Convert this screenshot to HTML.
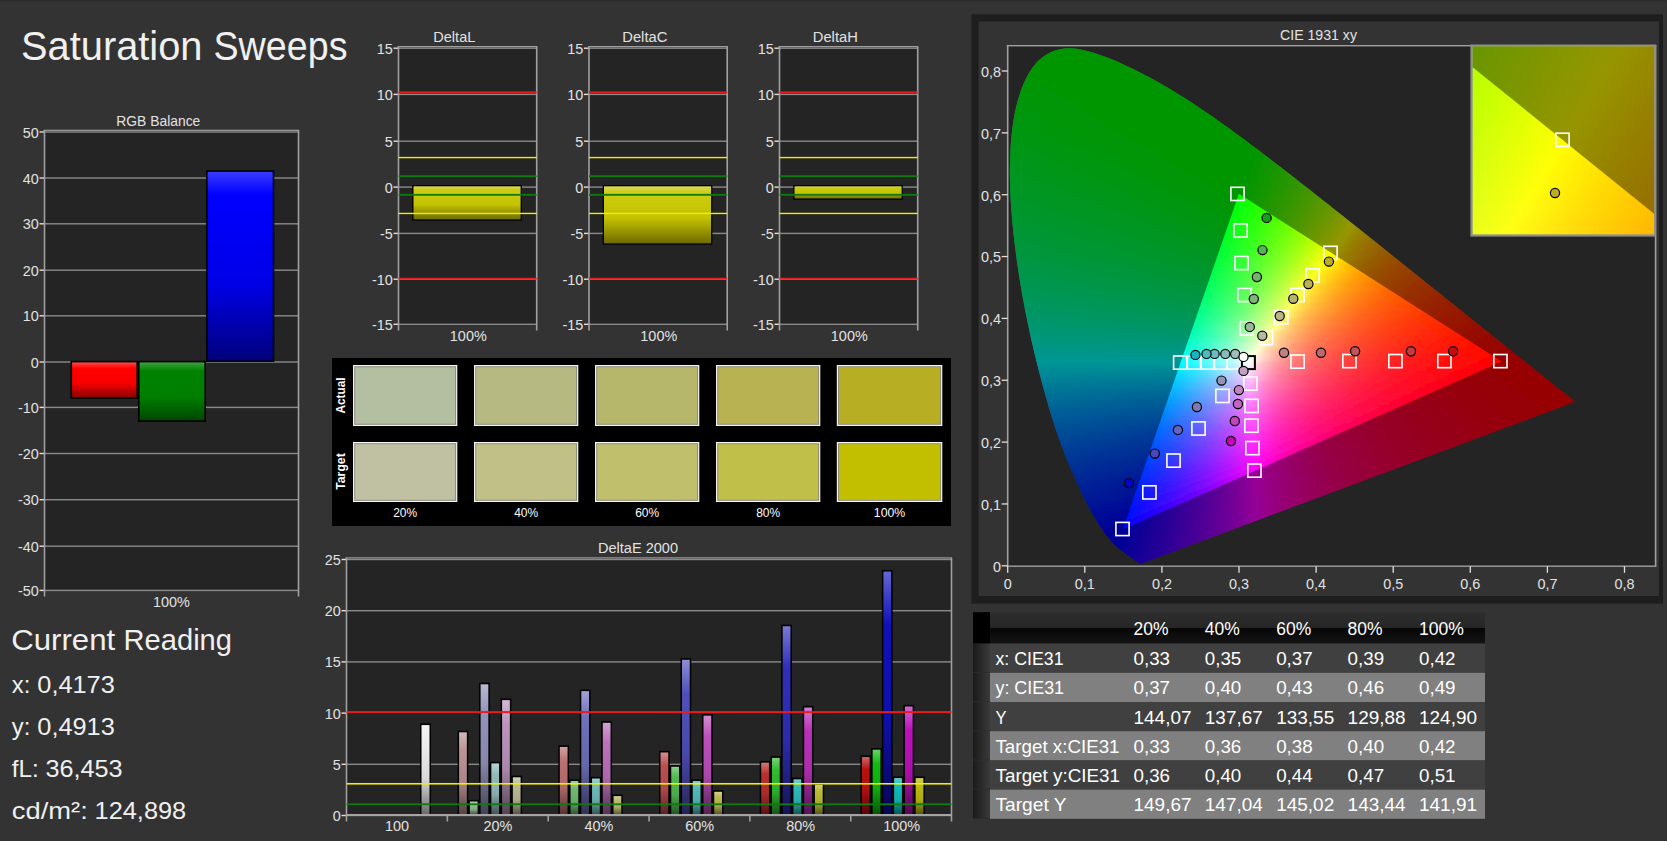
<!DOCTYPE html>
<html><head><meta charset="utf-8"><title>Saturation Sweeps</title>
<style>
html,body{margin:0;padding:0;background:#333333;overflow:hidden}
svg{display:block;font-family:'Liberation Sans', sans-serif;}
</style></head><body>
<svg width="1667" height="841" viewBox="0 0 1667 841">
<defs>
<linearGradient id="l1" x1="0" y1="0" x2="0" y2="1"><stop offset="0" stop-color="#ff4848"/><stop offset="0.18" stop-color="#ff0000"/><stop offset="0.6" stop-color="#f80000"/><stop offset="1" stop-color="#8c0000"/></linearGradient>
<linearGradient id="l2" x1="0" y1="0" x2="0" y2="1"><stop offset="0" stop-color="#3ca03c"/><stop offset="0.15" stop-color="#008200"/><stop offset="0.6" stop-color="#007e00"/><stop offset="1" stop-color="#004800"/></linearGradient>
<linearGradient id="l3" x1="0" y1="0" x2="0" y2="1"><stop offset="0" stop-color="#3a3aff"/><stop offset="0.12" stop-color="#0000ff"/><stop offset="0.6" stop-color="#0000e6"/><stop offset="1" stop-color="#00007c"/></linearGradient>
<linearGradient id="l4" x1="0" y1="0" x2="0" y2="1"><stop offset="0" stop-color="#dada55"/><stop offset="0.12" stop-color="#cccb10"/><stop offset="0.55" stop-color="#c4c300"/><stop offset="1" stop-color="#6e6c00"/></linearGradient>
<linearGradient id="l5" x1="0" y1="0" x2="0" y2="1"><stop offset="0" stop-color="#dada55"/><stop offset="0.12" stop-color="#cccb10"/><stop offset="0.55" stop-color="#c4c300"/><stop offset="1" stop-color="#6e6c00"/></linearGradient>
<linearGradient id="l6" x1="0" y1="0" x2="0" y2="1"><stop offset="0" stop-color="#dada55"/><stop offset="0.12" stop-color="#cccb10"/><stop offset="0.55" stop-color="#c4c300"/><stop offset="1" stop-color="#6e6c00"/></linearGradient>
<linearGradient id="l7" x1="0" y1="724.77" x2="0" y2="814.5" gradientUnits="userSpaceOnUse"><stop offset="0" stop-color="#f3f3f3"/><stop offset="0.22" stop-color="#ececec"/><stop offset="0.6" stop-color="#d9d9d9"/><stop offset="1" stop-color="#6a6a6a"/></linearGradient>
<linearGradient id="l8" x1="0" y1="732.02" x2="0" y2="814.5" gradientUnits="userSpaceOnUse"><stop offset="0" stop-color="#d3baba"/><stop offset="0.22" stop-color="#bb9393"/><stop offset="0.6" stop-color="#ac8787"/><stop offset="1" stop-color="#544242"/></linearGradient>
<linearGradient id="l9" x1="0" y1="801.21" x2="0" y2="814.5" gradientUnits="userSpaceOnUse"><stop offset="0" stop-color="#bad3ba"/><stop offset="0.22" stop-color="#93bb93"/><stop offset="0.6" stop-color="#87ac87"/><stop offset="1" stop-color="#425442"/></linearGradient>
<linearGradient id="l10" x1="0" y1="683.99" x2="0" y2="814.5" gradientUnits="userSpaceOnUse"><stop offset="0" stop-color="#babad3"/><stop offset="0.22" stop-color="#9393bb"/><stop offset="0.6" stop-color="#8787ac"/><stop offset="1" stop-color="#424254"/></linearGradient>
<linearGradient id="l11" x1="0" y1="763.09" x2="0" y2="814.5" gradientUnits="userSpaceOnUse"><stop offset="0" stop-color="#bad3d3"/><stop offset="0.22" stop-color="#93bbbb"/><stop offset="0.6" stop-color="#87acac"/><stop offset="1" stop-color="#425454"/></linearGradient>
<linearGradient id="l12" x1="0" y1="699.83" x2="0" y2="814.5" gradientUnits="userSpaceOnUse"><stop offset="0" stop-color="#d3bad3"/><stop offset="0.22" stop-color="#bb93bb"/><stop offset="0.6" stop-color="#ac87ac"/><stop offset="1" stop-color="#544254"/></linearGradient>
<linearGradient id="l13" x1="0" y1="776.99" x2="0" y2="814.5" gradientUnits="userSpaceOnUse"><stop offset="0" stop-color="#d3d3ba"/><stop offset="0.22" stop-color="#bbbb93"/><stop offset="0.6" stop-color="#acac87"/><stop offset="1" stop-color="#545442"/></linearGradient>
<linearGradient id="l14" x1="0" y1="746.64" x2="0" y2="814.5" gradientUnits="userSpaceOnUse"><stop offset="0" stop-color="#d3a3a3"/><stop offset="0.22" stop-color="#bb7070"/><stop offset="0.6" stop-color="#ac6767"/><stop offset="1" stop-color="#543232"/></linearGradient>
<linearGradient id="l15" x1="0" y1="780.77" x2="0" y2="814.5" gradientUnits="userSpaceOnUse"><stop offset="0" stop-color="#a3d3a3"/><stop offset="0.22" stop-color="#70bb70"/><stop offset="0.6" stop-color="#67ac67"/><stop offset="1" stop-color="#325432"/></linearGradient>
<linearGradient id="l16" x1="0" y1="690.84" x2="0" y2="814.5" gradientUnits="userSpaceOnUse"><stop offset="0" stop-color="#a3a3d3"/><stop offset="0.22" stop-color="#7070bb"/><stop offset="0.6" stop-color="#6767ac"/><stop offset="1" stop-color="#323254"/></linearGradient>
<linearGradient id="l17" x1="0" y1="778.22" x2="0" y2="814.5" gradientUnits="userSpaceOnUse"><stop offset="0" stop-color="#a3d3d3"/><stop offset="0.22" stop-color="#70bbbb"/><stop offset="0.6" stop-color="#67acac"/><stop offset="1" stop-color="#325454"/></linearGradient>
<linearGradient id="l18" x1="0" y1="722.52" x2="0" y2="814.5" gradientUnits="userSpaceOnUse"><stop offset="0" stop-color="#d3a3d3"/><stop offset="0.22" stop-color="#bb70bb"/><stop offset="0.6" stop-color="#ac67ac"/><stop offset="1" stop-color="#543254"/></linearGradient>
<linearGradient id="l19" x1="0" y1="795.8" x2="0" y2="814.5" gradientUnits="userSpaceOnUse"><stop offset="0" stop-color="#d3d3a3"/><stop offset="0.22" stop-color="#bbbb70"/><stop offset="0.6" stop-color="#acac67"/><stop offset="1" stop-color="#545432"/></linearGradient>
<linearGradient id="l20" x1="0" y1="752.16" x2="0" y2="814.5" gradientUnits="userSpaceOnUse"><stop offset="0" stop-color="#d38e8e"/><stop offset="0.22" stop-color="#bb4f4f"/><stop offset="0.6" stop-color="#ac4949"/><stop offset="1" stop-color="#542424"/></linearGradient>
<linearGradient id="l21" x1="0" y1="766.47" x2="0" y2="814.5" gradientUnits="userSpaceOnUse"><stop offset="0" stop-color="#8ed38e"/><stop offset="0.22" stop-color="#4fbb4f"/><stop offset="0.6" stop-color="#49ac49"/><stop offset="1" stop-color="#245424"/></linearGradient>
<linearGradient id="l22" x1="0" y1="659.46" x2="0" y2="814.5" gradientUnits="userSpaceOnUse"><stop offset="0" stop-color="#8e8ed3"/><stop offset="0.22" stop-color="#4f4fbb"/><stop offset="0.6" stop-color="#4949ac"/><stop offset="1" stop-color="#242454"/></linearGradient>
<linearGradient id="l23" x1="0" y1="780.77" x2="0" y2="814.5" gradientUnits="userSpaceOnUse"><stop offset="0" stop-color="#8ed3d3"/><stop offset="0.22" stop-color="#4fbbbb"/><stop offset="0.6" stop-color="#49acac"/><stop offset="1" stop-color="#245454"/></linearGradient>
<linearGradient id="l24" x1="0" y1="715.37" x2="0" y2="814.5" gradientUnits="userSpaceOnUse"><stop offset="0" stop-color="#d38ed3"/><stop offset="0.22" stop-color="#bb4fbb"/><stop offset="0.6" stop-color="#ac49ac"/><stop offset="1" stop-color="#542454"/></linearGradient>
<linearGradient id="l25" x1="0" y1="791.5" x2="0" y2="814.5" gradientUnits="userSpaceOnUse"><stop offset="0" stop-color="#d3d38e"/><stop offset="0.22" stop-color="#bbbb4f"/><stop offset="0.6" stop-color="#acac49"/><stop offset="1" stop-color="#545424"/></linearGradient>
<linearGradient id="l26" x1="0" y1="762.38" x2="0" y2="814.5" gradientUnits="userSpaceOnUse"><stop offset="0" stop-color="#d37a7a"/><stop offset="0.22" stop-color="#bb2f2f"/><stop offset="0.6" stop-color="#ac2b2b"/><stop offset="1" stop-color="#541515"/></linearGradient>
<linearGradient id="l27" x1="0" y1="757.57" x2="0" y2="814.5" gradientUnits="userSpaceOnUse"><stop offset="0" stop-color="#7ad37a"/><stop offset="0.22" stop-color="#2fbb2f"/><stop offset="0.6" stop-color="#2bac2b"/><stop offset="1" stop-color="#155415"/></linearGradient>
<linearGradient id="l28" x1="0" y1="625.94" x2="0" y2="814.5" gradientUnits="userSpaceOnUse"><stop offset="0" stop-color="#7a7ad3"/><stop offset="0.22" stop-color="#2f2fbb"/><stop offset="0.6" stop-color="#2b2bac"/><stop offset="1" stop-color="#151554"/></linearGradient>
<linearGradient id="l29" x1="0" y1="779.04" x2="0" y2="814.5" gradientUnits="userSpaceOnUse"><stop offset="0" stop-color="#7ad3d3"/><stop offset="0.22" stop-color="#2fbbbb"/><stop offset="0.6" stop-color="#2bacac"/><stop offset="1" stop-color="#155454"/></linearGradient>
<linearGradient id="l30" x1="0" y1="707.19" x2="0" y2="814.5" gradientUnits="userSpaceOnUse"><stop offset="0" stop-color="#d37ad3"/><stop offset="0.22" stop-color="#bb2fbb"/><stop offset="0.6" stop-color="#ac2bac"/><stop offset="1" stop-color="#541554"/></linearGradient>
<linearGradient id="l31" x1="0" y1="784.45" x2="0" y2="814.5" gradientUnits="userSpaceOnUse"><stop offset="0" stop-color="#d3d37a"/><stop offset="0.22" stop-color="#bbbb2f"/><stop offset="0.6" stop-color="#acac2b"/><stop offset="1" stop-color="#545415"/></linearGradient>
<linearGradient id="l32" x1="0" y1="756.76" x2="0" y2="814.5" gradientUnits="userSpaceOnUse"><stop offset="0" stop-color="#d36666"/><stop offset="0.22" stop-color="#bb1010"/><stop offset="0.6" stop-color="#ac0f0f"/><stop offset="1" stop-color="#540707"/></linearGradient>
<linearGradient id="l33" x1="0" y1="749.4" x2="0" y2="814.5" gradientUnits="userSpaceOnUse"><stop offset="0" stop-color="#66d366"/><stop offset="0.22" stop-color="#10bb10"/><stop offset="0.6" stop-color="#0fac0f"/><stop offset="1" stop-color="#075407"/></linearGradient>
<linearGradient id="l34" x1="0" y1="571.26" x2="0" y2="814.5" gradientUnits="userSpaceOnUse"><stop offset="0" stop-color="#6666d3"/><stop offset="0.22" stop-color="#1010bb"/><stop offset="0.6" stop-color="#0f0fac"/><stop offset="1" stop-color="#070754"/></linearGradient>
<linearGradient id="l35" x1="0" y1="777.81" x2="0" y2="814.5" gradientUnits="userSpaceOnUse"><stop offset="0" stop-color="#66d3d3"/><stop offset="0.22" stop-color="#10bbbb"/><stop offset="0.6" stop-color="#0facac"/><stop offset="1" stop-color="#075454"/></linearGradient>
<linearGradient id="l36" x1="0" y1="706.17" x2="0" y2="814.5" gradientUnits="userSpaceOnUse"><stop offset="0" stop-color="#d366d3"/><stop offset="0.22" stop-color="#bb10bb"/><stop offset="0.6" stop-color="#ac0fac"/><stop offset="1" stop-color="#540754"/></linearGradient>
<linearGradient id="l37" x1="0" y1="777.81" x2="0" y2="814.5" gradientUnits="userSpaceOnUse"><stop offset="0" stop-color="#d3d366"/><stop offset="0.22" stop-color="#bbbb10"/><stop offset="0.6" stop-color="#acac0f"/><stop offset="1" stop-color="#545407"/></linearGradient>
<linearGradient id="l38" x1="0" y1="0" x2="0" y2="1"><stop offset="0" stop-color="#2e2e2e"/><stop offset="0.5" stop-color="#262626"/><stop offset="0.5" stop-color="#060606"/><stop offset="1" stop-color="#141414"/></linearGradient>
<linearGradient id="l39" x1="0" y1="0" x2="1" y2="0"><stop offset="0" stop-color="#1a1a1a"/><stop offset="1" stop-color="#3a3a3a"/></linearGradient>
<clipPath id="locus"><path d="M1141.59,563.42 L1141.57,563.42 L1141.56,563.41 L1141.55,563.41 L1141.53,563.4 L1141.51,563.41 L1141.48,563.42 L1141.45,563.43 L1141.42,563.44 L1141.38,563.45 L1141.35,563.45 L1141.31,563.44 L1141.27,563.43 L1141.24,563.43 L1141.2,563.43 L1141.16,563.44 L1141.13,563.46 L1141.09,563.48 L1141.06,563.5 L1141.02,563.51 L1140.99,563.52 L1140.95,563.53 L1140.91,563.53 L1140.86,563.53 L1140.81,563.53 L1140.75,563.53 L1140.68,563.53 L1140.61,563.52 L1140.54,563.52 L1140.47,563.52 L1140.4,563.52 L1140.33,563.52 L1140.26,563.52 L1140.18,563.52 L1140.1,563.51 L1140.02,563.5 L1139.94,563.48 L1139.86,563.46 L1139.76,563.43 L1139.64,563.39 L1139.5,563.33 L1139.34,563.26 L1139.18,563.19 L1139.01,563.1 L1138.83,563.01 L1138.64,562.9 L1138.45,562.79 L1138.24,562.66 L1138.03,562.53 L1137.79,562.38 L1137.54,562.21 L1137.27,562.04 L1136.98,561.85 L1136.67,561.64 L1136.34,561.42 L1136.01,561.19 L1135.66,560.93 L1135.3,560.66 L1134.92,560.37 L1134.52,560.07 L1134.09,559.76 L1133.64,559.43 L1133.16,559.08 L1132.65,558.72 L1132.11,558.34 L1131.53,557.93 L1130.92,557.5 L1130.27,557.04 L1129.58,556.55 L1128.85,556.04 L1128.08,555.5 L1127.28,554.94 L1126.45,554.35 L1125.58,553.73 L1124.67,553.07 L1123.71,552.37 L1122.71,551.62 L1121.66,550.82 L1120.58,549.95 L1119.45,549.03 L1118.28,548.05 L1117.08,547 L1115.84,545.87 L1114.54,544.63 L1113.18,543.27 L1111.74,541.73 L1110.2,539.98 L1108.55,538 L1106.78,535.78 L1104.91,533.31 L1102.94,530.59 L1100.9,527.62 L1098.76,524.36 L1096.52,520.79 L1094.18,516.87 L1091.72,512.55 L1089.14,507.81 L1086.45,502.6 L1083.63,496.92 L1080.67,490.75 L1077.57,484.07 L1074.31,476.85 L1070.91,469.05 L1067.38,460.63 L1063.77,451.56 L1060.11,441.81 L1056.47,431.41 L1052.85,420.36 L1049.26,408.66 L1045.67,396.29 L1042.09,383.26 L1038.51,369.59 L1034.98,355.35 L1031.55,340.63 L1028.25,325.52 L1025.13,310.13 L1022.23,294.57 L1019.58,278.91 L1017.19,263.23 L1015.1,247.57 L1013.31,232.03 L1011.86,216.72 L1010.77,201.78 L1010.08,187.29 L1009.81,173.27 L1009.98,159.72 L1010.59,146.63 L1011.65,134.07 L1013.18,122.13 L1015.2,110.9 L1017.72,100.48 L1020.73,90.9 L1024.19,82.19 L1028.08,74.45 L1032.37,67.72 L1037.03,62.08 L1042.04,57.49 L1047.33,53.91 L1052.86,51.26 L1058.57,49.49 L1064.44,48.54 L1070.43,48.36 L1076.52,48.86 L1082.71,49.91 L1088.95,51.41 L1095.25,53.26 L1101.57,55.4 L1107.91,57.78 L1114.22,60.36 L1120.46,63.08 L1126.6,65.9 L1132.64,68.77 L1138.59,71.7 L1144.48,74.7 L1150.31,77.78 L1156.09,80.95 L1161.84,84.2 L1167.54,87.52 L1173.22,90.91 L1178.87,94.38 L1184.5,97.91 L1190.11,101.52 L1195.71,105.19 L1201.3,108.92 L1206.88,112.71 L1212.44,116.55 L1218,120.44 L1223.54,124.38 L1229.08,128.36 L1234.61,132.38 L1240.14,136.44 L1245.67,140.54 L1251.2,144.67 L1256.73,148.83 L1262.26,153.01 L1267.78,157.22 L1273.31,161.46 L1278.84,165.72 L1284.36,170 L1289.89,174.29 L1295.41,178.59 L1300.93,182.91 L1306.44,187.23 L1311.95,191.56 L1317.46,195.9 L1322.95,200.24 L1328.44,204.58 L1333.92,208.92 L1339.38,213.26 L1344.83,217.59 L1350.26,221.91 L1355.67,226.23 L1361.07,230.53 L1366.43,234.82 L1371.78,239.1 L1377.09,243.35 L1382.38,247.58 L1387.63,251.79 L1392.84,255.97 L1398.02,260.12 L1403.15,264.23 L1408.24,268.31 L1413.29,272.34 L1418.29,276.34 L1423.23,280.3 L1428.12,284.21 L1432.95,288.06 L1437.71,291.87 L1442.41,295.62 L1447.04,299.32 L1451.59,302.97 L1456.08,306.56 L1460.48,310.09 L1464.79,313.55 L1468.99,316.93 L1473.07,320.2 L1477.01,323.36 L1480.83,326.41 L1484.54,329.38 L1488.16,332.28 L1491.7,335.11 L1495.17,337.88 L1498.55,340.59 L1501.84,343.22 L1505.02,345.77 L1508.08,348.21 L1511.02,350.55 L1513.83,352.8 L1516.54,354.95 L1519.13,357.02 L1521.64,359.01 L1524.04,360.93 L1526.35,362.78 L1528.56,364.55 L1530.68,366.25 L1532.7,367.87 L1534.64,369.43 L1536.48,370.91 L1538.24,372.32 L1539.93,373.67 L1541.53,374.96 L1543.07,376.19 L1544.54,377.36 L1545.94,378.48 L1547.28,379.55 L1548.57,380.57 L1549.79,381.55 L1550.97,382.49 L1552.09,383.39 L1553.17,384.25 L1554.22,385.09 L1555.24,385.91 L1556.22,386.69 L1557.16,387.45 L1558.07,388.18 L1558.95,388.88 L1559.79,389.55 L1560.59,390.2 L1561.36,390.82 L1562.1,391.41 L1562.81,391.98 L1563.49,392.53 L1564.14,393.05 L1564.76,393.55 L1565.35,394.02 L1565.9,394.46 L1566.42,394.87 L1566.91,395.26 L1567.36,395.62 L1567.79,395.96 L1568.19,396.29 L1568.58,396.6 L1568.95,396.9 L1569.3,397.18 L1569.64,397.45 L1569.95,397.7 L1570.25,397.94 L1570.53,398.17 L1570.8,398.38 L1571.04,398.58 L1571.27,398.76 L1571.47,398.92 L1571.66,399.07 L1571.83,399.21 L1571.98,399.33 L1572.13,399.45 L1572.28,399.57 L1572.42,399.69 L1572.57,399.8 L1572.7,399.91 L1572.83,400.01 L1572.95,400.11 L1573.07,400.2 L1573.18,400.29 L1573.29,400.38 L1573.39,400.46 L1573.5,400.55 L1573.61,400.64 L1573.72,400.73 L1573.83,400.81 L1573.93,400.9 L1574.03,400.98 L1574.14,401.06 L1574.24,401.14 L1574.33,401.22 L1574.42,401.29 L1574.49,401.35 L1574.55,401.4 L1574.6,401.44 L1574.65,401.47 L1574.68,401.5 L1574.72,401.53 L1574.75,401.56 L1574.79,401.59 L1574.81,401.61 L1574.84,401.63 L1574.86,401.65 L1574.88,401.66 L1574.9,401.68 L1574.92,401.69 L1574.92,401.69Z"/></clipPath>
<filter id="vb" x="0" y="0" width="100%" height="100%" filterUnits="objectBoundingBox"><feGaussianBlur stdDeviation="0 1.3"/></filter>
<linearGradient id="c40" gradientUnits="userSpaceOnUse" x1="1053" y1="0" x2="1087" y2="0"><stop offset="0" stop-color="#00ff00"/><stop offset="1" stop-color="#00ff00"/></linearGradient>
<linearGradient id="c41" gradientUnits="userSpaceOnUse" x1="1048" y1="0" x2="1094" y2="0"><stop offset="0" stop-color="#00ff00"/><stop offset="1" stop-color="#00ff00"/></linearGradient>
<linearGradient id="c42" gradientUnits="userSpaceOnUse" x1="1044" y1="0" x2="1101" y2="0"><stop offset="0" stop-color="#00ff00"/><stop offset="1" stop-color="#00ff00"/></linearGradient>
<linearGradient id="c43" gradientUnits="userSpaceOnUse" x1="1041" y1="0" x2="1107" y2="0"><stop offset="0" stop-color="#00ff00"/><stop offset="1" stop-color="#00ff00"/></linearGradient>
<linearGradient id="c44" gradientUnits="userSpaceOnUse" x1="1038" y1="0" x2="1112" y2="0"><stop offset="0" stop-color="#00ff00"/><stop offset="1" stop-color="#00ff00"/></linearGradient>
<linearGradient id="c45" gradientUnits="userSpaceOnUse" x1="1036" y1="0" x2="1117" y2="0"><stop offset="0" stop-color="#00ff00"/><stop offset="1" stop-color="#00ff00"/></linearGradient>
<linearGradient id="c46" gradientUnits="userSpaceOnUse" x1="1034" y1="0" x2="1121" y2="0"><stop offset="0" stop-color="#00ff00"/><stop offset="1" stop-color="#00ff00"/></linearGradient>
<linearGradient id="c47" gradientUnits="userSpaceOnUse" x1="1032" y1="0" x2="1126" y2="0"><stop offset="0" stop-color="#00ff00"/><stop offset="1" stop-color="#00ff00"/></linearGradient>
<linearGradient id="c48" gradientUnits="userSpaceOnUse" x1="1030" y1="0" x2="1130" y2="0"><stop offset="0" stop-color="#00ff00"/><stop offset="1" stop-color="#00ff00"/></linearGradient>
<linearGradient id="c49" gradientUnits="userSpaceOnUse" x1="1029" y1="0" x2="1135" y2="0"><stop offset="0" stop-color="#00ff01"/><stop offset="1" stop-color="#00ff00"/></linearGradient>
<linearGradient id="c50" gradientUnits="userSpaceOnUse" x1="1027" y1="0" x2="1139" y2="0"><stop offset="0" stop-color="#00ff02"/><stop offset="0.17" stop-color="#00ff00"/><stop offset="1" stop-color="#00ff00"/></linearGradient>
<linearGradient id="c51" gradientUnits="userSpaceOnUse" x1="1026" y1="0" x2="1143" y2="0"><stop offset="0" stop-color="#00ff03"/><stop offset="0.17" stop-color="#00ff00"/><stop offset="1" stop-color="#00ff00"/></linearGradient>
<linearGradient id="c52" gradientUnits="userSpaceOnUse" x1="1025" y1="0" x2="1147" y2="0"><stop offset="0" stop-color="#00ff04"/><stop offset="0.19" stop-color="#00ff00"/><stop offset="1" stop-color="#00ff00"/></linearGradient>
<linearGradient id="c53" gradientUnits="userSpaceOnUse" x1="1024" y1="0" x2="1150" y2="0"><stop offset="0" stop-color="#00ff05"/><stop offset="0.21" stop-color="#00ff00"/><stop offset="1" stop-color="#00ff00"/></linearGradient>
<linearGradient id="c54" gradientUnits="userSpaceOnUse" x1="1023" y1="0" x2="1154" y2="0"><stop offset="0" stop-color="#00ff06"/><stop offset="0.23" stop-color="#00ff00"/><stop offset="1" stop-color="#00ff00"/></linearGradient>
<linearGradient id="c55" gradientUnits="userSpaceOnUse" x1="1022" y1="0" x2="1158" y2="0"><stop offset="0" stop-color="#00ff07"/><stop offset="0.25" stop-color="#00ff00"/><stop offset="1" stop-color="#00ff00"/></linearGradient>
<linearGradient id="c56" gradientUnits="userSpaceOnUse" x1="1021" y1="0" x2="1161" y2="0"><stop offset="0" stop-color="#00ff07"/><stop offset="0.27" stop-color="#00ff00"/><stop offset="1" stop-color="#00ff00"/></linearGradient>
<linearGradient id="c57" gradientUnits="userSpaceOnUse" x1="1020" y1="0" x2="1165" y2="0"><stop offset="0" stop-color="#00ff08"/><stop offset="0.29" stop-color="#00ff00"/><stop offset="1" stop-color="#00ff00"/></linearGradient>
<linearGradient id="c58" gradientUnits="userSpaceOnUse" x1="1019" y1="0" x2="1168" y2="0"><stop offset="0" stop-color="#00ff09"/><stop offset="0.31" stop-color="#00ff00"/><stop offset="1" stop-color="#00ff00"/></linearGradient>
<linearGradient id="c59" gradientUnits="userSpaceOnUse" x1="1018" y1="0" x2="1172" y2="0"><stop offset="0" stop-color="#00ff0a"/><stop offset="0.32" stop-color="#00ff00"/><stop offset="1" stop-color="#00ff00"/></linearGradient>
<linearGradient id="c60" gradientUnits="userSpaceOnUse" x1="1018" y1="0" x2="1175" y2="0"><stop offset="0" stop-color="#00ff0b"/><stop offset="0.34" stop-color="#00ff00"/><stop offset="1" stop-color="#00ff00"/></linearGradient>
<linearGradient id="c61" gradientUnits="userSpaceOnUse" x1="1017" y1="0" x2="1178" y2="0"><stop offset="0" stop-color="#00ff0c"/><stop offset="0.35" stop-color="#00ff00"/><stop offset="1" stop-color="#00ff00"/></linearGradient>
<linearGradient id="c62" gradientUnits="userSpaceOnUse" x1="1016" y1="0" x2="1182" y2="0"><stop offset="0" stop-color="#00ff0d"/><stop offset="0.37" stop-color="#00ff00"/><stop offset="1" stop-color="#00ff00"/></linearGradient>
<linearGradient id="c63" gradientUnits="userSpaceOnUse" x1="1016" y1="0" x2="1185" y2="0"><stop offset="0" stop-color="#00ff0e"/><stop offset="0.38" stop-color="#00ff00"/><stop offset="1" stop-color="#00ff00"/></linearGradient>
<linearGradient id="c64" gradientUnits="userSpaceOnUse" x1="1015" y1="0" x2="1188" y2="0"><stop offset="0" stop-color="#00ff0f"/><stop offset="0.4" stop-color="#00ff00"/><stop offset="1" stop-color="#00ff00"/></linearGradient>
<linearGradient id="c65" gradientUnits="userSpaceOnUse" x1="1014" y1="0" x2="1191" y2="0"><stop offset="0" stop-color="#00ff10"/><stop offset="0.41" stop-color="#00ff00"/><stop offset="1" stop-color="#00ff00"/></linearGradient>
<linearGradient id="c66" gradientUnits="userSpaceOnUse" x1="1014" y1="0" x2="1194" y2="0"><stop offset="0" stop-color="#00ff11"/><stop offset="0.42" stop-color="#00ff00"/><stop offset="1" stop-color="#00ff00"/></linearGradient>
<linearGradient id="c67" gradientUnits="userSpaceOnUse" x1="1013" y1="0" x2="1197" y2="0"><stop offset="0" stop-color="#00ff12"/><stop offset="0.43" stop-color="#00ff00"/><stop offset="1" stop-color="#00ff00"/></linearGradient>
<linearGradient id="c68" gradientUnits="userSpaceOnUse" x1="1013" y1="0" x2="1200" y2="0"><stop offset="0" stop-color="#00ff12"/><stop offset="0.44" stop-color="#00ff00"/><stop offset="1" stop-color="#00ff00"/></linearGradient>
<linearGradient id="c69" gradientUnits="userSpaceOnUse" x1="1012" y1="0" x2="1203" y2="0"><stop offset="0" stop-color="#00ff14"/><stop offset="0.46" stop-color="#00ff00"/><stop offset="1" stop-color="#00ff00"/></linearGradient>
<linearGradient id="c70" gradientUnits="userSpaceOnUse" x1="1012" y1="0" x2="1206" y2="0"><stop offset="0" stop-color="#00ff14"/><stop offset="0.46" stop-color="#00ff00"/><stop offset="1" stop-color="#00ff00"/></linearGradient>
<linearGradient id="c71" gradientUnits="userSpaceOnUse" x1="1011" y1="0" x2="1209" y2="0"><stop offset="0" stop-color="#00ff15"/><stop offset="0.47" stop-color="#00ff00"/><stop offset="1" stop-color="#00ff00"/></linearGradient>
<linearGradient id="c72" gradientUnits="userSpaceOnUse" x1="1011" y1="0" x2="1212" y2="0"><stop offset="0" stop-color="#00ff16"/><stop offset="0.48" stop-color="#00ff00"/><stop offset="1" stop-color="#00ff00"/></linearGradient>
<linearGradient id="c73" gradientUnits="userSpaceOnUse" x1="1011" y1="0" x2="1215" y2="0"><stop offset="0" stop-color="#00ff17"/><stop offset="0.5" stop-color="#00ff00"/><stop offset="1" stop-color="#00ff00"/></linearGradient>
<linearGradient id="c74" gradientUnits="userSpaceOnUse" x1="1010" y1="0" x2="1218" y2="0"><stop offset="0" stop-color="#00ff18"/><stop offset="0.5" stop-color="#00ff00"/><stop offset="1" stop-color="#00ff00"/></linearGradient>
<linearGradient id="c75" gradientUnits="userSpaceOnUse" x1="1010" y1="0" x2="1221" y2="0"><stop offset="0" stop-color="#00ff19"/><stop offset="0.51" stop-color="#00ff00"/><stop offset="1" stop-color="#00ff00"/></linearGradient>
<linearGradient id="c76" gradientUnits="userSpaceOnUse" x1="1010" y1="0" x2="1224" y2="0"><stop offset="0" stop-color="#00ff1a"/><stop offset="0.52" stop-color="#00ff00"/><stop offset="1" stop-color="#00ff00"/></linearGradient>
<linearGradient id="c77" gradientUnits="userSpaceOnUse" x1="1009" y1="0" x2="1227" y2="0"><stop offset="0" stop-color="#00ff1b"/><stop offset="0.53" stop-color="#00ff00"/><stop offset="1" stop-color="#00ff00"/></linearGradient>
<linearGradient id="c78" gradientUnits="userSpaceOnUse" x1="1009" y1="0" x2="1229" y2="0"><stop offset="0" stop-color="#00ff1c"/><stop offset="0.54" stop-color="#00ff00"/><stop offset="1" stop-color="#00ff00"/></linearGradient>
<linearGradient id="c79" gradientUnits="userSpaceOnUse" x1="1009" y1="0" x2="1232" y2="0"><stop offset="0" stop-color="#00ff1d"/><stop offset="0.54" stop-color="#00ff00"/><stop offset="1" stop-color="#00ff00"/></linearGradient>
<linearGradient id="c80" gradientUnits="userSpaceOnUse" x1="1009" y1="0" x2="1235" y2="0"><stop offset="0" stop-color="#00ff1e"/><stop offset="0.55" stop-color="#00ff00"/><stop offset="1" stop-color="#00ff00"/></linearGradient>
<linearGradient id="c81" gradientUnits="userSpaceOnUse" x1="1008" y1="0" x2="1238" y2="0"><stop offset="0" stop-color="#00ff1f"/><stop offset="0.56" stop-color="#00ff00"/><stop offset="1" stop-color="#00ff00"/></linearGradient>
<linearGradient id="c82" gradientUnits="userSpaceOnUse" x1="1008" y1="0" x2="1240" y2="0"><stop offset="0" stop-color="#00ff20"/><stop offset="0.53" stop-color="#00ff01"/><stop offset="0.77" stop-color="#00ff00"/><stop offset="1" stop-color="#00ff00"/></linearGradient>
<linearGradient id="c83" gradientUnits="userSpaceOnUse" x1="1008" y1="0" x2="1243" y2="0"><stop offset="0" stop-color="#00ff21"/><stop offset="0.53" stop-color="#00ff02"/><stop offset="0.59" stop-color="#00ff00"/><stop offset="1" stop-color="#00ff00"/></linearGradient>
<linearGradient id="c84" gradientUnits="userSpaceOnUse" x1="1008" y1="0" x2="1246" y2="0"><stop offset="0" stop-color="#00ff21"/><stop offset="0.52" stop-color="#00ff03"/><stop offset="0.58" stop-color="#00ff00"/><stop offset="1" stop-color="#00ff00"/></linearGradient>
<linearGradient id="c85" gradientUnits="userSpaceOnUse" x1="1008" y1="0" x2="1248" y2="0"><stop offset="0" stop-color="#00ff22"/><stop offset="0.51" stop-color="#00ff04"/><stop offset="0.59" stop-color="#00ff00"/><stop offset="1" stop-color="#00ff00"/></linearGradient>
<linearGradient id="c86" gradientUnits="userSpaceOnUse" x1="1007.7" y1="0" x2="1251" y2="0"><stop offset="0" stop-color="#00ff23"/><stop offset="0.51" stop-color="#00ff05"/><stop offset="0.6" stop-color="#00ff00"/><stop offset="1" stop-color="#00ff00"/></linearGradient>
<linearGradient id="c87" gradientUnits="userSpaceOnUse" x1="1007.7" y1="0" x2="1254" y2="0"><stop offset="0" stop-color="#00ff24"/><stop offset="0.5" stop-color="#00ff06"/><stop offset="0.6" stop-color="#00ff00"/><stop offset="1" stop-color="#00ff00"/></linearGradient>
<linearGradient id="c88" gradientUnits="userSpaceOnUse" x1="1007.7" y1="0" x2="1256" y2="0"><stop offset="0" stop-color="#00ff25"/><stop offset="0.49" stop-color="#00ff07"/><stop offset="0.61" stop-color="#00ff00"/><stop offset="1" stop-color="#00ff00"/></linearGradient>
<linearGradient id="c89" gradientUnits="userSpaceOnUse" x1="1007.7" y1="0" x2="1259" y2="0"><stop offset="0" stop-color="#00ff26"/><stop offset="0.49" stop-color="#00ff08"/><stop offset="0.61" stop-color="#00ff00"/><stop offset="0.99" stop-color="#00ff00"/><stop offset="1" stop-color="#02ff00"/></linearGradient>
<linearGradient id="c90" gradientUnits="userSpaceOnUse" x1="1007.7" y1="0" x2="1262" y2="0"><stop offset="0" stop-color="#00ff27"/><stop offset="0.48" stop-color="#00ff09"/><stop offset="0.62" stop-color="#00ff00"/><stop offset="0.98" stop-color="#01ff00"/><stop offset="1" stop-color="#07ff00"/></linearGradient>
<linearGradient id="c91" gradientUnits="userSpaceOnUse" x1="1007.7" y1="0" x2="1264" y2="0"><stop offset="0" stop-color="#00ff28"/><stop offset="0.47" stop-color="#00ff0a"/><stop offset="0.62" stop-color="#00ff00"/><stop offset="0.97" stop-color="#00ff00"/><stop offset="1" stop-color="#0bff00"/></linearGradient>
<linearGradient id="c92" gradientUnits="userSpaceOnUse" x1="1007.7" y1="0" x2="1267" y2="0"><stop offset="0" stop-color="#00ff29"/><stop offset="0.47" stop-color="#00ff0b"/><stop offset="0.63" stop-color="#00ff00"/><stop offset="0.95" stop-color="#00ff00"/><stop offset="1" stop-color="#10ff00"/></linearGradient>
<linearGradient id="c93" gradientUnits="userSpaceOnUse" x1="1007.7" y1="0" x2="1270" y2="0"><stop offset="0" stop-color="#00ff2a"/><stop offset="0.46" stop-color="#00ff0c"/><stop offset="0.63" stop-color="#00ff00"/><stop offset="0.94" stop-color="#01ff00"/><stop offset="1" stop-color="#15ff00"/></linearGradient>
<linearGradient id="c94" gradientUnits="userSpaceOnUse" x1="1007.7" y1="0" x2="1272" y2="0"><stop offset="0" stop-color="#00ff2b"/><stop offset="0.45" stop-color="#00ff0e"/><stop offset="0.64" stop-color="#00ff00"/><stop offset="0.93" stop-color="#00ff00"/><stop offset="1" stop-color="#19ff00"/></linearGradient>
<linearGradient id="c95" gradientUnits="userSpaceOnUse" x1="1007.7" y1="0" x2="1275" y2="0"><stop offset="0" stop-color="#00ff2c"/><stop offset="0.45" stop-color="#00ff0f"/><stop offset="0.64" stop-color="#00ff00"/><stop offset="0.92" stop-color="#00ff00"/><stop offset="1" stop-color="#1eff00"/></linearGradient>
<linearGradient id="c96" gradientUnits="userSpaceOnUse" x1="1007.7" y1="0" x2="1278" y2="0"><stop offset="0" stop-color="#00ff2d"/><stop offset="0.44" stop-color="#00ff10"/><stop offset="0.65" stop-color="#00ff00"/><stop offset="0.91" stop-color="#01ff00"/><stop offset="1" stop-color="#23ff00"/></linearGradient>
<linearGradient id="c97" gradientUnits="userSpaceOnUse" x1="1007.7" y1="0" x2="1280" y2="0"><stop offset="0" stop-color="#00ff2e"/><stop offset="0.44" stop-color="#00ff11"/><stop offset="0.65" stop-color="#00ff00"/><stop offset="0.9" stop-color="#01ff00"/><stop offset="1" stop-color="#27ff00"/></linearGradient>
<linearGradient id="c98" gradientUnits="userSpaceOnUse" x1="1007.7" y1="0" x2="1283" y2="0"><stop offset="0" stop-color="#00ff2f"/><stop offset="0.43" stop-color="#00ff12"/><stop offset="0.66" stop-color="#00ff00"/><stop offset="0.88" stop-color="#00ff00"/><stop offset="1" stop-color="#2dff00"/></linearGradient>
<linearGradient id="c99" gradientUnits="userSpaceOnUse" x1="1007.7" y1="0" x2="1285" y2="0"><stop offset="0" stop-color="#00ff31"/><stop offset="0.43" stop-color="#00ff13"/><stop offset="0.66" stop-color="#00ff00"/><stop offset="0.87" stop-color="#00ff00"/><stop offset="1" stop-color="#31ff00"/></linearGradient>
<linearGradient id="c100" gradientUnits="userSpaceOnUse" x1="1007.7" y1="0" x2="1288" y2="0"><stop offset="0" stop-color="#00ff32"/><stop offset="0.42" stop-color="#00ff14"/><stop offset="0.67" stop-color="#00ff00"/><stop offset="0.86" stop-color="#01ff00"/><stop offset="1" stop-color="#37ff00"/></linearGradient>
<linearGradient id="c101" gradientUnits="userSpaceOnUse" x1="1007.7" y1="0" x2="1290" y2="0"><stop offset="0" stop-color="#00ff33"/><stop offset="0.42" stop-color="#00ff16"/><stop offset="0.68" stop-color="#00ff00"/><stop offset="0.85" stop-color="#00ff00"/><stop offset="1" stop-color="#3bff00"/></linearGradient>
<linearGradient id="c102" gradientUnits="userSpaceOnUse" x1="1007.7" y1="0" x2="1293" y2="0"><stop offset="0" stop-color="#00ff34"/><stop offset="0.41" stop-color="#00ff17"/><stop offset="0.68" stop-color="#00ff00"/><stop offset="0.84" stop-color="#00ff00"/><stop offset="0.98" stop-color="#3bff00"/><stop offset="1" stop-color="#42ff00"/></linearGradient>
<linearGradient id="c103" gradientUnits="userSpaceOnUse" x1="1007.7" y1="0" x2="1296" y2="0"><stop offset="0" stop-color="#00ff35"/><stop offset="0.41" stop-color="#00ff18"/><stop offset="0.68" stop-color="#00ff00"/><stop offset="0.83" stop-color="#01ff00"/><stop offset="0.98" stop-color="#3eff00"/><stop offset="1" stop-color="#48ff00"/></linearGradient>
<linearGradient id="c104" gradientUnits="userSpaceOnUse" x1="1007.7" y1="0" x2="1298" y2="0"><stop offset="0" stop-color="#00ff36"/><stop offset="0.41" stop-color="#00ff19"/><stop offset="0.69" stop-color="#00ff00"/><stop offset="0.82" stop-color="#00ff00"/><stop offset="0.97" stop-color="#3eff00"/><stop offset="1" stop-color="#4dff00"/></linearGradient>
<linearGradient id="c105" gradientUnits="userSpaceOnUse" x1="1007.7" y1="0" x2="1301" y2="0"><stop offset="0" stop-color="#00ff37"/><stop offset="0.4" stop-color="#00ff1a"/><stop offset="0.69" stop-color="#00ff00"/><stop offset="0.81" stop-color="#00ff00"/><stop offset="0.95" stop-color="#3dff00"/><stop offset="1" stop-color="#53ff00"/></linearGradient>
<linearGradient id="c106" gradientUnits="userSpaceOnUse" x1="1007.7" y1="0" x2="1303" y2="0"><stop offset="0" stop-color="#00ff38"/><stop offset="0.4" stop-color="#00ff1b"/><stop offset="0.7" stop-color="#00ff00"/><stop offset="0.81" stop-color="#01ff00"/><stop offset="0.94" stop-color="#3eff00"/><stop offset="1" stop-color="#58ff00"/></linearGradient>
<linearGradient id="c107" gradientUnits="userSpaceOnUse" x1="1007.7" y1="0" x2="1306" y2="0"><stop offset="0" stop-color="#00ff39"/><stop offset="0.39" stop-color="#00ff1d"/><stop offset="0.7" stop-color="#00ff00"/><stop offset="0.79" stop-color="#00ff00"/><stop offset="0.93" stop-color="#3eff00"/><stop offset="1" stop-color="#5fff00"/></linearGradient>
<linearGradient id="c108" gradientUnits="userSpaceOnUse" x1="1007.7" y1="0" x2="1308" y2="0"><stop offset="0" stop-color="#00ff3b"/><stop offset="0.39" stop-color="#00ff1e"/><stop offset="0.71" stop-color="#00ff00"/><stop offset="0.79" stop-color="#00ff00"/><stop offset="0.92" stop-color="#3eff00"/><stop offset="1" stop-color="#64ff00"/></linearGradient>
<linearGradient id="c109" gradientUnits="userSpaceOnUse" x1="1007.7" y1="0" x2="1311" y2="0"><stop offset="0" stop-color="#00ff3c"/><stop offset="0.38" stop-color="#00ff1f"/><stop offset="0.7" stop-color="#00ff01"/><stop offset="0.78" stop-color="#01ff00"/><stop offset="0.91" stop-color="#3fff00"/><stop offset="1" stop-color="#6bff00"/></linearGradient>
<linearGradient id="c110" gradientUnits="userSpaceOnUse" x1="1007.7" y1="0" x2="1313" y2="0"><stop offset="0" stop-color="#00ff3d"/><stop offset="0.38" stop-color="#00ff20"/><stop offset="0.69" stop-color="#00ff02"/><stop offset="0.73" stop-color="#00ff00"/><stop offset="0.77" stop-color="#01ff00"/><stop offset="0.9" stop-color="#3eff00"/><stop offset="1" stop-color="#71ff00"/></linearGradient>
<linearGradient id="c111" gradientUnits="userSpaceOnUse" x1="1007.7" y1="0" x2="1316" y2="0"><stop offset="0" stop-color="#00ff3e"/><stop offset="0.38" stop-color="#00ff22"/><stop offset="0.68" stop-color="#00ff03"/><stop offset="0.72" stop-color="#00ff00"/><stop offset="0.76" stop-color="#00ff00"/><stop offset="0.89" stop-color="#3dff00"/><stop offset="1" stop-color="#78ff00"/></linearGradient>
<linearGradient id="c112" gradientUnits="userSpaceOnUse" x1="1007.7" y1="0" x2="1319" y2="0"><stop offset="0" stop-color="#00ff3f"/><stop offset="0.37" stop-color="#00ff23"/><stop offset="0.67" stop-color="#00ff05"/><stop offset="0.72" stop-color="#00ff00"/><stop offset="0.75" stop-color="#00ff00"/><stop offset="0.87" stop-color="#38ff00"/><stop offset="0.99" stop-color="#78ff00"/><stop offset="1" stop-color="#80ff00"/></linearGradient>
<linearGradient id="c113" gradientUnits="userSpaceOnUse" x1="1007.7" y1="0" x2="1321" y2="0"><stop offset="0" stop-color="#00ff41"/><stop offset="0.37" stop-color="#00ff24"/><stop offset="0.67" stop-color="#00ff06"/><stop offset="0.73" stop-color="#00ff00"/><stop offset="0.74" stop-color="#01ff00"/><stop offset="0.87" stop-color="#3fff00"/><stop offset="0.99" stop-color="#7eff00"/><stop offset="1" stop-color="#86ff00"/></linearGradient>
<linearGradient id="c114" gradientUnits="userSpaceOnUse" x1="1007.7" y1="0" x2="1324" y2="0"><stop offset="0" stop-color="#00ff42"/><stop offset="0.36" stop-color="#00ff26"/><stop offset="0.66" stop-color="#00ff07"/><stop offset="0.73" stop-color="#00ff00"/><stop offset="0.75" stop-color="#06ff00"/><stop offset="0.87" stop-color="#44ff00"/><stop offset="0.98" stop-color="#84ff00"/><stop offset="1" stop-color="#8eff00"/></linearGradient>
<linearGradient id="c115" gradientUnits="userSpaceOnUse" x1="1007.7" y1="0" x2="1326" y2="0"><stop offset="0" stop-color="#00ff43"/><stop offset="0.36" stop-color="#00ff27"/><stop offset="0.65" stop-color="#00ff09"/><stop offset="0.73" stop-color="#00ff00"/><stop offset="0.85" stop-color="#3bff00"/><stop offset="0.96" stop-color="#7bff00"/><stop offset="1" stop-color="#94ff00"/></linearGradient>
<linearGradient id="c116" gradientUnits="userSpaceOnUse" x1="1007.7" y1="0" x2="1329" y2="0"><stop offset="0" stop-color="#00ff44"/><stop offset="0.35" stop-color="#00ff28"/><stop offset="0.64" stop-color="#00ff0b"/><stop offset="0.72" stop-color="#01ff01"/><stop offset="0.76" stop-color="#13ff00"/><stop offset="0.87" stop-color="#51ff00"/><stop offset="0.98" stop-color="#92ff00"/><stop offset="1" stop-color="#9cff00"/></linearGradient>
<linearGradient id="c117" gradientUnits="userSpaceOnUse" x1="1007.7" y1="0" x2="1331" y2="0"><stop offset="0" stop-color="#00ff46"/><stop offset="0.35" stop-color="#00ff2a"/><stop offset="0.64" stop-color="#00ff0c"/><stop offset="0.71" stop-color="#00ff03"/><stop offset="0.75" stop-color="#11ff00"/><stop offset="0.86" stop-color="#50ff00"/><stop offset="0.97" stop-color="#8fff00"/><stop offset="1" stop-color="#a3ff00"/></linearGradient>
<linearGradient id="c118" gradientUnits="userSpaceOnUse" x1="1007.7" y1="0" x2="1334" y2="0"><stop offset="0" stop-color="#00ff47"/><stop offset="0.35" stop-color="#00ff2b"/><stop offset="0.63" stop-color="#00ff0d"/><stop offset="0.7" stop-color="#00ff05"/><stop offset="0.75" stop-color="#17ff00"/><stop offset="0.86" stop-color="#55ff00"/><stop offset="0.97" stop-color="#95ff00"/><stop offset="1" stop-color="#acff00"/></linearGradient>
<linearGradient id="c119" gradientUnits="userSpaceOnUse" x1="1007.7" y1="0" x2="1336" y2="0"><stop offset="0" stop-color="#00ff48"/><stop offset="0.35" stop-color="#00ff2c"/><stop offset="0.63" stop-color="#00ff0f"/><stop offset="0.7" stop-color="#01ff06"/><stop offset="0.75" stop-color="#1dff00"/><stop offset="0.87" stop-color="#5cff00"/><stop offset="0.97" stop-color="#9cff00"/><stop offset="1" stop-color="#b3ff00"/></linearGradient>
<linearGradient id="c120" gradientUnits="userSpaceOnUse" x1="1007.7" y1="0" x2="1339" y2="0"><stop offset="0" stop-color="#00ff4a"/><stop offset="0.34" stop-color="#00ff2e"/><stop offset="0.62" stop-color="#00ff10"/><stop offset="0.69" stop-color="#01ff08"/><stop offset="0.75" stop-color="#23ff00"/><stop offset="0.86" stop-color="#62ff00"/><stop offset="0.96" stop-color="#a2ff00"/><stop offset="1" stop-color="#bcff00"/></linearGradient>
<linearGradient id="c121" gradientUnits="userSpaceOnUse" x1="1007.7" y1="0" x2="1341" y2="0"><stop offset="0" stop-color="#00ff4b"/><stop offset="0.34" stop-color="#00ff2f"/><stop offset="0.62" stop-color="#00ff12"/><stop offset="0.68" stop-color="#00ff0a"/><stop offset="0.76" stop-color="#29ff00"/><stop offset="0.87" stop-color="#69ff00"/><stop offset="0.96" stop-color="#a9ff00"/><stop offset="1" stop-color="#c3ff00"/></linearGradient>
<linearGradient id="c122" gradientUnits="userSpaceOnUse" x1="1007.7" y1="0" x2="1344" y2="0"><stop offset="0" stop-color="#00ff4c"/><stop offset="0.34" stop-color="#00ff31"/><stop offset="0.61" stop-color="#00ff13"/><stop offset="0.67" stop-color="#00ff0b"/><stop offset="0.76" stop-color="#30ff00"/><stop offset="0.87" stop-color="#6fff00"/><stop offset="0.96" stop-color="#b0ff00"/><stop offset="1" stop-color="#cdff00"/></linearGradient>
<linearGradient id="c123" gradientUnits="userSpaceOnUse" x1="1007.7" y1="0" x2="1346" y2="0"><stop offset="0" stop-color="#00ff4e"/><stop offset="0.33" stop-color="#00ff32"/><stop offset="0.6" stop-color="#00ff15"/><stop offset="0.67" stop-color="#01ff0d"/><stop offset="0.77" stop-color="#37ff00"/><stop offset="0.87" stop-color="#75ff00"/><stop offset="0.96" stop-color="#b5ff00"/><stop offset="1" stop-color="#d5ff00"/></linearGradient>
<linearGradient id="c124" gradientUnits="userSpaceOnUse" x1="1008" y1="0" x2="1349" y2="0"><stop offset="0" stop-color="#00ff4f"/><stop offset="0.33" stop-color="#00ff34"/><stop offset="0.6" stop-color="#00ff16"/><stop offset="0.66" stop-color="#01ff0e"/><stop offset="0.77" stop-color="#3eff00"/><stop offset="0.87" stop-color="#7eff00"/><stop offset="0.96" stop-color="#c0ff00"/><stop offset="1" stop-color="#e0ff00"/></linearGradient>
<linearGradient id="c125" gradientUnits="userSpaceOnUse" x1="1008" y1="0" x2="1351" y2="0"><stop offset="0" stop-color="#00ff50"/><stop offset="0.33" stop-color="#00ff35"/><stop offset="0.59" stop-color="#00ff18"/><stop offset="0.65" stop-color="#00ff10"/><stop offset="0.76" stop-color="#3eff01"/><stop offset="0.86" stop-color="#7eff00"/><stop offset="0.95" stop-color="#c0ff00"/><stop offset="1" stop-color="#e8ff00"/></linearGradient>
<linearGradient id="c126" gradientUnits="userSpaceOnUse" x1="1008" y1="0" x2="1354" y2="0"><stop offset="0" stop-color="#00ff52"/><stop offset="0.32" stop-color="#00ff37"/><stop offset="0.59" stop-color="#00ff1a"/><stop offset="0.64" stop-color="#00ff12"/><stop offset="0.74" stop-color="#37ff04"/><stop offset="0.77" stop-color="#4cff00"/><stop offset="0.87" stop-color="#8dff00"/><stop offset="0.96" stop-color="#cfff00"/><stop offset="1" stop-color="#f3ff00"/></linearGradient>
<linearGradient id="c127" gradientUnits="userSpaceOnUse" x1="1008" y1="0" x2="1356" y2="0"><stop offset="0" stop-color="#00ff53"/><stop offset="0.32" stop-color="#00ff38"/><stop offset="0.58" stop-color="#00ff1b"/><stop offset="0.64" stop-color="#01ff13"/><stop offset="0.74" stop-color="#3eff04"/><stop offset="0.78" stop-color="#54ff00"/><stop offset="0.87" stop-color="#93ff00"/><stop offset="0.95" stop-color="#d5ff00"/><stop offset="1" stop-color="#fcff00"/></linearGradient>
<linearGradient id="c128" gradientUnits="userSpaceOnUse" x1="1008" y1="0" x2="1359" y2="0"><stop offset="0" stop-color="#00ff55"/><stop offset="0.32" stop-color="#00ff3a"/><stop offset="0.58" stop-color="#00ff1d"/><stop offset="0.63" stop-color="#00ff15"/><stop offset="0.74" stop-color="#3dff06"/><stop offset="0.78" stop-color="#5bff00"/><stop offset="0.87" stop-color="#9cff00"/><stop offset="0.95" stop-color="#dfff00"/><stop offset="0.99" stop-color="#fffe00"/><stop offset="1" stop-color="#fff700"/></linearGradient>
<linearGradient id="c129" gradientUnits="userSpaceOnUse" x1="1008" y1="0" x2="1361" y2="0"><stop offset="0" stop-color="#00ff56"/><stop offset="0.32" stop-color="#00ff3b"/><stop offset="0.57" stop-color="#00ff1e"/><stop offset="0.63" stop-color="#00ff17"/><stop offset="0.72" stop-color="#3aff09"/><stop offset="0.78" stop-color="#63ff00"/><stop offset="0.87" stop-color="#a4ff00"/><stop offset="0.95" stop-color="#e5ff00"/><stop offset="0.98" stop-color="#feff00"/><stop offset="1" stop-color="#ffee00"/></linearGradient>
<linearGradient id="c130" gradientUnits="userSpaceOnUse" x1="1008" y1="0" x2="1364" y2="0"><stop offset="0" stop-color="#00ff57"/><stop offset="0.31" stop-color="#00ff3d"/><stop offset="0.56" stop-color="#00ff20"/><stop offset="0.62" stop-color="#01ff19"/><stop offset="0.72" stop-color="#3fff0a"/><stop offset="0.79" stop-color="#6bff00"/><stop offset="0.87" stop-color="#abff00"/><stop offset="0.95" stop-color="#eeff00"/><stop offset="0.97" stop-color="#fffe00"/><stop offset="1" stop-color="#ffe400"/></linearGradient>
<linearGradient id="c131" gradientUnits="userSpaceOnUse" x1="1009" y1="0" x2="1366" y2="0"><stop offset="0" stop-color="#00ff59"/><stop offset="0.31" stop-color="#00ff3e"/><stop offset="0.56" stop-color="#00ff22"/><stop offset="0.61" stop-color="#00ff1b"/><stop offset="0.71" stop-color="#3dff0c"/><stop offset="0.79" stop-color="#73ff00"/><stop offset="0.87" stop-color="#b5ff00"/><stop offset="0.95" stop-color="#f7ff00"/><stop offset="0.96" stop-color="#ffff00"/><stop offset="1" stop-color="#ffdc00"/></linearGradient>
<linearGradient id="c132" gradientUnits="userSpaceOnUse" x1="1009" y1="0" x2="1369" y2="0"><stop offset="0" stop-color="#00ff5a"/><stop offset="0.31" stop-color="#00ff40"/><stop offset="0.56" stop-color="#00ff24"/><stop offset="0.61" stop-color="#00ff1d"/><stop offset="0.7" stop-color="#3bff0f"/><stop offset="0.79" stop-color="#7aff00"/><stop offset="0.87" stop-color="#baff00"/><stop offset="0.95" stop-color="#fffe00"/><stop offset="0.99" stop-color="#ffdd00"/><stop offset="1" stop-color="#ffd300"/></linearGradient>
<linearGradient id="c133" gradientUnits="userSpaceOnUse" x1="1009" y1="0" x2="1371" y2="0"><stop offset="0" stop-color="#00ff5c"/><stop offset="0.31" stop-color="#00ff41"/><stop offset="0.55" stop-color="#00ff25"/><stop offset="0.6" stop-color="#01ff1e"/><stop offset="0.7" stop-color="#3fff10"/><stop offset="0.79" stop-color="#7eff01"/><stop offset="0.87" stop-color="#c0ff00"/><stop offset="0.94" stop-color="#ffff00"/><stop offset="0.98" stop-color="#ffda00"/><stop offset="1" stop-color="#ffcc00"/></linearGradient>
<linearGradient id="c134" gradientUnits="userSpaceOnUse" x1="1009" y1="0" x2="1374" y2="0"><stop offset="0" stop-color="#00ff5d"/><stop offset="0.3" stop-color="#00ff43"/><stop offset="0.55" stop-color="#00ff27"/><stop offset="0.59" stop-color="#01ff20"/><stop offset="0.69" stop-color="#3eff12"/><stop offset="0.78" stop-color="#7fff03"/><stop offset="0.8" stop-color="#92ff00"/><stop offset="0.88" stop-color="#d4ff00"/><stop offset="0.93" stop-color="#fffe00"/><stop offset="0.96" stop-color="#ffdd00"/><stop offset="1" stop-color="#ffc300"/></linearGradient>
<linearGradient id="c135" gradientUnits="userSpaceOnUse" x1="1009" y1="0" x2="1376" y2="0"><stop offset="0" stop-color="#00ff5f"/><stop offset="0.3" stop-color="#00ff45"/><stop offset="0.54" stop-color="#00ff29"/><stop offset="0.59" stop-color="#00ff22"/><stop offset="0.68" stop-color="#3eff14"/><stop offset="0.77" stop-color="#7dff06"/><stop offset="0.8" stop-color="#99ff00"/><stop offset="0.88" stop-color="#ddff00"/><stop offset="0.92" stop-color="#ffff00"/><stop offset="0.96" stop-color="#ffd900"/><stop offset="1" stop-color="#ffbd00"/></linearGradient>
<linearGradient id="c136" gradientUnits="userSpaceOnUse" x1="1010" y1="0" x2="1379" y2="0"><stop offset="0" stop-color="#00ff60"/><stop offset="0.3" stop-color="#00ff46"/><stop offset="0.54" stop-color="#00ff2a"/><stop offset="0.58" stop-color="#00ff24"/><stop offset="0.66" stop-color="#33ff19"/><stop offset="0.75" stop-color="#72ff0a"/><stop offset="0.8" stop-color="#a3ff00"/><stop offset="0.88" stop-color="#e5ff00"/><stop offset="0.91" stop-color="#fffe00"/><stop offset="0.94" stop-color="#ffdc00"/><stop offset="0.99" stop-color="#ffbc00"/><stop offset="1" stop-color="#ffb500"/></linearGradient>
<linearGradient id="c137" gradientUnits="userSpaceOnUse" x1="1010" y1="0" x2="1381" y2="0"><stop offset="0" stop-color="#00ff62"/><stop offset="0.3" stop-color="#00ff48"/><stop offset="0.53" stop-color="#00ff2c"/><stop offset="0.58" stop-color="#01ff26"/><stop offset="0.67" stop-color="#3eff18"/><stop offset="0.75" stop-color="#7dff0a"/><stop offset="0.81" stop-color="#adff00"/><stop offset="0.88" stop-color="#eeff00"/><stop offset="0.89" stop-color="#ffff00"/><stop offset="0.94" stop-color="#ffdb00"/><stop offset="0.98" stop-color="#ffba00"/><stop offset="1" stop-color="#ffaf00"/></linearGradient>
<linearGradient id="c138" gradientUnits="userSpaceOnUse" x1="1010" y1="0" x2="1384" y2="0"><stop offset="0" stop-color="#00ff63"/><stop offset="0.29" stop-color="#00ff4a"/><stop offset="0.53" stop-color="#00ff2e"/><stop offset="0.57" stop-color="#00ff28"/><stop offset="0.66" stop-color="#3eff1a"/><stop offset="0.74" stop-color="#7eff0c"/><stop offset="0.81" stop-color="#b7ff00"/><stop offset="0.88" stop-color="#faff00"/><stop offset="0.89" stop-color="#fffe00"/><stop offset="0.92" stop-color="#ffdc00"/><stop offset="0.97" stop-color="#ffbb00"/><stop offset="1" stop-color="#ffa800"/></linearGradient>
<linearGradient id="c139" gradientUnits="userSpaceOnUse" x1="1010" y1="0" x2="1386" y2="0"><stop offset="0" stop-color="#00ff65"/><stop offset="0.29" stop-color="#00ff4b"/><stop offset="0.52" stop-color="#00ff30"/><stop offset="0.56" stop-color="#00ff2b"/><stop offset="0.64" stop-color="#36ff1e"/><stop offset="0.73" stop-color="#75ff10"/><stop offset="0.8" stop-color="#b6ff02"/><stop offset="0.82" stop-color="#caff00"/><stop offset="0.88" stop-color="#ffff00"/><stop offset="0.91" stop-color="#ffda00"/><stop offset="0.96" stop-color="#ffba00"/><stop offset="1" stop-color="#ffa200"/></linearGradient>
<linearGradient id="c140" gradientUnits="userSpaceOnUse" x1="1010" y1="0" x2="1389" y2="0"><stop offset="0" stop-color="#00ff67"/><stop offset="0.29" stop-color="#00ff4d"/><stop offset="0.52" stop-color="#00ff32"/><stop offset="0.56" stop-color="#01ff2c"/><stop offset="0.65" stop-color="#3eff1f"/><stop offset="0.73" stop-color="#7cff11"/><stop offset="0.8" stop-color="#beff03"/><stop offset="0.82" stop-color="#d2ff00"/><stop offset="0.87" stop-color="#fffe00"/><stop offset="0.9" stop-color="#ffdb00"/><stop offset="0.94" stop-color="#ffbc00"/><stop offset="1" stop-color="#ff9d00"/><stop offset="1" stop-color="#ff9c00"/></linearGradient>
<linearGradient id="c141" gradientUnits="userSpaceOnUse" x1="1011" y1="0" x2="1391" y2="0"><stop offset="0" stop-color="#00ff68"/><stop offset="0.29" stop-color="#00ff4f"/><stop offset="0.52" stop-color="#00ff34"/><stop offset="0.55" stop-color="#00ff2f"/><stop offset="0.64" stop-color="#3dff21"/><stop offset="0.72" stop-color="#7cff13"/><stop offset="0.79" stop-color="#bfff05"/><stop offset="0.82" stop-color="#dbff00"/><stop offset="0.86" stop-color="#ffff00"/><stop offset="0.89" stop-color="#ffda00"/><stop offset="0.94" stop-color="#ffbb00"/><stop offset="0.99" stop-color="#ff9c00"/><stop offset="1" stop-color="#ff9700"/></linearGradient>
<linearGradient id="c142" gradientUnits="userSpaceOnUse" x1="1011" y1="0" x2="1394" y2="0"><stop offset="0" stop-color="#00ff6a"/><stop offset="0.28" stop-color="#00ff51"/><stop offset="0.51" stop-color="#00ff36"/><stop offset="0.55" stop-color="#00ff31"/><stop offset="0.63" stop-color="#39ff24"/><stop offset="0.7" stop-color="#78ff17"/><stop offset="0.78" stop-color="#b8ff09"/><stop offset="0.82" stop-color="#e7ff00"/><stop offset="0.85" stop-color="#fffe00"/><stop offset="0.88" stop-color="#ffdd00"/><stop offset="0.92" stop-color="#ffbd00"/><stop offset="0.97" stop-color="#ff9f00"/><stop offset="1" stop-color="#ff9000"/></linearGradient>
<linearGradient id="c143" gradientUnits="userSpaceOnUse" x1="1011" y1="0" x2="1396" y2="0"><stop offset="0" stop-color="#00ff6c"/><stop offset="0.28" stop-color="#00ff53"/><stop offset="0.51" stop-color="#00ff37"/><stop offset="0.54" stop-color="#01ff33"/><stop offset="0.63" stop-color="#3fff25"/><stop offset="0.71" stop-color="#7fff18"/><stop offset="0.78" stop-color="#c1ff0a"/><stop offset="0.82" stop-color="#f1ff00"/><stop offset="0.84" stop-color="#ffff00"/><stop offset="0.88" stop-color="#ffda00"/><stop offset="0.92" stop-color="#ffba00"/><stop offset="0.97" stop-color="#ff9c00"/><stop offset="1" stop-color="#ff8c00"/></linearGradient>
<linearGradient id="c144" gradientUnits="userSpaceOnUse" x1="1011" y1="0" x2="1399" y2="0"><stop offset="0" stop-color="#00ff6d"/><stop offset="0.28" stop-color="#00ff54"/><stop offset="0.5" stop-color="#00ff3a"/><stop offset="0.54" stop-color="#00ff35"/><stop offset="0.62" stop-color="#3dff28"/><stop offset="0.7" stop-color="#7dff1b"/><stop offset="0.77" stop-color="#bfff0d"/><stop offset="0.82" stop-color="#fdff00"/><stop offset="0.83" stop-color="#fffb00"/><stop offset="0.86" stop-color="#ffda00"/><stop offset="0.9" stop-color="#ffba00"/><stop offset="0.95" stop-color="#ff9c00"/><stop offset="1" stop-color="#ff8600"/></linearGradient>
<linearGradient id="c145" gradientUnits="userSpaceOnUse" x1="1012" y1="0" x2="1401" y2="0"><stop offset="0" stop-color="#00ff6f"/><stop offset="0.28" stop-color="#00ff56"/><stop offset="0.5" stop-color="#00ff3b"/><stop offset="0.53" stop-color="#00ff37"/><stop offset="0.61" stop-color="#3bff2b"/><stop offset="0.68" stop-color="#79ff1e"/><stop offset="0.75" stop-color="#bbff10"/><stop offset="0.82" stop-color="#ffff02"/><stop offset="0.84" stop-color="#ffec00"/><stop offset="0.87" stop-color="#ffcc00"/><stop offset="0.92" stop-color="#ffad00"/><stop offset="0.97" stop-color="#ff8f00"/><stop offset="1" stop-color="#ff8100"/></linearGradient>
<linearGradient id="c146" gradientUnits="userSpaceOnUse" x1="1012" y1="0" x2="1404" y2="0"><stop offset="0" stop-color="#00ff71"/><stop offset="0.28" stop-color="#00ff58"/><stop offset="0.5" stop-color="#00ff3d"/><stop offset="0.53" stop-color="#01ff39"/><stop offset="0.61" stop-color="#3fff2d"/><stop offset="0.68" stop-color="#7eff1f"/><stop offset="0.75" stop-color="#beff12"/><stop offset="0.81" stop-color="#fdff05"/><stop offset="0.81" stop-color="#fffb04"/><stop offset="0.83" stop-color="#ffe600"/><stop offset="0.87" stop-color="#ffc500"/><stop offset="0.92" stop-color="#ffa600"/><stop offset="0.97" stop-color="#ff8800"/><stop offset="1" stop-color="#ff7c00"/></linearGradient>
<linearGradient id="c147" gradientUnits="userSpaceOnUse" x1="1012" y1="0" x2="1406" y2="0"><stop offset="0" stop-color="#00ff72"/><stop offset="0.27" stop-color="#00ff5a"/><stop offset="0.49" stop-color="#00ff40"/><stop offset="0.52" stop-color="#01ff3c"/><stop offset="0.6" stop-color="#3fff2f"/><stop offset="0.68" stop-color="#7eff22"/><stop offset="0.74" stop-color="#bfff15"/><stop offset="0.8" stop-color="#ffff08"/><stop offset="0.84" stop-color="#ffdb00"/><stop offset="0.88" stop-color="#ffba00"/><stop offset="0.92" stop-color="#ff9c00"/><stop offset="0.98" stop-color="#ff7f00"/><stop offset="1" stop-color="#ff7800"/></linearGradient>
<linearGradient id="c148" gradientUnits="userSpaceOnUse" x1="1012" y1="0" x2="1409" y2="0"><stop offset="0" stop-color="#00ff74"/><stop offset="0.27" stop-color="#00ff5c"/><stop offset="0.49" stop-color="#00ff42"/><stop offset="0.51" stop-color="#00ff3e"/><stop offset="0.59" stop-color="#3cff32"/><stop offset="0.66" stop-color="#7cff25"/><stop offset="0.73" stop-color="#bdff18"/><stop offset="0.79" stop-color="#fdff0b"/><stop offset="0.79" stop-color="#fffb0a"/><stop offset="0.83" stop-color="#ffd901"/><stop offset="0.85" stop-color="#ffc600"/><stop offset="0.89" stop-color="#ffa800"/><stop offset="0.94" stop-color="#ff8b00"/><stop offset="1" stop-color="#ff7300"/></linearGradient>
<linearGradient id="c149" gradientUnits="userSpaceOnUse" x1="1013" y1="0" x2="1411" y2="0"><stop offset="0" stop-color="#00ff76"/><stop offset="0.27" stop-color="#00ff5e"/><stop offset="0.48" stop-color="#00ff44"/><stop offset="0.51" stop-color="#00ff41"/><stop offset="0.57" stop-color="#32ff37"/><stop offset="0.65" stop-color="#71ff2a"/><stop offset="0.71" stop-color="#b1ff1d"/><stop offset="0.77" stop-color="#f3ff10"/><stop offset="0.78" stop-color="#ffff0e"/><stop offset="0.82" stop-color="#ffda04"/><stop offset="0.84" stop-color="#ffc500"/><stop offset="0.88" stop-color="#ffa600"/><stop offset="0.94" stop-color="#ff8a00"/><stop offset="1" stop-color="#ff6f00"/></linearGradient>
<linearGradient id="c150" gradientUnits="userSpaceOnUse" x1="1013" y1="0" x2="1414" y2="0"><stop offset="0" stop-color="#00ff78"/><stop offset="0.27" stop-color="#00ff60"/><stop offset="0.48" stop-color="#00ff46"/><stop offset="0.5" stop-color="#01ff43"/><stop offset="0.58" stop-color="#3eff37"/><stop offset="0.65" stop-color="#7dff2a"/><stop offset="0.72" stop-color="#bfff1d"/><stop offset="0.77" stop-color="#fdff11"/><stop offset="0.78" stop-color="#fffb10"/><stop offset="0.81" stop-color="#ffd907"/><stop offset="0.84" stop-color="#ffbc00"/><stop offset="0.89" stop-color="#ff9e00"/><stop offset="0.94" stop-color="#ff8100"/><stop offset="1" stop-color="#ff6a00"/></linearGradient>
<linearGradient id="c151" gradientUnits="userSpaceOnUse" x1="1013" y1="0" x2="1416" y2="0"><stop offset="0" stop-color="#00ff7a"/><stop offset="0.27" stop-color="#00ff62"/><stop offset="0.48" stop-color="#00ff48"/><stop offset="0.5" stop-color="#00ff45"/><stop offset="0.58" stop-color="#3eff39"/><stop offset="0.65" stop-color="#7dff2d"/><stop offset="0.71" stop-color="#bdff21"/><stop offset="0.76" stop-color="#ffff14"/><stop offset="0.8" stop-color="#ffdc0a"/><stop offset="0.83" stop-color="#ffbc02"/><stop offset="0.85" stop-color="#ffae00"/><stop offset="0.9" stop-color="#ff9000"/><stop offset="0.96" stop-color="#ff7500"/><stop offset="1" stop-color="#ff6700"/></linearGradient>
<linearGradient id="c152" gradientUnits="userSpaceOnUse" x1="1014" y1="0" x2="1419" y2="0"><stop offset="0" stop-color="#00ff7b"/><stop offset="0.27" stop-color="#00ff64"/><stop offset="0.48" stop-color="#00ff4a"/><stop offset="0.49" stop-color="#00ff48"/><stop offset="0.56" stop-color="#35ff3e"/><stop offset="0.63" stop-color="#74ff32"/><stop offset="0.69" stop-color="#b6ff25"/><stop offset="0.75" stop-color="#f7ff18"/><stop offset="0.76" stop-color="#fffe17"/><stop offset="0.79" stop-color="#ffdd0d"/><stop offset="0.82" stop-color="#ffbd04"/><stop offset="0.85" stop-color="#ffab00"/><stop offset="0.9" stop-color="#ff8d00"/><stop offset="0.96" stop-color="#ff7200"/><stop offset="1" stop-color="#ff6200"/></linearGradient>
<linearGradient id="c153" gradientUnits="userSpaceOnUse" x1="1014" y1="0" x2="1421" y2="0"><stop offset="0" stop-color="#00ff7d"/><stop offset="0.27" stop-color="#00ff66"/><stop offset="0.47" stop-color="#00ff4d"/><stop offset="0.49" stop-color="#01ff4a"/><stop offset="0.56" stop-color="#3eff3f"/><stop offset="0.63" stop-color="#7eff32"/><stop offset="0.69" stop-color="#bfff26"/><stop offset="0.75" stop-color="#ffff1a"/><stop offset="0.78" stop-color="#ffdc10"/><stop offset="0.82" stop-color="#ffbb06"/><stop offset="0.85" stop-color="#ffa300"/><stop offset="0.9" stop-color="#ff8600"/><stop offset="0.97" stop-color="#ff6b00"/><stop offset="1" stop-color="#ff5f00"/></linearGradient>
<linearGradient id="c154" gradientUnits="userSpaceOnUse" x1="1014" y1="0" x2="1424" y2="0"><stop offset="0" stop-color="#00ff7f"/><stop offset="0.26" stop-color="#00ff68"/><stop offset="0.47" stop-color="#00ff4f"/><stop offset="0.48" stop-color="#00ff4d"/><stop offset="0.56" stop-color="#3eff41"/><stop offset="0.62" stop-color="#7cff36"/><stop offset="0.68" stop-color="#bdff2a"/><stop offset="0.74" stop-color="#fdff1e"/><stop offset="0.74" stop-color="#fffb1c"/><stop offset="0.77" stop-color="#ffda12"/><stop offset="0.81" stop-color="#ffba08"/><stop offset="0.85" stop-color="#ff9b00"/><stop offset="0.9" stop-color="#ff7f00"/><stop offset="0.97" stop-color="#ff6500"/><stop offset="1" stop-color="#ff5b00"/></linearGradient>
<linearGradient id="c155" gradientUnits="userSpaceOnUse" x1="1014" y1="0" x2="1426" y2="0"><stop offset="0" stop-color="#00ff81"/><stop offset="0.26" stop-color="#00ff6a"/><stop offset="0.47" stop-color="#00ff51"/><stop offset="0.48" stop-color="#00ff4f"/><stop offset="0.54" stop-color="#37ff45"/><stop offset="0.61" stop-color="#75ff3a"/><stop offset="0.67" stop-color="#b6ff2e"/><stop offset="0.73" stop-color="#f9ff22"/><stop offset="0.73" stop-color="#ffff21"/><stop offset="0.76" stop-color="#ffdb15"/><stop offset="0.8" stop-color="#ffba0b"/><stop offset="0.84" stop-color="#ff9c02"/><stop offset="0.87" stop-color="#ff8e00"/><stop offset="0.92" stop-color="#ff7200"/><stop offset="1" stop-color="#ff5800"/><stop offset="1" stop-color="#ff5800"/></linearGradient>
<linearGradient id="c156" gradientUnits="userSpaceOnUse" x1="1015" y1="0" x2="1429" y2="0"><stop offset="0" stop-color="#00ff83"/><stop offset="0.26" stop-color="#00ff6c"/><stop offset="0.46" stop-color="#00ff53"/><stop offset="0.47" stop-color="#01ff52"/><stop offset="0.55" stop-color="#3fff47"/><stop offset="0.61" stop-color="#7fff3b"/><stop offset="0.67" stop-color="#bfff30"/><stop offset="0.72" stop-color="#fdff24"/><stop offset="0.72" stop-color="#fffb22"/><stop offset="0.75" stop-color="#ffda18"/><stop offset="0.79" stop-color="#ffb90d"/><stop offset="0.83" stop-color="#ff9a04"/><stop offset="0.86" stop-color="#ff8b00"/><stop offset="0.92" stop-color="#ff7000"/><stop offset="0.99" stop-color="#ff5700"/><stop offset="1" stop-color="#ff5400"/></linearGradient>
<linearGradient id="c157" gradientUnits="userSpaceOnUse" x1="1015" y1="0" x2="1431" y2="0"><stop offset="0" stop-color="#00ff85"/><stop offset="0.26" stop-color="#00ff6e"/><stop offset="0.46" stop-color="#00ff56"/><stop offset="0.47" stop-color="#00ff55"/><stop offset="0.54" stop-color="#3dff4a"/><stop offset="0.6" stop-color="#7dff3e"/><stop offset="0.66" stop-color="#bdff33"/><stop offset="0.71" stop-color="#ffff27"/><stop offset="0.74" stop-color="#ffdd1c"/><stop offset="0.78" stop-color="#ffbd12"/><stop offset="0.82" stop-color="#ff9f07"/><stop offset="0.86" stop-color="#ff8600"/><stop offset="0.92" stop-color="#ff6b00"/><stop offset="1" stop-color="#ff5200"/><stop offset="1" stop-color="#ff5100"/></linearGradient>
<linearGradient id="c158" gradientUnits="userSpaceOnUse" x1="1015" y1="0" x2="1434" y2="0"><stop offset="0" stop-color="#00ff87"/><stop offset="0.26" stop-color="#00ff71"/><stop offset="0.46" stop-color="#00ff58"/><stop offset="0.46" stop-color="#00ff57"/><stop offset="0.53" stop-color="#3bff4d"/><stop offset="0.59" stop-color="#7bff42"/><stop offset="0.65" stop-color="#bbff37"/><stop offset="0.7" stop-color="#fdff2b"/><stop offset="0.71" stop-color="#fffa29"/><stop offset="0.74" stop-color="#ffd91e"/><stop offset="0.77" stop-color="#ffba13"/><stop offset="0.81" stop-color="#ff9c09"/><stop offset="0.86" stop-color="#ff8000"/><stop offset="0.92" stop-color="#ff6500"/><stop offset="1" stop-color="#ff4d00"/></linearGradient>
<linearGradient id="c159" gradientUnits="userSpaceOnUse" x1="1016" y1="0" x2="1436" y2="0"><stop offset="0" stop-color="#00ff89"/><stop offset="0.26" stop-color="#00ff73"/><stop offset="0.46" stop-color="#00ff5a"/><stop offset="0.51" stop-color="#2bff53"/><stop offset="0.57" stop-color="#6aff48"/><stop offset="0.63" stop-color="#abff3d"/><stop offset="0.68" stop-color="#ecff32"/><stop offset="0.7" stop-color="#ffff2e"/><stop offset="0.73" stop-color="#ffdd22"/><stop offset="0.76" stop-color="#ffbd17"/><stop offset="0.8" stop-color="#ff9e0c"/><stop offset="0.85" stop-color="#ff8102"/><stop offset="0.87" stop-color="#ff7600"/><stop offset="0.94" stop-color="#ff5c00"/><stop offset="1" stop-color="#ff4a00"/></linearGradient>
<linearGradient id="c160" gradientUnits="userSpaceOnUse" x1="1016" y1="0" x2="1439" y2="0"><stop offset="0" stop-color="#00ff8b"/><stop offset="0.26" stop-color="#00ff75"/><stop offset="0.45" stop-color="#00ff5d"/><stop offset="0.46" stop-color="#05ff5c"/><stop offset="0.52" stop-color="#41ff52"/><stop offset="0.59" stop-color="#81ff47"/><stop offset="0.64" stop-color="#c3ff3c"/><stop offset="0.69" stop-color="#fdff32"/><stop offset="0.69" stop-color="#fffa30"/><stop offset="0.72" stop-color="#ffd824"/><stop offset="0.75" stop-color="#ffb918"/><stop offset="0.79" stop-color="#ff9b0d"/><stop offset="0.84" stop-color="#ff7f03"/><stop offset="0.87" stop-color="#ff7200"/><stop offset="0.94" stop-color="#ff5900"/><stop offset="1" stop-color="#ff4700"/></linearGradient>
<linearGradient id="c161" gradientUnits="userSpaceOnUse" x1="1016" y1="0" x2="1441" y2="0"><stop offset="0" stop-color="#00ff8d"/><stop offset="0.25" stop-color="#00ff78"/><stop offset="0.45" stop-color="#00ff60"/><stop offset="0.52" stop-color="#3cff56"/><stop offset="0.58" stop-color="#7cff4b"/><stop offset="0.63" stop-color="#beff40"/><stop offset="0.68" stop-color="#ffff35"/><stop offset="0.71" stop-color="#ffdc28"/><stop offset="0.74" stop-color="#ffbc1c"/><stop offset="0.78" stop-color="#ff9d11"/><stop offset="0.83" stop-color="#ff8106"/><stop offset="0.87" stop-color="#ff6e00"/><stop offset="0.94" stop-color="#ff5500"/><stop offset="1" stop-color="#ff4400"/></linearGradient>
<linearGradient id="c162" gradientUnits="userSpaceOnUse" x1="1017" y1="0" x2="1444" y2="0"><stop offset="0" stop-color="#00ff8f"/><stop offset="0.25" stop-color="#00ff7a"/><stop offset="0.44" stop-color="#00ff63"/><stop offset="0.49" stop-color="#2eff5b"/><stop offset="0.56" stop-color="#6dff51"/><stop offset="0.61" stop-color="#adff46"/><stop offset="0.66" stop-color="#f0ff3b"/><stop offset="0.67" stop-color="#fdff39"/><stop offset="0.68" stop-color="#fffa37"/><stop offset="0.7" stop-color="#ffd82a"/><stop offset="0.74" stop-color="#ffb81e"/><stop offset="0.78" stop-color="#ff9a12"/><stop offset="0.83" stop-color="#ff7d07"/><stop offset="0.87" stop-color="#ff6900"/><stop offset="0.94" stop-color="#ff5000"/><stop offset="1" stop-color="#ff4100"/></linearGradient>
<linearGradient id="c163" gradientUnits="userSpaceOnUse" x1="1017" y1="0" x2="1446" y2="0"><stop offset="0" stop-color="#00ff92"/><stop offset="0.25" stop-color="#00ff7c"/><stop offset="0.44" stop-color="#01ff66"/><stop offset="0.51" stop-color="#3eff5c"/><stop offset="0.56" stop-color="#7dff52"/><stop offset="0.62" stop-color="#bdff47"/><stop offset="0.67" stop-color="#ffff3d"/><stop offset="0.69" stop-color="#ffde30"/><stop offset="0.72" stop-color="#ffbf23"/><stop offset="0.76" stop-color="#ffa117"/><stop offset="0.81" stop-color="#ff840c"/><stop offset="0.86" stop-color="#ff6901"/><stop offset="0.93" stop-color="#ff5000"/><stop offset="1" stop-color="#ff3e00"/></linearGradient>
<linearGradient id="c164" gradientUnits="userSpaceOnUse" x1="1017" y1="0" x2="1449" y2="0"><stop offset="0" stop-color="#00ff94"/><stop offset="0.25" stop-color="#00ff7f"/><stop offset="0.44" stop-color="#00ff69"/><stop offset="0.5" stop-color="#3eff5f"/><stop offset="0.56" stop-color="#7dff55"/><stop offset="0.61" stop-color="#beff4b"/><stop offset="0.66" stop-color="#fdff41"/><stop offset="0.66" stop-color="#fffa3f"/><stop offset="0.69" stop-color="#ffda31"/><stop offset="0.72" stop-color="#ffb924"/><stop offset="0.76" stop-color="#ff9a17"/><stop offset="0.81" stop-color="#ff7e0c"/><stop offset="0.86" stop-color="#ff6401"/><stop offset="0.94" stop-color="#ff4b00"/><stop offset="1" stop-color="#ff3b00"/></linearGradient>
<linearGradient id="c165" gradientUnits="userSpaceOnUse" x1="1018" y1="0" x2="1451" y2="0"><stop offset="0" stop-color="#00ff96"/><stop offset="0.25" stop-color="#00ff81"/><stop offset="0.43" stop-color="#00ff6c"/><stop offset="0.48" stop-color="#32ff64"/><stop offset="0.54" stop-color="#70ff5a"/><stop offset="0.59" stop-color="#b0ff51"/><stop offset="0.64" stop-color="#f2ff47"/><stop offset="0.65" stop-color="#ffff44"/><stop offset="0.68" stop-color="#ffde36"/><stop offset="0.71" stop-color="#ffbe29"/><stop offset="0.74" stop-color="#ffa01c"/><stop offset="0.79" stop-color="#ff8310"/><stop offset="0.84" stop-color="#ff6905"/><stop offset="0.88" stop-color="#ff5a00"/><stop offset="0.96" stop-color="#ff4300"/><stop offset="1" stop-color="#ff3900"/></linearGradient>
<linearGradient id="c166" gradientUnits="userSpaceOnUse" x1="1018" y1="0" x2="1454" y2="0"><stop offset="0" stop-color="#00ff98"/><stop offset="0.25" stop-color="#00ff84"/><stop offset="0.43" stop-color="#01ff6f"/><stop offset="0.49" stop-color="#3eff65"/><stop offset="0.55" stop-color="#7eff5c"/><stop offset="0.6" stop-color="#c0ff52"/><stop offset="0.64" stop-color="#fdff49"/><stop offset="0.65" stop-color="#fffa46"/><stop offset="0.67" stop-color="#ffd938"/><stop offset="0.7" stop-color="#ffba2b"/><stop offset="0.74" stop-color="#ff9c1e"/><stop offset="0.78" stop-color="#ff8011"/><stop offset="0.84" stop-color="#ff6506"/><stop offset="0.88" stop-color="#ff5600"/><stop offset="0.96" stop-color="#ff3e00"/><stop offset="1" stop-color="#ff3600"/></linearGradient>
<linearGradient id="c167" gradientUnits="userSpaceOnUse" x1="1018" y1="0" x2="1456" y2="0"><stop offset="0" stop-color="#00ff9b"/><stop offset="0.25" stop-color="#00ff86"/><stop offset="0.42" stop-color="#00ff72"/><stop offset="0.48" stop-color="#3eff69"/><stop offset="0.54" stop-color="#7eff5f"/><stop offset="0.59" stop-color="#beff56"/><stop offset="0.64" stop-color="#ffff4c"/><stop offset="0.66" stop-color="#ffdd3d"/><stop offset="0.69" stop-color="#ffbd2f"/><stop offset="0.73" stop-color="#ff9e21"/><stop offset="0.77" stop-color="#ff8215"/><stop offset="0.83" stop-color="#ff6709"/><stop offset="0.88" stop-color="#ff5200"/><stop offset="0.97" stop-color="#ff3b00"/><stop offset="1" stop-color="#ff3400"/></linearGradient>
<linearGradient id="c168" gradientUnits="userSpaceOnUse" x1="1019" y1="0" x2="1459" y2="0"><stop offset="0" stop-color="#00ff9d"/><stop offset="0.25" stop-color="#00ff89"/><stop offset="0.42" stop-color="#00ff75"/><stop offset="0.47" stop-color="#36ff6d"/><stop offset="0.53" stop-color="#76ff64"/><stop offset="0.58" stop-color="#b6ff5b"/><stop offset="0.62" stop-color="#f6ff52"/><stop offset="0.63" stop-color="#fdff51"/><stop offset="0.63" stop-color="#fffa4e"/><stop offset="0.66" stop-color="#ffd93f"/><stop offset="0.69" stop-color="#ffb930"/><stop offset="0.72" stop-color="#ff9b23"/><stop offset="0.77" stop-color="#ff7e15"/><stop offset="0.82" stop-color="#ff6409"/><stop offset="0.88" stop-color="#ff4e00"/><stop offset="0.97" stop-color="#ff3700"/><stop offset="1" stop-color="#ff3100"/></linearGradient>
<linearGradient id="c169" gradientUnits="userSpaceOnUse" x1="1019" y1="0" x2="1461" y2="0"><stop offset="0" stop-color="#00ff9f"/><stop offset="0.25" stop-color="#00ff8b"/><stop offset="0.41" stop-color="#00ff78"/><stop offset="0.43" stop-color="#13ff76"/><stop offset="0.49" stop-color="#51ff6d"/><stop offset="0.54" stop-color="#90ff64"/><stop offset="0.59" stop-color="#d0ff5b"/><stop offset="0.62" stop-color="#ffff55"/><stop offset="0.65" stop-color="#ffdd44"/><stop offset="0.68" stop-color="#ffbc35"/><stop offset="0.71" stop-color="#ff9d26"/><stop offset="0.76" stop-color="#ff8119"/><stop offset="0.81" stop-color="#ff660c"/><stop offset="0.88" stop-color="#ff4d00"/><stop offset="0.96" stop-color="#ff3600"/><stop offset="1" stop-color="#ff2f00"/></linearGradient>
<linearGradient id="c170" gradientUnits="userSpaceOnUse" x1="1019" y1="0" x2="1464" y2="0"><stop offset="0" stop-color="#00ffa2"/><stop offset="0.25" stop-color="#00ff8e"/><stop offset="0.41" stop-color="#00ff7c"/><stop offset="0.47" stop-color="#3dff73"/><stop offset="0.52" stop-color="#7cff6b"/><stop offset="0.57" stop-color="#beff62"/><stop offset="0.61" stop-color="#fdff59"/><stop offset="0.62" stop-color="#fffa56"/><stop offset="0.64" stop-color="#ffd846"/><stop offset="0.67" stop-color="#ffb837"/><stop offset="0.71" stop-color="#ff9a28"/><stop offset="0.75" stop-color="#ff7e1a"/><stop offset="0.8" stop-color="#ff640d"/><stop offset="0.87" stop-color="#ff4b02"/><stop offset="0.9" stop-color="#ff4200"/><stop offset="1" stop-color="#ff2c00"/></linearGradient>
<linearGradient id="c171" gradientUnits="userSpaceOnUse" x1="1020" y1="0" x2="1466" y2="0"><stop offset="0" stop-color="#00ffa4"/><stop offset="0.25" stop-color="#00ff91"/><stop offset="0.4" stop-color="#00ff7f"/><stop offset="0.46" stop-color="#38ff78"/><stop offset="0.51" stop-color="#77ff6f"/><stop offset="0.56" stop-color="#b9ff66"/><stop offset="0.61" stop-color="#fcff5e"/><stop offset="0.61" stop-color="#ffff5d"/><stop offset="0.63" stop-color="#ffdc4c"/><stop offset="0.66" stop-color="#ffbb3b"/><stop offset="0.7" stop-color="#ff9e2d"/><stop offset="0.74" stop-color="#ff811e"/><stop offset="0.79" stop-color="#ff6611"/><stop offset="0.85" stop-color="#ff4e05"/><stop offset="0.89" stop-color="#ff4200"/><stop offset="0.99" stop-color="#ff2c00"/><stop offset="1" stop-color="#ff2a00"/></linearGradient>
<linearGradient id="c172" gradientUnits="userSpaceOnUse" x1="1020" y1="0" x2="1469" y2="0"><stop offset="0" stop-color="#00ffa7"/><stop offset="0.25" stop-color="#00ff93"/><stop offset="0.4" stop-color="#00ff83"/><stop offset="0.43" stop-color="#24ff7e"/><stop offset="0.49" stop-color="#61ff76"/><stop offset="0.54" stop-color="#a1ff6e"/><stop offset="0.58" stop-color="#e1ff65"/><stop offset="0.6" stop-color="#fdff62"/><stop offset="0.6" stop-color="#fffa5f"/><stop offset="0.63" stop-color="#ffd74d"/><stop offset="0.66" stop-color="#ffb73d"/><stop offset="0.69" stop-color="#ff992d"/><stop offset="0.73" stop-color="#ff7d1f"/><stop offset="0.79" stop-color="#ff6211"/><stop offset="0.86" stop-color="#ff4a05"/><stop offset="0.89" stop-color="#ff3f00"/><stop offset="0.99" stop-color="#ff2900"/><stop offset="1" stop-color="#ff2700"/></linearGradient>
<linearGradient id="c173" gradientUnits="userSpaceOnUse" x1="1020" y1="0" x2="1471" y2="0"><stop offset="0" stop-color="#00ffa9"/><stop offset="0.25" stop-color="#00ff96"/><stop offset="0.4" stop-color="#01ff86"/><stop offset="0.45" stop-color="#3fff7e"/><stop offset="0.51" stop-color="#7eff76"/><stop offset="0.55" stop-color="#beff6e"/><stop offset="0.59" stop-color="#ffff66"/><stop offset="0.62" stop-color="#ffde55"/><stop offset="0.64" stop-color="#ffbf44"/><stop offset="0.68" stop-color="#ffa034"/><stop offset="0.72" stop-color="#ff8325"/><stop offset="0.76" stop-color="#ff6917"/><stop offset="0.83" stop-color="#ff500a"/><stop offset="0.9" stop-color="#ff3b00"/><stop offset="1" stop-color="#ff2600"/><stop offset="1" stop-color="#ff2500"/></linearGradient>
<linearGradient id="c174" gradientUnits="userSpaceOnUse" x1="1021" y1="0" x2="1474" y2="0"><stop offset="0" stop-color="#00ffac"/><stop offset="0.25" stop-color="#00ff99"/><stop offset="0.39" stop-color="#00ff8a"/><stop offset="0.45" stop-color="#3cff82"/><stop offset="0.5" stop-color="#7bff7a"/><stop offset="0.54" stop-color="#bcff73"/><stop offset="0.58" stop-color="#fdff6b"/><stop offset="0.59" stop-color="#fff967"/><stop offset="0.61" stop-color="#ffd755"/><stop offset="0.64" stop-color="#ffb643"/><stop offset="0.68" stop-color="#ff9933"/><stop offset="0.72" stop-color="#ff7d24"/><stop offset="0.77" stop-color="#ff6316"/><stop offset="0.83" stop-color="#ff4a09"/><stop offset="0.9" stop-color="#ff3800"/><stop offset="1" stop-color="#ff2300"/></linearGradient>
<linearGradient id="c175" gradientUnits="userSpaceOnUse" x1="1021" y1="0" x2="1476" y2="0"><stop offset="0" stop-color="#00ffaf"/><stop offset="0.25" stop-color="#00ff9c"/><stop offset="0.39" stop-color="#00ff8d"/><stop offset="0.43" stop-color="#2aff88"/><stop offset="0.48" stop-color="#67ff81"/><stop offset="0.52" stop-color="#a6ff79"/><stop offset="0.57" stop-color="#e9ff72"/><stop offset="0.58" stop-color="#ffff6f"/><stop offset="0.6" stop-color="#ffde5d"/><stop offset="0.63" stop-color="#ffbe4b"/><stop offset="0.66" stop-color="#ff9f3a"/><stop offset="0.7" stop-color="#ff822a"/><stop offset="0.75" stop-color="#ff671b"/><stop offset="0.81" stop-color="#ff4e0d"/><stop offset="0.89" stop-color="#ff3700"/><stop offset="0.99" stop-color="#ff2200"/><stop offset="1" stop-color="#ff2100"/></linearGradient>
<linearGradient id="c176" gradientUnits="userSpaceOnUse" x1="1022" y1="0" x2="1479" y2="0"><stop offset="0" stop-color="#00ffb1"/><stop offset="0.25" stop-color="#00ff9f"/><stop offset="0.38" stop-color="#01ff91"/><stop offset="0.44" stop-color="#3fff8a"/><stop offset="0.49" stop-color="#7fff82"/><stop offset="0.53" stop-color="#c1ff7b"/><stop offset="0.57" stop-color="#fdff74"/><stop offset="0.58" stop-color="#fff970"/><stop offset="0.6" stop-color="#ffd95e"/><stop offset="0.62" stop-color="#ffba4c"/><stop offset="0.66" stop-color="#ff9b3b"/><stop offset="0.7" stop-color="#ff7f2b"/><stop offset="0.74" stop-color="#ff651c"/><stop offset="0.81" stop-color="#ff4c0e"/><stop offset="0.88" stop-color="#ff3601"/><stop offset="0.93" stop-color="#ff2c00"/><stop offset="1" stop-color="#ff1f00"/></linearGradient>
<linearGradient id="c177" gradientUnits="userSpaceOnUse" x1="1022" y1="0" x2="1481" y2="0"><stop offset="0" stop-color="#00ffb4"/><stop offset="0.25" stop-color="#00ffa2"/><stop offset="0.38" stop-color="#00ff95"/><stop offset="0.43" stop-color="#3eff8e"/><stop offset="0.48" stop-color="#7cff87"/><stop offset="0.53" stop-color="#bcff80"/><stop offset="0.57" stop-color="#ffff78"/><stop offset="0.59" stop-color="#ffdd65"/><stop offset="0.61" stop-color="#ffbd52"/><stop offset="0.64" stop-color="#ff9f41"/><stop offset="0.68" stop-color="#ff8330"/><stop offset="0.73" stop-color="#ff6921"/><stop offset="0.79" stop-color="#ff5012"/><stop offset="0.86" stop-color="#ff3905"/><stop offset="0.9" stop-color="#ff2f00"/><stop offset="1" stop-color="#ff1d00"/></linearGradient>
<linearGradient id="c178" gradientUnits="userSpaceOnUse" x1="1022" y1="0" x2="1484" y2="0"><stop offset="0" stop-color="#00ffb7"/><stop offset="0.25" stop-color="#00ffa5"/><stop offset="0.37" stop-color="#00ff98"/><stop offset="0.42" stop-color="#31ff93"/><stop offset="0.47" stop-color="#71ff8c"/><stop offset="0.51" stop-color="#b3ff85"/><stop offset="0.55" stop-color="#f6ff7e"/><stop offset="0.56" stop-color="#fdff7e"/><stop offset="0.56" stop-color="#fff97a"/><stop offset="0.58" stop-color="#ffd866"/><stop offset="0.61" stop-color="#ffb953"/><stop offset="0.64" stop-color="#ff9a41"/><stop offset="0.68" stop-color="#ff7e30"/><stop offset="0.73" stop-color="#ff6420"/><stop offset="0.79" stop-color="#ff4b12"/><stop offset="0.87" stop-color="#ff3404"/><stop offset="0.91" stop-color="#ff2b00"/><stop offset="1" stop-color="#ff1b00"/></linearGradient>
<linearGradient id="c179" gradientUnits="userSpaceOnUse" x1="1023" y1="0" x2="1486" y2="0"><stop offset="0" stop-color="#00ffb9"/><stop offset="0.25" stop-color="#00ffa8"/><stop offset="0.37" stop-color="#01ff9c"/><stop offset="0.42" stop-color="#3eff96"/><stop offset="0.47" stop-color="#7dff90"/><stop offset="0.51" stop-color="#beff89"/><stop offset="0.55" stop-color="#ffff82"/><stop offset="0.57" stop-color="#ffdc6d"/><stop offset="0.6" stop-color="#ffbc59"/><stop offset="0.63" stop-color="#ff9e47"/><stop offset="0.67" stop-color="#ff8236"/><stop offset="0.71" stop-color="#ff6825"/><stop offset="0.77" stop-color="#ff4e16"/><stop offset="0.84" stop-color="#ff3808"/><stop offset="0.91" stop-color="#ff2900"/><stop offset="1" stop-color="#ff1900"/></linearGradient>
<linearGradient id="c180" gradientUnits="userSpaceOnUse" x1="1023" y1="0" x2="1489" y2="0"><stop offset="0" stop-color="#00ffbc"/><stop offset="0.25" stop-color="#00ffab"/><stop offset="0.37" stop-color="#00ffa0"/><stop offset="0.42" stop-color="#3eff9a"/><stop offset="0.47" stop-color="#7eff94"/><stop offset="0.51" stop-color="#bfff8e"/><stop offset="0.55" stop-color="#fdff88"/><stop offset="0.55" stop-color="#fff984"/><stop offset="0.57" stop-color="#ffd86f"/><stop offset="0.6" stop-color="#ffb85b"/><stop offset="0.63" stop-color="#ff9a48"/><stop offset="0.67" stop-color="#ff7e36"/><stop offset="0.71" stop-color="#ff6325"/><stop offset="0.77" stop-color="#ff4a16"/><stop offset="0.85" stop-color="#ff3307"/><stop offset="0.91" stop-color="#ff2600"/><stop offset="1" stop-color="#ff1700"/></linearGradient>
<linearGradient id="c181" gradientUnits="userSpaceOnUse" x1="1024" y1="0" x2="1491" y2="0"><stop offset="0" stop-color="#00ffbf"/><stop offset="0.25" stop-color="#00ffae"/><stop offset="0.36" stop-color="#00ffa4"/><stop offset="0.4" stop-color="#33ffa0"/><stop offset="0.45" stop-color="#72ff9a"/><stop offset="0.49" stop-color="#b2ff94"/><stop offset="0.53" stop-color="#f4ff8e"/><stop offset="0.54" stop-color="#ffff8c"/><stop offset="0.56" stop-color="#ffdc76"/><stop offset="0.58" stop-color="#ffbd62"/><stop offset="0.61" stop-color="#ff9f4e"/><stop offset="0.65" stop-color="#ff823c"/><stop offset="0.7" stop-color="#ff672b"/><stop offset="0.75" stop-color="#ff4e1b"/><stop offset="0.82" stop-color="#ff370c"/><stop offset="0.91" stop-color="#ff2400"/><stop offset="1" stop-color="#ff1500"/></linearGradient>
<linearGradient id="c182" gradientUnits="userSpaceOnUse" x1="1024" y1="0" x2="1494" y2="0"><stop offset="0" stop-color="#00ffc2"/><stop offset="0.26" stop-color="#00ffb2"/><stop offset="0.36" stop-color="#00ffa9"/><stop offset="0.37" stop-color="#09ffa8"/><stop offset="0.41" stop-color="#46ffa2"/><stop offset="0.46" stop-color="#85ff9d"/><stop offset="0.5" stop-color="#c5ff97"/><stop offset="0.53" stop-color="#fdff92"/><stop offset="0.54" stop-color="#fff98e"/><stop offset="0.56" stop-color="#ffd777"/><stop offset="0.58" stop-color="#ffb762"/><stop offset="0.61" stop-color="#ff994e"/><stop offset="0.65" stop-color="#ff7d3c"/><stop offset="0.69" stop-color="#ff642b"/><stop offset="0.75" stop-color="#ff4b1b"/><stop offset="0.83" stop-color="#ff340c"/><stop offset="0.91" stop-color="#ff2100"/><stop offset="1" stop-color="#ff1300"/></linearGradient>
<linearGradient id="c183" gradientUnits="userSpaceOnUse" x1="1024" y1="0" x2="1496" y2="0"><stop offset="0" stop-color="#00ffc5"/><stop offset="0.26" stop-color="#00ffb5"/><stop offset="0.36" stop-color="#00ffad"/><stop offset="0.4" stop-color="#3dffa8"/><stop offset="0.45" stop-color="#7cffa2"/><stop offset="0.49" stop-color="#bbff9d"/><stop offset="0.53" stop-color="#ffff97"/><stop offset="0.55" stop-color="#ffde81"/><stop offset="0.57" stop-color="#ffbf6c"/><stop offset="0.6" stop-color="#ffa158"/><stop offset="0.63" stop-color="#ff8544"/><stop offset="0.67" stop-color="#ff6a32"/><stop offset="0.73" stop-color="#ff5121"/><stop offset="0.79" stop-color="#ff3a12"/><stop offset="0.88" stop-color="#ff2403"/><stop offset="0.92" stop-color="#ff1e00"/><stop offset="1" stop-color="#ff1100"/></linearGradient>
<linearGradient id="c184" gradientUnits="userSpaceOnUse" x1="1025" y1="0" x2="1499" y2="0"><stop offset="0" stop-color="#00ffc8"/><stop offset="0.26" stop-color="#00ffb9"/><stop offset="0.35" stop-color="#00ffb1"/><stop offset="0.39" stop-color="#37ffad"/><stop offset="0.44" stop-color="#76ffa8"/><stop offset="0.48" stop-color="#b6ffa3"/><stop offset="0.52" stop-color="#f9ff9d"/><stop offset="0.52" stop-color="#fdff9d"/><stop offset="0.52" stop-color="#fff998"/><stop offset="0.54" stop-color="#ffd680"/><stop offset="0.57" stop-color="#ffb86b"/><stop offset="0.6" stop-color="#ff9a56"/><stop offset="0.63" stop-color="#ff7d43"/><stop offset="0.68" stop-color="#ff6330"/><stop offset="0.73" stop-color="#ff4b20"/><stop offset="0.8" stop-color="#ff3410"/><stop offset="0.9" stop-color="#ff1f01"/><stop offset="0.97" stop-color="#ff1400"/><stop offset="1" stop-color="#ff1000"/></linearGradient>
<linearGradient id="c185" gradientUnits="userSpaceOnUse" x1="1025" y1="0" x2="1501" y2="0"><stop offset="0" stop-color="#00ffcb"/><stop offset="0.26" stop-color="#00ffbc"/><stop offset="0.35" stop-color="#00ffb6"/><stop offset="0.36" stop-color="#11ffb4"/><stop offset="0.41" stop-color="#4effb0"/><stop offset="0.45" stop-color="#8dffab"/><stop offset="0.49" stop-color="#cdffa6"/><stop offset="0.51" stop-color="#ffffa2"/><stop offset="0.53" stop-color="#ffde8b"/><stop offset="0.56" stop-color="#ffbe74"/><stop offset="0.58" stop-color="#ffa05e"/><stop offset="0.62" stop-color="#ff834a"/><stop offset="0.66" stop-color="#ff6837"/><stop offset="0.71" stop-color="#ff4f25"/><stop offset="0.78" stop-color="#ff3815"/><stop offset="0.87" stop-color="#ff2306"/><stop offset="0.92" stop-color="#ff1a00"/><stop offset="1" stop-color="#ff0e00"/></linearGradient>
<linearGradient id="c186" gradientUnits="userSpaceOnUse" x1="1026" y1="0" x2="1504" y2="0"><stop offset="0" stop-color="#00ffce"/><stop offset="0.27" stop-color="#00ffc0"/><stop offset="0.34" stop-color="#01ffba"/><stop offset="0.39" stop-color="#3cffb6"/><stop offset="0.43" stop-color="#7affb1"/><stop offset="0.47" stop-color="#bbffad"/><stop offset="0.51" stop-color="#fdffa8"/><stop offset="0.51" stop-color="#fff9a3"/><stop offset="0.53" stop-color="#ffd88c"/><stop offset="0.55" stop-color="#ffb975"/><stop offset="0.58" stop-color="#ff9c60"/><stop offset="0.61" stop-color="#ff804b"/><stop offset="0.65" stop-color="#ff6638"/><stop offset="0.71" stop-color="#ff4d26"/><stop offset="0.77" stop-color="#ff3716"/><stop offset="0.86" stop-color="#ff2207"/><stop offset="0.92" stop-color="#ff1700"/><stop offset="1" stop-color="#ff0c00"/></linearGradient>
<linearGradient id="c187" gradientUnits="userSpaceOnUse" x1="1026" y1="0" x2="1506" y2="0"><stop offset="0" stop-color="#00ffd2"/><stop offset="0.27" stop-color="#00ffc4"/><stop offset="0.34" stop-color="#00ffbf"/><stop offset="0.39" stop-color="#3cffbb"/><stop offset="0.43" stop-color="#7affb7"/><stop offset="0.46" stop-color="#b9ffb2"/><stop offset="0.5" stop-color="#ffffad"/><stop offset="0.52" stop-color="#ffdd94"/><stop offset="0.54" stop-color="#ffbc7c"/><stop offset="0.57" stop-color="#ff9e66"/><stop offset="0.6" stop-color="#ff8250"/><stop offset="0.65" stop-color="#ff673c"/><stop offset="0.7" stop-color="#ff4e29"/><stop offset="0.76" stop-color="#ff3718"/><stop offset="0.85" stop-color="#ff2208"/><stop offset="0.92" stop-color="#ff1500"/><stop offset="1" stop-color="#ff0b00"/></linearGradient>
<linearGradient id="c188" gradientUnits="userSpaceOnUse" x1="1027" y1="0" x2="1509" y2="0"><stop offset="0" stop-color="#00ffd5"/><stop offset="0.28" stop-color="#00ffc7"/><stop offset="0.33" stop-color="#00ffc3"/><stop offset="0.36" stop-color="#25ffc1"/><stop offset="0.41" stop-color="#64ffbd"/><stop offset="0.45" stop-color="#a4ffb9"/><stop offset="0.48" stop-color="#e5ffb5"/><stop offset="0.49" stop-color="#fdffb4"/><stop offset="0.5" stop-color="#fff8af"/><stop offset="0.52" stop-color="#ffd896"/><stop offset="0.54" stop-color="#ffb87d"/><stop offset="0.57" stop-color="#ff9b67"/><stop offset="0.6" stop-color="#ff7f51"/><stop offset="0.64" stop-color="#ff643d"/><stop offset="0.69" stop-color="#ff4c2a"/><stop offset="0.76" stop-color="#ff3519"/><stop offset="0.85" stop-color="#ff2009"/><stop offset="0.92" stop-color="#ff1300"/><stop offset="1" stop-color="#ff0900"/></linearGradient>
<linearGradient id="c189" gradientUnits="userSpaceOnUse" x1="1027" y1="0" x2="1511" y2="0"><stop offset="0" stop-color="#00ffd8"/><stop offset="0.28" stop-color="#00ffcb"/><stop offset="0.33" stop-color="#01ffc8"/><stop offset="0.38" stop-color="#3fffc5"/><stop offset="0.42" stop-color="#7effc1"/><stop offset="0.46" stop-color="#bfffbd"/><stop offset="0.49" stop-color="#fffeb9"/><stop offset="0.51" stop-color="#ffdc9f"/><stop offset="0.53" stop-color="#ffbb85"/><stop offset="0.56" stop-color="#ff9d6d"/><stop offset="0.59" stop-color="#ff8056"/><stop offset="0.63" stop-color="#ff6642"/><stop offset="0.68" stop-color="#ff4e2f"/><stop offset="0.74" stop-color="#ff371d"/><stop offset="0.83" stop-color="#ff220c"/><stop offset="0.92" stop-color="#ff1100"/><stop offset="1" stop-color="#ff0700"/></linearGradient>
<linearGradient id="c190" gradientUnits="userSpaceOnUse" x1="1027" y1="0" x2="1514" y2="0"><stop offset="0" stop-color="#00ffdc"/><stop offset="0.29" stop-color="#00ffcf"/><stop offset="0.33" stop-color="#00ffcd"/><stop offset="0.37" stop-color="#3cffca"/><stop offset="0.41" stop-color="#7cffc7"/><stop offset="0.45" stop-color="#bdffc3"/><stop offset="0.48" stop-color="#fdffc0"/><stop offset="0.49" stop-color="#fff8ba"/><stop offset="0.51" stop-color="#ffd7a0"/><stop offset="0.53" stop-color="#ffb786"/><stop offset="0.55" stop-color="#ff996e"/><stop offset="0.59" stop-color="#ff7d57"/><stop offset="0.63" stop-color="#ff6242"/><stop offset="0.68" stop-color="#ff4a2e"/><stop offset="0.75" stop-color="#ff331c"/><stop offset="0.83" stop-color="#ff1f0c"/><stop offset="0.92" stop-color="#ff0f00"/><stop offset="1" stop-color="#ff0600"/></linearGradient>
<linearGradient id="c191" gradientUnits="userSpaceOnUse" x1="1028" y1="0" x2="1516" y2="0"><stop offset="0" stop-color="#00ffdf"/><stop offset="0.3" stop-color="#00ffd3"/><stop offset="0.32" stop-color="#00ffd2"/><stop offset="0.36" stop-color="#2cffd0"/><stop offset="0.4" stop-color="#6bffcd"/><stop offset="0.43" stop-color="#abffca"/><stop offset="0.47" stop-color="#eeffc7"/><stop offset="0.48" stop-color="#fffec6"/><stop offset="0.5" stop-color="#ffdca9"/><stop offset="0.52" stop-color="#ffbd90"/><stop offset="0.54" stop-color="#ffa078"/><stop offset="0.57" stop-color="#ff8360"/><stop offset="0.61" stop-color="#ff684a"/><stop offset="0.66" stop-color="#ff5036"/><stop offset="0.72" stop-color="#ff3823"/><stop offset="0.8" stop-color="#ff2312"/><stop offset="0.91" stop-color="#ff1002"/><stop offset="0.95" stop-color="#ff0b00"/><stop offset="1" stop-color="#ff0400"/></linearGradient>
<linearGradient id="c192" gradientUnits="userSpaceOnUse" x1="1028" y1="0" x2="1519" y2="0"><stop offset="0" stop-color="#00ffe3"/><stop offset="0.31" stop-color="#00ffd8"/><stop offset="0.32" stop-color="#01ffd7"/><stop offset="0.36" stop-color="#3effd5"/><stop offset="0.4" stop-color="#7cffd2"/><stop offset="0.44" stop-color="#bbffd0"/><stop offset="0.47" stop-color="#fdffcd"/><stop offset="0.47" stop-color="#fff8c7"/><stop offset="0.49" stop-color="#ffd6aa"/><stop offset="0.52" stop-color="#ffb68f"/><stop offset="0.54" stop-color="#ff9776"/><stop offset="0.57" stop-color="#ff7b5e"/><stop offset="0.62" stop-color="#ff6147"/><stop offset="0.67" stop-color="#ff4833"/><stop offset="0.73" stop-color="#ff3220"/><stop offset="0.82" stop-color="#ff1d0e"/><stop offset="0.92" stop-color="#ff0c00"/><stop offset="1" stop-color="#ff0300"/></linearGradient>
<linearGradient id="c193" gradientUnits="userSpaceOnUse" x1="1029" y1="0" x2="1521" y2="0"><stop offset="0" stop-color="#00ffe6"/><stop offset="0.32" stop-color="#00ffdc"/><stop offset="0.36" stop-color="#3effda"/><stop offset="0.4" stop-color="#7dffd8"/><stop offset="0.43" stop-color="#bdffd6"/><stop offset="0.47" stop-color="#fffed3"/><stop offset="0.48" stop-color="#ffdeb7"/><stop offset="0.5" stop-color="#ffbe9c"/><stop offset="0.53" stop-color="#ffa082"/><stop offset="0.56" stop-color="#ff8369"/><stop offset="0.59" stop-color="#ff6952"/><stop offset="0.64" stop-color="#ff503c"/><stop offset="0.7" stop-color="#ff3928"/><stop offset="0.78" stop-color="#ff2416"/><stop offset="0.88" stop-color="#ff1005"/><stop offset="0.93" stop-color="#ff0900"/><stop offset="1" stop-color="#ff0100"/></linearGradient>
<linearGradient id="c194" gradientUnits="userSpaceOnUse" x1="1029" y1="0" x2="1524" y2="0"><stop offset="0" stop-color="#00ffea"/><stop offset="0.31" stop-color="#00ffe2"/><stop offset="0.35" stop-color="#31ffe0"/><stop offset="0.39" stop-color="#6fffde"/><stop offset="0.42" stop-color="#aeffdd"/><stop offset="0.45" stop-color="#f0ffdb"/><stop offset="0.46" stop-color="#fdffda"/><stop offset="0.46" stop-color="#fff8d4"/><stop offset="0.48" stop-color="#ffd5b5"/><stop offset="0.5" stop-color="#ffb79a"/><stop offset="0.53" stop-color="#ff9a81"/><stop offset="0.56" stop-color="#ff7e68"/><stop offset="0.59" stop-color="#ff6351"/><stop offset="0.64" stop-color="#ff4b3b"/><stop offset="0.71" stop-color="#ff3426"/><stop offset="0.79" stop-color="#ff1f14"/><stop offset="0.89" stop-color="#ff0c04"/><stop offset="0.94" stop-color="#ff0700"/><stop offset="1" stop-color="#ff0000"/></linearGradient>
<linearGradient id="c195" gradientUnits="userSpaceOnUse" x1="1030" y1="0" x2="1526" y2="0"><stop offset="0" stop-color="#00ffee"/><stop offset="0.31" stop-color="#00ffe7"/><stop offset="0.31" stop-color="#07ffe7"/><stop offset="0.35" stop-color="#44ffe5"/><stop offset="0.39" stop-color="#82ffe4"/><stop offset="0.43" stop-color="#c3ffe3"/><stop offset="0.45" stop-color="#fffee1"/><stop offset="0.47" stop-color="#ffdec3"/><stop offset="0.49" stop-color="#ffbda6"/><stop offset="0.51" stop-color="#ff9f8a"/><stop offset="0.54" stop-color="#ff8371"/><stop offset="0.58" stop-color="#ff6859"/><stop offset="0.62" stop-color="#ff5042"/><stop offset="0.68" stop-color="#ff382d"/><stop offset="0.76" stop-color="#ff231a"/><stop offset="0.86" stop-color="#ff1009"/><stop offset="0.94" stop-color="#ff0500"/><stop offset="1" stop-color="#ff0000"/><stop offset="1" stop-color="#ff0000"/></linearGradient>
<linearGradient id="c196" gradientUnits="userSpaceOnUse" x1="1030" y1="0" x2="1529" y2="0"><stop offset="0" stop-color="#00fff2"/><stop offset="0.31" stop-color="#00ffed"/><stop offset="0.35" stop-color="#3dffec"/><stop offset="0.38" stop-color="#7bffeb"/><stop offset="0.42" stop-color="#bcffe9"/><stop offset="0.45" stop-color="#fdffe8"/><stop offset="0.45" stop-color="#fff8e1"/><stop offset="0.47" stop-color="#ffd8c4"/><stop offset="0.49" stop-color="#ffb8a7"/><stop offset="0.51" stop-color="#ff9b8b"/><stop offset="0.54" stop-color="#ff7e71"/><stop offset="0.58" stop-color="#ff6458"/><stop offset="0.62" stop-color="#ff4b42"/><stop offset="0.68" stop-color="#ff342c"/><stop offset="0.76" stop-color="#ff2019"/><stop offset="0.87" stop-color="#ff0d07"/><stop offset="0.94" stop-color="#ff0400"/><stop offset="0.98" stop-color="#ff0000"/><stop offset="1" stop-color="#ff0000"/></linearGradient>
<linearGradient id="c197" gradientUnits="userSpaceOnUse" x1="1031" y1="0" x2="1531" y2="0"><stop offset="0" stop-color="#00fff6"/><stop offset="0.3" stop-color="#00fff2"/><stop offset="0.34" stop-color="#36fff2"/><stop offset="0.37" stop-color="#74fff1"/><stop offset="0.41" stop-color="#b6fff0"/><stop offset="0.44" stop-color="#f7fff0"/><stop offset="0.44" stop-color="#fffeef"/><stop offset="0.46" stop-color="#ffddcf"/><stop offset="0.48" stop-color="#ffbcb0"/><stop offset="0.5" stop-color="#ff9d93"/><stop offset="0.53" stop-color="#ff8178"/><stop offset="0.57" stop-color="#ff665e"/><stop offset="0.61" stop-color="#ff4e47"/><stop offset="0.67" stop-color="#ff3732"/><stop offset="0.74" stop-color="#ff221e"/><stop offset="0.84" stop-color="#ff0f0b"/><stop offset="0.94" stop-color="#ff0200"/><stop offset="0.98" stop-color="#ff0000"/><stop offset="1" stop-color="#ff0000"/></linearGradient>
<linearGradient id="c198" gradientUnits="userSpaceOnUse" x1="1031" y1="0" x2="1534" y2="0"><stop offset="0" stop-color="#00fffa"/><stop offset="0.3" stop-color="#00fff8"/><stop offset="0.31" stop-color="#0afff8"/><stop offset="0.34" stop-color="#47fff8"/><stop offset="0.38" stop-color="#87fff8"/><stop offset="0.41" stop-color="#c8fff7"/><stop offset="0.44" stop-color="#fdfff7"/><stop offset="0.44" stop-color="#fff7ef"/><stop offset="0.46" stop-color="#ffd7d0"/><stop offset="0.48" stop-color="#ffb7b1"/><stop offset="0.5" stop-color="#ff9994"/><stop offset="0.53" stop-color="#ff7c78"/><stop offset="0.56" stop-color="#ff625e"/><stop offset="0.61" stop-color="#ff4a46"/><stop offset="0.67" stop-color="#ff3331"/><stop offset="0.75" stop-color="#ff1e1c"/><stop offset="0.85" stop-color="#ff0c0a"/><stop offset="0.94" stop-color="#ff0000"/><stop offset="1" stop-color="#ff0000"/></linearGradient>
<linearGradient id="c199" gradientUnits="userSpaceOnUse" x1="1032" y1="0" x2="1536" y2="0"><stop offset="0" stop-color="#00fffe"/><stop offset="0.3" stop-color="#01fffe"/><stop offset="0.33" stop-color="#3cfffe"/><stop offset="0.37" stop-color="#7cfffe"/><stop offset="0.4" stop-color="#bcfffe"/><stop offset="0.43" stop-color="#fffefe"/><stop offset="0.45" stop-color="#ffdcdc"/><stop offset="0.46" stop-color="#ffbebe"/><stop offset="0.49" stop-color="#ffa0a0"/><stop offset="0.51" stop-color="#ff8383"/><stop offset="0.55" stop-color="#ff6868"/><stop offset="0.59" stop-color="#ff5050"/><stop offset="0.64" stop-color="#ff3939"/><stop offset="0.71" stop-color="#ff2424"/><stop offset="0.81" stop-color="#ff1111"/><stop offset="0.93" stop-color="#ff0000"/><stop offset="1" stop-color="#ff0000"/></linearGradient>
<linearGradient id="c200" gradientUnits="userSpaceOnUse" x1="1032" y1="0" x2="1539" y2="0"><stop offset="0" stop-color="#00fcff"/><stop offset="0.29" stop-color="#00faff"/><stop offset="0.33" stop-color="#3bf9ff"/><stop offset="0.36" stop-color="#7af9ff"/><stop offset="0.4" stop-color="#b9f8ff"/><stop offset="0.43" stop-color="#fff7fe"/><stop offset="0.44" stop-color="#ffd6dd"/><stop offset="0.46" stop-color="#ffb9be"/><stop offset="0.48" stop-color="#ff9ca1"/><stop offset="0.51" stop-color="#ff7f84"/><stop offset="0.54" stop-color="#ff656a"/><stop offset="0.59" stop-color="#ff4d51"/><stop offset="0.64" stop-color="#ff373a"/><stop offset="0.71" stop-color="#ff2225"/><stop offset="0.8" stop-color="#ff0f11"/><stop offset="0.92" stop-color="#ff0002"/><stop offset="0.96" stop-color="#ff0000"/><stop offset="1" stop-color="#ff0000"/></linearGradient>
<linearGradient id="c201" gradientUnits="userSpaceOnUse" x1="1033" y1="0" x2="1541" y2="0"><stop offset="0" stop-color="#00f8ff"/><stop offset="0.29" stop-color="#00f4ff"/><stop offset="0.3" stop-color="#17f4ff"/><stop offset="0.34" stop-color="#54f3ff"/><stop offset="0.37" stop-color="#91f2ff"/><stop offset="0.41" stop-color="#d2f1ff"/><stop offset="0.43" stop-color="#fff0ff"/><stop offset="0.44" stop-color="#ffd0de"/><stop offset="0.46" stop-color="#ffb4bf"/><stop offset="0.48" stop-color="#ff98a2"/><stop offset="0.51" stop-color="#ff7c85"/><stop offset="0.54" stop-color="#ff626b"/><stop offset="0.58" stop-color="#ff4b52"/><stop offset="0.64" stop-color="#ff353b"/><stop offset="0.71" stop-color="#ff2026"/><stop offset="0.8" stop-color="#ff0e12"/><stop offset="0.91" stop-color="#ff0003"/><stop offset="0.95" stop-color="#ff0000"/><stop offset="1" stop-color="#ff0000"/></linearGradient>
<linearGradient id="c202" gradientUnits="userSpaceOnUse" x1="1033" y1="0" x2="1544" y2="0"><stop offset="0" stop-color="#00f4ff"/><stop offset="0.29" stop-color="#01eeff"/><stop offset="0.32" stop-color="#3eedff"/><stop offset="0.36" stop-color="#7cecff"/><stop offset="0.39" stop-color="#bdeaff"/><stop offset="0.42" stop-color="#ffe9ff"/><stop offset="0.44" stop-color="#ffc7db"/><stop offset="0.46" stop-color="#ffa9bb"/><stop offset="0.48" stop-color="#ff8d9c"/><stop offset="0.51" stop-color="#ff727f"/><stop offset="0.55" stop-color="#ff5965"/><stop offset="0.59" stop-color="#ff424c"/><stop offset="0.65" stop-color="#ff2d36"/><stop offset="0.72" stop-color="#ff1a21"/><stop offset="0.83" stop-color="#ff080e"/><stop offset="0.9" stop-color="#ff0005"/><stop offset="0.95" stop-color="#ff0000"/><stop offset="1" stop-color="#ff0000"/></linearGradient>
<linearGradient id="c203" gradientUnits="userSpaceOnUse" x1="1034" y1="0" x2="1546" y2="0"><stop offset="0" stop-color="#00f0ff"/><stop offset="0.28" stop-color="#00e9ff"/><stop offset="0.32" stop-color="#3ce7ff"/><stop offset="0.36" stop-color="#7de5ff"/><stop offset="0.39" stop-color="#bee4ff"/><stop offset="0.42" stop-color="#fee2ff"/><stop offset="0.44" stop-color="#ffbed8"/><stop offset="0.46" stop-color="#ffa2b9"/><stop offset="0.48" stop-color="#ff879b"/><stop offset="0.51" stop-color="#ff6d7f"/><stop offset="0.55" stop-color="#ff5565"/><stop offset="0.59" stop-color="#ff3f4c"/><stop offset="0.65" stop-color="#ff2a35"/><stop offset="0.73" stop-color="#ff1721"/><stop offset="0.83" stop-color="#ff060e"/><stop offset="0.88" stop-color="#ff0006"/><stop offset="0.95" stop-color="#ff0000"/><stop offset="1" stop-color="#ff0000"/></linearGradient>
<linearGradient id="c204" gradientUnits="userSpaceOnUse" x1="1034" y1="0" x2="1549" y2="0"><stop offset="0" stop-color="#00ecff"/><stop offset="0.28" stop-color="#00e3ff"/><stop offset="0.31" stop-color="#2be2ff"/><stop offset="0.34" stop-color="#68e0ff"/><stop offset="0.38" stop-color="#aadeff"/><stop offset="0.41" stop-color="#ecdcff"/><stop offset="0.42" stop-color="#fedbff"/><stop offset="0.42" stop-color="#ffd1f3"/><stop offset="0.44" stop-color="#ffb3d2"/><stop offset="0.46" stop-color="#ff96b2"/><stop offset="0.49" stop-color="#ff7c94"/><stop offset="0.52" stop-color="#ff6378"/><stop offset="0.56" stop-color="#ff4b5e"/><stop offset="0.61" stop-color="#ff3646"/><stop offset="0.67" stop-color="#ff2230"/><stop offset="0.75" stop-color="#ff101b"/><stop offset="0.86" stop-color="#ff0009"/><stop offset="0.95" stop-color="#ff0000"/><stop offset="1" stop-color="#ff0000"/></linearGradient>
<linearGradient id="c205" gradientUnits="userSpaceOnUse" x1="1035" y1="0" x2="1551" y2="0"><stop offset="0" stop-color="#00e8ff"/><stop offset="0.27" stop-color="#00deff"/><stop offset="0.28" stop-color="#04deff"/><stop offset="0.32" stop-color="#42dbff"/><stop offset="0.35" stop-color="#82d9ff"/><stop offset="0.39" stop-color="#c2d6ff"/><stop offset="0.41" stop-color="#fdd4ff"/><stop offset="0.42" stop-color="#ffcef8"/><stop offset="0.44" stop-color="#ffb0d6"/><stop offset="0.46" stop-color="#ff96b8"/><stop offset="0.48" stop-color="#ff7d9b"/><stop offset="0.51" stop-color="#ff657f"/><stop offset="0.54" stop-color="#ff4e65"/><stop offset="0.59" stop-color="#ff384c"/><stop offset="0.65" stop-color="#ff2435"/><stop offset="0.73" stop-color="#ff1220"/><stop offset="0.83" stop-color="#ff020d"/><stop offset="0.87" stop-color="#ff0009"/><stop offset="0.95" stop-color="#ff0000"/><stop offset="1" stop-color="#ff0000"/></linearGradient>
<linearGradient id="c206" gradientUnits="userSpaceOnUse" x1="1035" y1="0" x2="1554" y2="0"><stop offset="0" stop-color="#00e4ff"/><stop offset="0.27" stop-color="#00d8ff"/><stop offset="0.31" stop-color="#3dd6ff"/><stop offset="0.35" stop-color="#7cd3ff"/><stop offset="0.38" stop-color="#bad0ff"/><stop offset="0.41" stop-color="#fdceff"/><stop offset="0.41" stop-color="#ffccfd"/><stop offset="0.43" stop-color="#ffaeda"/><stop offset="0.45" stop-color="#ff94bb"/><stop offset="0.47" stop-color="#ff7b9e"/><stop offset="0.5" stop-color="#ff6382"/><stop offset="0.54" stop-color="#ff4c67"/><stop offset="0.58" stop-color="#ff384f"/><stop offset="0.64" stop-color="#ff2438"/><stop offset="0.72" stop-color="#ff1223"/><stop offset="0.82" stop-color="#ff020f"/><stop offset="0.85" stop-color="#ff000b"/><stop offset="0.95" stop-color="#ff0000"/><stop offset="1" stop-color="#ff0000"/></linearGradient>
<linearGradient id="c207" gradientUnits="userSpaceOnUse" x1="1036" y1="0" x2="1556" y2="0"><stop offset="0" stop-color="#00e0ff"/><stop offset="0.26" stop-color="#00d4ff"/><stop offset="0.27" stop-color="#00d3ff"/><stop offset="0.3" stop-color="#30d1ff"/><stop offset="0.34" stop-color="#6fceff"/><stop offset="0.37" stop-color="#afcbff"/><stop offset="0.4" stop-color="#efc8ff"/><stop offset="0.41" stop-color="#fcc7ff"/><stop offset="0.41" stop-color="#ffc6fe"/><stop offset="0.43" stop-color="#ffa9db"/><stop offset="0.45" stop-color="#ff90bc"/><stop offset="0.47" stop-color="#ff789f"/><stop offset="0.5" stop-color="#ff6083"/><stop offset="0.54" stop-color="#ff4a68"/><stop offset="0.58" stop-color="#ff354f"/><stop offset="0.64" stop-color="#ff2238"/><stop offset="0.72" stop-color="#ff1023"/><stop offset="0.82" stop-color="#ff0110"/><stop offset="0.95" stop-color="#ff0000"/><stop offset="1" stop-color="#ff0000"/></linearGradient>
<linearGradient id="c208" gradientUnits="userSpaceOnUse" x1="1036" y1="0" x2="1559" y2="0"><stop offset="0" stop-color="#00ddff"/><stop offset="0.25" stop-color="#00cfff"/><stop offset="0.26" stop-color="#00ceff"/><stop offset="0.27" stop-color="#07ceff"/><stop offset="0.31" stop-color="#43cbff"/><stop offset="0.35" stop-color="#81c7ff"/><stop offset="0.38" stop-color="#c3c4ff"/><stop offset="0.41" stop-color="#ffc0fe"/><stop offset="0.43" stop-color="#ffa4dc"/><stop offset="0.45" stop-color="#ff8bbd"/><stop offset="0.47" stop-color="#ff74a0"/><stop offset="0.5" stop-color="#ff5d84"/><stop offset="0.53" stop-color="#ff4769"/><stop offset="0.58" stop-color="#ff3350"/><stop offset="0.64" stop-color="#ff2039"/><stop offset="0.71" stop-color="#ff0f23"/><stop offset="0.81" stop-color="#ff0011"/><stop offset="0.95" stop-color="#ff0000"/><stop offset="1" stop-color="#ff0000"/></linearGradient>
<linearGradient id="c209" gradientUnits="userSpaceOnUse" x1="1037" y1="0" x2="1561" y2="0"><stop offset="0" stop-color="#00d9ff"/><stop offset="0.24" stop-color="#00cbff"/><stop offset="0.26" stop-color="#00c9ff"/><stop offset="0.3" stop-color="#3ec6ff"/><stop offset="0.34" stop-color="#7ec2ff"/><stop offset="0.38" stop-color="#bfbeff"/><stop offset="0.41" stop-color="#ffbaff"/><stop offset="0.42" stop-color="#ff9fdc"/><stop offset="0.44" stop-color="#ff85bb"/><stop offset="0.47" stop-color="#ff6d9d"/><stop offset="0.5" stop-color="#ff5680"/><stop offset="0.54" stop-color="#ff4266"/><stop offset="0.58" stop-color="#ff2f4e"/><stop offset="0.64" stop-color="#ff1d37"/><stop offset="0.72" stop-color="#ff0c22"/><stop offset="0.8" stop-color="#ff0012"/><stop offset="0.94" stop-color="#ff0001"/><stop offset="1" stop-color="#ff0000"/></linearGradient>
<linearGradient id="c210" gradientUnits="userSpaceOnUse" x1="1037" y1="0" x2="1564" y2="0"><stop offset="0" stop-color="#00d5ff"/><stop offset="0.23" stop-color="#00c7ff"/><stop offset="0.26" stop-color="#00c5ff"/><stop offset="0.3" stop-color="#37c1ff"/><stop offset="0.33" stop-color="#75bdff"/><stop offset="0.37" stop-color="#b4b9ff"/><stop offset="0.4" stop-color="#f7b5ff"/><stop offset="0.4" stop-color="#ffb4ff"/><stop offset="0.42" stop-color="#ff9add"/><stop offset="0.44" stop-color="#ff81bc"/><stop offset="0.47" stop-color="#ff699e"/><stop offset="0.5" stop-color="#ff5381"/><stop offset="0.54" stop-color="#ff3e66"/><stop offset="0.58" stop-color="#ff2b4d"/><stop offset="0.64" stop-color="#ff1936"/><stop offset="0.72" stop-color="#ff0921"/><stop offset="0.79" stop-color="#ff0014"/><stop offset="0.92" stop-color="#ff0003"/><stop offset="0.96" stop-color="#ff0000"/><stop offset="1" stop-color="#ff0000"/></linearGradient>
<linearGradient id="c211" gradientUnits="userSpaceOnUse" x1="1038" y1="0" x2="1566" y2="0"><stop offset="0" stop-color="#00d1ff"/><stop offset="0.22" stop-color="#00c3ff"/><stop offset="0.25" stop-color="#00c0ff"/><stop offset="0.26" stop-color="#0cbfff"/><stop offset="0.3" stop-color="#4abbff"/><stop offset="0.34" stop-color="#8ab6ff"/><stop offset="0.38" stop-color="#cbb2ff"/><stop offset="0.4" stop-color="#feaeff"/><stop offset="0.42" stop-color="#ff93db"/><stop offset="0.44" stop-color="#ff7bbb"/><stop offset="0.47" stop-color="#ff649d"/><stop offset="0.5" stop-color="#ff4f81"/><stop offset="0.53" stop-color="#ff3b66"/><stop offset="0.58" stop-color="#ff294d"/><stop offset="0.64" stop-color="#ff1736"/><stop offset="0.72" stop-color="#ff0822"/><stop offset="0.78" stop-color="#ff0016"/><stop offset="0.91" stop-color="#ff0004"/><stop offset="0.96" stop-color="#ff0000"/><stop offset="1" stop-color="#ff0000"/></linearGradient>
<linearGradient id="c212" gradientUnits="userSpaceOnUse" x1="1038" y1="0" x2="1569" y2="0"><stop offset="0" stop-color="#00ceff"/><stop offset="0.22" stop-color="#00bfff"/><stop offset="0.25" stop-color="#01bbff"/><stop offset="0.29" stop-color="#3db7ff"/><stop offset="0.33" stop-color="#7ab2ff"/><stop offset="0.37" stop-color="#bcadff"/><stop offset="0.4" stop-color="#fea8ff"/><stop offset="0.42" stop-color="#ff8cd8"/><stop offset="0.44" stop-color="#ff75b9"/><stop offset="0.47" stop-color="#ff609c"/><stop offset="0.5" stop-color="#ff4b80"/><stop offset="0.53" stop-color="#ff3866"/><stop offset="0.58" stop-color="#ff264d"/><stop offset="0.64" stop-color="#ff1537"/><stop offset="0.72" stop-color="#ff0622"/><stop offset="0.77" stop-color="#ff0018"/><stop offset="0.89" stop-color="#ff0006"/><stop offset="0.96" stop-color="#ff0000"/><stop offset="1" stop-color="#ff0000"/></linearGradient>
<linearGradient id="c213" gradientUnits="userSpaceOnUse" x1="1039" y1="0" x2="1571" y2="0"><stop offset="0" stop-color="#00caff"/><stop offset="0.21" stop-color="#00baff"/><stop offset="0.25" stop-color="#00b7ff"/><stop offset="0.29" stop-color="#3bb2ff"/><stop offset="0.33" stop-color="#7badff"/><stop offset="0.36" stop-color="#bca8ff"/><stop offset="0.4" stop-color="#fea3ff"/><stop offset="0.4" stop-color="#ff9bf5"/><stop offset="0.42" stop-color="#ff83d3"/><stop offset="0.44" stop-color="#ff6cb2"/><stop offset="0.47" stop-color="#ff5795"/><stop offset="0.5" stop-color="#ff437a"/><stop offset="0.54" stop-color="#ff3160"/><stop offset="0.59" stop-color="#ff1f48"/><stop offset="0.66" stop-color="#ff0f31"/><stop offset="0.74" stop-color="#ff011d"/><stop offset="0.86" stop-color="#ff000a"/><stop offset="0.96" stop-color="#ff0000"/><stop offset="1" stop-color="#ff0000"/></linearGradient>
<linearGradient id="c214" gradientUnits="userSpaceOnUse" x1="1039" y1="0" x2="1574" y2="0"><stop offset="0" stop-color="#00c7ff"/><stop offset="0.21" stop-color="#00b6ff"/><stop offset="0.24" stop-color="#00b2ff"/><stop offset="0.27" stop-color="#23afff"/><stop offset="0.31" stop-color="#63aaff"/><stop offset="0.35" stop-color="#a4a5ff"/><stop offset="0.38" stop-color="#e59fff"/><stop offset="0.39" stop-color="#fd9dff"/><stop offset="0.4" stop-color="#ff99f9"/><stop offset="0.42" stop-color="#ff81d6"/><stop offset="0.44" stop-color="#ff6bb8"/><stop offset="0.46" stop-color="#ff569a"/><stop offset="0.5" stop-color="#ff427e"/><stop offset="0.53" stop-color="#ff3063"/><stop offset="0.58" stop-color="#ff1f4b"/><stop offset="0.65" stop-color="#ff0f34"/><stop offset="0.73" stop-color="#ff011f"/><stop offset="0.84" stop-color="#ff000d"/><stop offset="0.96" stop-color="#ff0000"/><stop offset="1" stop-color="#ff0000"/></linearGradient>
<linearGradient id="c215" gradientUnits="userSpaceOnUse" x1="1040" y1="0" x2="1576" y2="0"><stop offset="0" stop-color="#00c3ff"/><stop offset="0.2" stop-color="#00b2ff"/><stop offset="0.24" stop-color="#01aeff"/><stop offset="0.29" stop-color="#3ea8ff"/><stop offset="0.32" stop-color="#7da3ff"/><stop offset="0.36" stop-color="#bd9dff"/><stop offset="0.39" stop-color="#fd98ff"/><stop offset="0.39" stop-color="#ff96fd"/><stop offset="0.41" stop-color="#ff81dd"/><stop offset="0.43" stop-color="#ff6bbe"/><stop offset="0.46" stop-color="#ff57a1"/><stop offset="0.49" stop-color="#ff4484"/><stop offset="0.52" stop-color="#ff326a"/><stop offset="0.57" stop-color="#ff2151"/><stop offset="0.63" stop-color="#ff113a"/><stop offset="0.71" stop-color="#ff0325"/><stop offset="0.74" stop-color="#ff001f"/><stop offset="0.85" stop-color="#ff000c"/><stop offset="0.96" stop-color="#ff0000"/><stop offset="1" stop-color="#ff0000"/></linearGradient>
<linearGradient id="c216" gradientUnits="userSpaceOnUse" x1="1040" y1="0" x2="1578" y2="0"><stop offset="0" stop-color="#00c0ff"/><stop offset="0.2" stop-color="#00aeff"/><stop offset="0.24" stop-color="#00aaff"/><stop offset="0.28" stop-color="#3ca4ff"/><stop offset="0.32" stop-color="#7a9eff"/><stop offset="0.36" stop-color="#b998ff"/><stop offset="0.39" stop-color="#fc92ff"/><stop offset="0.39" stop-color="#ff91fe"/><stop offset="0.41" stop-color="#ff7cde"/><stop offset="0.43" stop-color="#ff67bf"/><stop offset="0.45" stop-color="#ff54a1"/><stop offset="0.48" stop-color="#ff4185"/><stop offset="0.52" stop-color="#ff2f6b"/><stop offset="0.57" stop-color="#ff1f52"/><stop offset="0.63" stop-color="#ff103b"/><stop offset="0.7" stop-color="#ff0125"/><stop offset="0.74" stop-color="#ff001e"/><stop offset="0.86" stop-color="#ff000b"/><stop offset="0.97" stop-color="#ff0000"/><stop offset="1" stop-color="#ff0000"/></linearGradient>
<linearGradient id="c217" gradientUnits="userSpaceOnUse" x1="1041" y1="0" x2="1578" y2="0"><stop offset="0" stop-color="#00bcff"/><stop offset="0.2" stop-color="#00aaff"/><stop offset="0.24" stop-color="#00a5ff"/><stop offset="0.27" stop-color="#2da1ff"/><stop offset="0.31" stop-color="#6c9bff"/><stop offset="0.35" stop-color="#ac95ff"/><stop offset="0.38" stop-color="#ec8fff"/><stop offset="0.39" stop-color="#ff8cfe"/><stop offset="0.41" stop-color="#ff76dc"/><stop offset="0.43" stop-color="#ff62bd"/><stop offset="0.46" stop-color="#ff4e9e"/><stop offset="0.49" stop-color="#ff3c82"/><stop offset="0.53" stop-color="#ff2a67"/><stop offset="0.58" stop-color="#ff1a4f"/><stop offset="0.64" stop-color="#ff0b37"/><stop offset="0.71" stop-color="#ff0025"/><stop offset="0.82" stop-color="#ff0012"/><stop offset="0.96" stop-color="#ff0000"/><stop offset="1" stop-color="#ff0000"/></linearGradient>
<linearGradient id="c218" gradientUnits="userSpaceOnUse" x1="1042" y1="0" x2="1578" y2="0"><stop offset="0" stop-color="#00b8ff"/><stop offset="0.19" stop-color="#00a6ff"/><stop offset="0.24" stop-color="#01a1ff"/><stop offset="0.28" stop-color="#3f9bff"/><stop offset="0.32" stop-color="#7f94ff"/><stop offset="0.36" stop-color="#c18eff"/><stop offset="0.39" stop-color="#ff87ff"/><stop offset="0.41" stop-color="#ff72dc"/><stop offset="0.43" stop-color="#ff5dbb"/><stop offset="0.46" stop-color="#ff4a9d"/><stop offset="0.49" stop-color="#ff3881"/><stop offset="0.53" stop-color="#ff2767"/><stop offset="0.58" stop-color="#ff174e"/><stop offset="0.64" stop-color="#ff0937"/><stop offset="0.7" stop-color="#ff0027"/><stop offset="0.81" stop-color="#ff0014"/><stop offset="0.95" stop-color="#ff0002"/><stop offset="0.99" stop-color="#ff0000"/><stop offset="1" stop-color="#ff0000"/></linearGradient>
<linearGradient id="c219" gradientUnits="userSpaceOnUse" x1="1042" y1="0" x2="1578" y2="0"><stop offset="0" stop-color="#00b5ff"/><stop offset="0.19" stop-color="#00a3ff"/><stop offset="0.23" stop-color="#009dff"/><stop offset="0.28" stop-color="#3d97ff"/><stop offset="0.32" stop-color="#7d90ff"/><stop offset="0.36" stop-color="#bd89ff"/><stop offset="0.39" stop-color="#ff82ff"/><stop offset="0.41" stop-color="#ff6ddd"/><stop offset="0.43" stop-color="#ff59bc"/><stop offset="0.46" stop-color="#ff479e"/><stop offset="0.49" stop-color="#ff3582"/><stop offset="0.53" stop-color="#ff2568"/><stop offset="0.58" stop-color="#ff164f"/><stop offset="0.64" stop-color="#ff0838"/><stop offset="0.69" stop-color="#ff002a"/><stop offset="0.79" stop-color="#ff0016"/><stop offset="0.93" stop-color="#ff0004"/><stop offset="0.99" stop-color="#ff0000"/><stop offset="1" stop-color="#ff0000"/></linearGradient>
<linearGradient id="c220" gradientUnits="userSpaceOnUse" x1="1043" y1="0" x2="1578" y2="0"><stop offset="0" stop-color="#00b2ff"/><stop offset="0.19" stop-color="#009fff"/><stop offset="0.23" stop-color="#0099ff"/><stop offset="0.27" stop-color="#3194ff"/><stop offset="0.31" stop-color="#718dff"/><stop offset="0.35" stop-color="#b386ff"/><stop offset="0.39" stop-color="#f77eff"/><stop offset="0.39" stop-color="#fe7eff"/><stop offset="0.41" stop-color="#ff66d8"/><stop offset="0.43" stop-color="#ff53b8"/><stop offset="0.46" stop-color="#ff409a"/><stop offset="0.5" stop-color="#ff307d"/><stop offset="0.54" stop-color="#ff2063"/><stop offset="0.59" stop-color="#ff114b"/><stop offset="0.66" stop-color="#ff0434"/><stop offset="0.69" stop-color="#ff002c"/><stop offset="0.79" stop-color="#ff0018"/><stop offset="0.92" stop-color="#ff0006"/><stop offset="0.99" stop-color="#ff0000"/><stop offset="1" stop-color="#ff0000"/></linearGradient>
<linearGradient id="c221" gradientUnits="userSpaceOnUse" x1="1043" y1="0" x2="1578" y2="0"><stop offset="0" stop-color="#00aeff"/><stop offset="0.19" stop-color="#009bff"/><stop offset="0.23" stop-color="#0096ff"/><stop offset="0.24" stop-color="#0895ff"/><stop offset="0.28" stop-color="#458eff"/><stop offset="0.32" stop-color="#8486ff"/><stop offset="0.36" stop-color="#c57fff"/><stop offset="0.39" stop-color="#fe79ff"/><stop offset="0.4" stop-color="#ff69e4"/><stop offset="0.42" stop-color="#ff57c5"/><stop offset="0.45" stop-color="#ff44a6"/><stop offset="0.48" stop-color="#ff3388"/><stop offset="0.52" stop-color="#ff236d"/><stop offset="0.57" stop-color="#ff1454"/><stop offset="0.63" stop-color="#ff063c"/><stop offset="0.67" stop-color="#ff0030"/><stop offset="0.77" stop-color="#ff001b"/><stop offset="0.9" stop-color="#ff0009"/><stop offset="1" stop-color="#ff0000"/><stop offset="1" stop-color="#ff0000"/></linearGradient>
<linearGradient id="c222" gradientUnits="userSpaceOnUse" x1="1044" y1="0" x2="1578" y2="0"><stop offset="0" stop-color="#00abff"/><stop offset="0.18" stop-color="#0098ff"/><stop offset="0.23" stop-color="#0092ff"/><stop offset="0.27" stop-color="#3e8aff"/><stop offset="0.32" stop-color="#7f83ff"/><stop offset="0.36" stop-color="#c17bff"/><stop offset="0.39" stop-color="#fd74ff"/><stop offset="0.39" stop-color="#ff70f9"/><stop offset="0.41" stop-color="#ff5ed9"/><stop offset="0.43" stop-color="#ff4cba"/><stop offset="0.46" stop-color="#ff3b9b"/><stop offset="0.49" stop-color="#ff2b7f"/><stop offset="0.54" stop-color="#ff1c65"/><stop offset="0.59" stop-color="#ff0e4d"/><stop offset="0.66" stop-color="#ff0136"/><stop offset="0.74" stop-color="#ff0021"/><stop offset="0.86" stop-color="#ff000e"/><stop offset="1" stop-color="#ff0000"/><stop offset="1" stop-color="#ff0000"/></linearGradient>
<linearGradient id="c223" gradientUnits="userSpaceOnUse" x1="1044" y1="0" x2="1572" y2="0"><stop offset="0" stop-color="#00a8ff"/><stop offset="0.18" stop-color="#0094ff"/><stop offset="0.23" stop-color="#008eff"/><stop offset="0.27" stop-color="#3887ff"/><stop offset="0.31" stop-color="#7780ff"/><stop offset="0.35" stop-color="#b878ff"/><stop offset="0.39" stop-color="#f970ff"/><stop offset="0.39" stop-color="#ff6efd"/><stop offset="0.41" stop-color="#ff5cdc"/><stop offset="0.44" stop-color="#ff4abd"/><stop offset="0.46" stop-color="#ff399e"/><stop offset="0.5" stop-color="#ff2981"/><stop offset="0.54" stop-color="#ff1a67"/><stop offset="0.59" stop-color="#ff0d4e"/><stop offset="0.66" stop-color="#ff0037"/><stop offset="0.75" stop-color="#ff0022"/><stop offset="0.87" stop-color="#ff000f"/><stop offset="1" stop-color="#ff0001"/></linearGradient>
<linearGradient id="c224" gradientUnits="userSpaceOnUse" x1="1045" y1="0" x2="1567" y2="0"><stop offset="0" stop-color="#00a5ff"/><stop offset="0.18" stop-color="#0090ff"/><stop offset="0.23" stop-color="#008aff"/><stop offset="0.24" stop-color="#1488ff"/><stop offset="0.29" stop-color="#5380ff"/><stop offset="0.33" stop-color="#9278ff"/><stop offset="0.37" stop-color="#d270ff"/><stop offset="0.39" stop-color="#fd6bff"/><stop offset="0.4" stop-color="#ff6afe"/><stop offset="0.42" stop-color="#ff58dd"/><stop offset="0.44" stop-color="#ff47be"/><stop offset="0.47" stop-color="#ff369f"/><stop offset="0.5" stop-color="#ff2782"/><stop offset="0.54" stop-color="#ff1868"/><stop offset="0.6" stop-color="#ff0b4f"/><stop offset="0.66" stop-color="#ff003a"/><stop offset="0.75" stop-color="#ff0024"/><stop offset="0.87" stop-color="#ff0011"/><stop offset="1" stop-color="#ff0002"/></linearGradient>
<linearGradient id="c225" gradientUnits="userSpaceOnUse" x1="1046" y1="0" x2="1562" y2="0"><stop offset="0" stop-color="#00a1ff"/><stop offset="0.18" stop-color="#008dff"/><stop offset="0.23" stop-color="#0087ff"/><stop offset="0.28" stop-color="#3f7fff"/><stop offset="0.32" stop-color="#7e76ff"/><stop offset="0.36" stop-color="#be6eff"/><stop offset="0.4" stop-color="#ff65fe"/><stop offset="0.42" stop-color="#ff54de"/><stop offset="0.44" stop-color="#ff44be"/><stop offset="0.47" stop-color="#ff33a0"/><stop offset="0.51" stop-color="#ff2483"/><stop offset="0.55" stop-color="#ff1669"/><stop offset="0.6" stop-color="#ff0950"/><stop offset="0.66" stop-color="#ff003d"/><stop offset="0.75" stop-color="#ff0027"/><stop offset="0.86" stop-color="#ff0013"/><stop offset="1" stop-color="#ff0004"/></linearGradient>
<linearGradient id="c226" gradientUnits="userSpaceOnUse" x1="1046" y1="0" x2="1556" y2="0"><stop offset="0" stop-color="#009eff"/><stop offset="0.18" stop-color="#0089ff"/><stop offset="0.23" stop-color="#0083ff"/><stop offset="0.27" stop-color="#397cff"/><stop offset="0.32" stop-color="#7973ff"/><stop offset="0.36" stop-color="#bb6aff"/><stop offset="0.4" stop-color="#ff61ff"/><stop offset="0.42" stop-color="#ff50de"/><stop offset="0.45" stop-color="#ff40bf"/><stop offset="0.48" stop-color="#ff31a0"/><stop offset="0.51" stop-color="#ff2284"/><stop offset="0.55" stop-color="#ff156a"/><stop offset="0.61" stop-color="#ff0851"/><stop offset="0.66" stop-color="#ff0040"/><stop offset="0.74" stop-color="#ff002b"/><stop offset="0.85" stop-color="#ff0017"/><stop offset="1" stop-color="#ff0005"/></linearGradient>
<linearGradient id="c227" gradientUnits="userSpaceOnUse" x1="1047" y1="0" x2="1551" y2="0"><stop offset="0" stop-color="#009bff"/><stop offset="0.18" stop-color="#0086ff"/><stop offset="0.23" stop-color="#0080ff"/><stop offset="0.26" stop-color="#297aff"/><stop offset="0.31" stop-color="#6672ff"/><stop offset="0.35" stop-color="#a669ff"/><stop offset="0.39" stop-color="#e760ff"/><stop offset="0.41" stop-color="#ff5dff"/><stop offset="0.43" stop-color="#ff4bdc"/><stop offset="0.45" stop-color="#ff3bbb"/><stop offset="0.48" stop-color="#ff2c9e"/><stop offset="0.52" stop-color="#ff1e81"/><stop offset="0.57" stop-color="#ff1166"/><stop offset="0.62" stop-color="#ff044e"/><stop offset="0.66" stop-color="#ff0043"/><stop offset="0.74" stop-color="#ff002d"/><stop offset="0.85" stop-color="#ff0019"/><stop offset="1" stop-color="#ff0007"/></linearGradient>
<linearGradient id="c228" gradientUnits="userSpaceOnUse" x1="1047" y1="0" x2="1545" y2="0"><stop offset="0" stop-color="#0098ff"/><stop offset="0.18" stop-color="#0083ff"/><stop offset="0.23" stop-color="#017cff"/><stop offset="0.28" stop-color="#3e74ff"/><stop offset="0.33" stop-color="#7d6bff"/><stop offset="0.37" stop-color="#bf62ff"/><stop offset="0.41" stop-color="#ff59ff"/><stop offset="0.44" stop-color="#ff46da"/><stop offset="0.46" stop-color="#ff37ba"/><stop offset="0.49" stop-color="#ff289b"/><stop offset="0.53" stop-color="#ff1a7f"/><stop offset="0.58" stop-color="#ff0d64"/><stop offset="0.64" stop-color="#ff014c"/><stop offset="0.68" stop-color="#ff003e"/><stop offset="0.78" stop-color="#ff0028"/><stop offset="0.9" stop-color="#ff0015"/><stop offset="1" stop-color="#ff0009"/></linearGradient>
<linearGradient id="c229" gradientUnits="userSpaceOnUse" x1="1048" y1="0" x2="1540" y2="0"><stop offset="0" stop-color="#0095ff"/><stop offset="0.18" stop-color="#007fff"/><stop offset="0.23" stop-color="#0079ff"/><stop offset="0.28" stop-color="#3c70ff"/><stop offset="0.33" stop-color="#7b67ff"/><stop offset="0.37" stop-color="#bc5eff"/><stop offset="0.41" stop-color="#fe54ff"/><stop offset="0.44" stop-color="#ff42d8"/><stop offset="0.47" stop-color="#ff33b8"/><stop offset="0.5" stop-color="#ff259a"/><stop offset="0.54" stop-color="#ff177f"/><stop offset="0.59" stop-color="#ff0b64"/><stop offset="0.65" stop-color="#ff004c"/><stop offset="0.73" stop-color="#ff0035"/><stop offset="0.83" stop-color="#ff0020"/><stop offset="0.97" stop-color="#ff000d"/><stop offset="1" stop-color="#ff000a"/></linearGradient>
<linearGradient id="c230" gradientUnits="userSpaceOnUse" x1="1049" y1="0" x2="1535" y2="0"><stop offset="0" stop-color="#0092ff"/><stop offset="0.19" stop-color="#007cff"/><stop offset="0.23" stop-color="#0076ff"/><stop offset="0.27" stop-color="#2f6fff"/><stop offset="0.32" stop-color="#6e65ff"/><stop offset="0.37" stop-color="#b05cff"/><stop offset="0.41" stop-color="#f352ff"/><stop offset="0.42" stop-color="#fe50ff"/><stop offset="0.43" stop-color="#ff49f0"/><stop offset="0.45" stop-color="#ff3ace"/><stop offset="0.48" stop-color="#ff2baf"/><stop offset="0.52" stop-color="#ff1e92"/><stop offset="0.56" stop-color="#ff1176"/><stop offset="0.61" stop-color="#ff055c"/><stop offset="0.65" stop-color="#ff004f"/><stop offset="0.73" stop-color="#ff0038"/><stop offset="0.83" stop-color="#ff0022"/><stop offset="0.97" stop-color="#ff000f"/><stop offset="1" stop-color="#ff000c"/></linearGradient>
<linearGradient id="c231" gradientUnits="userSpaceOnUse" x1="1049" y1="0" x2="1529" y2="0"><stop offset="0" stop-color="#008fff"/><stop offset="0.19" stop-color="#0078ff"/><stop offset="0.23" stop-color="#0172ff"/><stop offset="0.29" stop-color="#3f69ff"/><stop offset="0.34" stop-color="#7c60ff"/><stop offset="0.38" stop-color="#bc56ff"/><stop offset="0.42" stop-color="#fd4cff"/><stop offset="0.43" stop-color="#ff4afa"/><stop offset="0.45" stop-color="#ff3bd9"/><stop offset="0.48" stop-color="#ff2dba"/><stop offset="0.51" stop-color="#ff209c"/><stop offset="0.55" stop-color="#ff137f"/><stop offset="0.6" stop-color="#ff0765"/><stop offset="0.65" stop-color="#ff0053"/><stop offset="0.72" stop-color="#ff003c"/><stop offset="0.82" stop-color="#ff0026"/><stop offset="0.96" stop-color="#ff0013"/><stop offset="1" stop-color="#ff000e"/></linearGradient>
<linearGradient id="c232" gradientUnits="userSpaceOnUse" x1="1050" y1="0" x2="1524" y2="0"><stop offset="0" stop-color="#008cff"/><stop offset="0.19" stop-color="#0075ff"/><stop offset="0.23" stop-color="#006fff"/><stop offset="0.28" stop-color="#3d66ff"/><stop offset="0.34" stop-color="#7d5cff"/><stop offset="0.39" stop-color="#c052ff"/><stop offset="0.43" stop-color="#fd48ff"/><stop offset="0.43" stop-color="#ff47fe"/><stop offset="0.45" stop-color="#ff39dc"/><stop offset="0.48" stop-color="#ff2bbd"/><stop offset="0.51" stop-color="#ff1e9e"/><stop offset="0.55" stop-color="#ff1282"/><stop offset="0.6" stop-color="#ff0668"/><stop offset="0.64" stop-color="#ff0058"/><stop offset="0.72" stop-color="#ff0040"/><stop offset="0.81" stop-color="#ff002a"/><stop offset="0.94" stop-color="#ff0016"/><stop offset="1" stop-color="#ff000f"/></linearGradient>
<linearGradient id="c233" gradientUnits="userSpaceOnUse" x1="1051" y1="0" x2="1519" y2="0"><stop offset="0" stop-color="#0089ff"/><stop offset="0.19" stop-color="#0072ff"/><stop offset="0.23" stop-color="#006cff"/><stop offset="0.28" stop-color="#3264ff"/><stop offset="0.33" stop-color="#715aff"/><stop offset="0.38" stop-color="#b150ff"/><stop offset="0.42" stop-color="#f346ff"/><stop offset="0.43" stop-color="#ff44fe"/><stop offset="0.46" stop-color="#ff36dd"/><stop offset="0.48" stop-color="#ff28bd"/><stop offset="0.52" stop-color="#ff1b9f"/><stop offset="0.56" stop-color="#ff1083"/><stop offset="0.61" stop-color="#ff0468"/><stop offset="0.64" stop-color="#ff005c"/><stop offset="0.71" stop-color="#ff0044"/><stop offset="0.81" stop-color="#ff002e"/><stop offset="0.93" stop-color="#ff001a"/><stop offset="1" stop-color="#ff0011"/></linearGradient>
<linearGradient id="c234" gradientUnits="userSpaceOnUse" x1="1051" y1="0" x2="1513" y2="0"><stop offset="0" stop-color="#0086ff"/><stop offset="0.19" stop-color="#006fff"/><stop offset="0.23" stop-color="#0169ff"/><stop offset="0.29" stop-color="#3f5fff"/><stop offset="0.34" stop-color="#7e55ff"/><stop offset="0.39" stop-color="#c04aff"/><stop offset="0.44" stop-color="#ff40fe"/><stop offset="0.46" stop-color="#ff32dd"/><stop offset="0.49" stop-color="#ff26be"/><stop offset="0.52" stop-color="#ff19a0"/><stop offset="0.57" stop-color="#ff0d83"/><stop offset="0.62" stop-color="#ff0268"/><stop offset="0.64" stop-color="#ff005e"/><stop offset="0.71" stop-color="#ff0046"/><stop offset="0.81" stop-color="#ff0030"/><stop offset="0.93" stop-color="#ff001c"/><stop offset="1" stop-color="#ff0013"/></linearGradient>
<linearGradient id="c235" gradientUnits="userSpaceOnUse" x1="1052" y1="0" x2="1508" y2="0"><stop offset="0" stop-color="#0083ff"/><stop offset="0.19" stop-color="#006bff"/><stop offset="0.23" stop-color="#0066ff"/><stop offset="0.29" stop-color="#3e5cff"/><stop offset="0.34" stop-color="#7c52ff"/><stop offset="0.39" stop-color="#bd47ff"/><stop offset="0.44" stop-color="#ff3cff"/><stop offset="0.46" stop-color="#ff2fde"/><stop offset="0.49" stop-color="#ff23bf"/><stop offset="0.53" stop-color="#ff17a1"/><stop offset="0.57" stop-color="#ff0b83"/><stop offset="0.62" stop-color="#ff0069"/><stop offset="0.69" stop-color="#ff0050"/><stop offset="0.78" stop-color="#ff0039"/><stop offset="0.89" stop-color="#ff0024"/><stop offset="1" stop-color="#ff0015"/></linearGradient>
<linearGradient id="c236" gradientUnits="userSpaceOnUse" x1="1053" y1="0" x2="1503" y2="0"><stop offset="0" stop-color="#0080ff"/><stop offset="0.19" stop-color="#0068ff"/><stop offset="0.23" stop-color="#0063ff"/><stop offset="0.28" stop-color="#365aff"/><stop offset="0.34" stop-color="#7550ff"/><stop offset="0.39" stop-color="#b745ff"/><stop offset="0.44" stop-color="#fc39ff"/><stop offset="0.44" stop-color="#ff39ff"/><stop offset="0.47" stop-color="#ff2bdc"/><stop offset="0.5" stop-color="#ff1ebb"/><stop offset="0.54" stop-color="#ff129c"/><stop offset="0.58" stop-color="#ff0780"/><stop offset="0.63" stop-color="#ff006b"/><stop offset="0.7" stop-color="#ff0052"/><stop offset="0.78" stop-color="#ff003a"/><stop offset="0.9" stop-color="#ff0025"/><stop offset="1" stop-color="#ff0017"/></linearGradient>
<linearGradient id="c237" gradientUnits="userSpaceOnUse" x1="1053" y1="0" x2="1497" y2="0"><stop offset="0" stop-color="#007dff"/><stop offset="0.2" stop-color="#0065ff"/><stop offset="0.23" stop-color="#0160ff"/><stop offset="0.29" stop-color="#3e56ff"/><stop offset="0.35" stop-color="#7e4bff"/><stop offset="0.41" stop-color="#c040ff"/><stop offset="0.45" stop-color="#fe35ff"/><stop offset="0.48" stop-color="#ff27da"/><stop offset="0.51" stop-color="#ff1bba"/><stop offset="0.55" stop-color="#ff0f9c"/><stop offset="0.6" stop-color="#ff057f"/><stop offset="0.63" stop-color="#ff006f"/><stop offset="0.69" stop-color="#ff0056"/><stop offset="0.78" stop-color="#ff003f"/><stop offset="0.89" stop-color="#ff0029"/><stop offset="1" stop-color="#ff0019"/></linearGradient>
<linearGradient id="c238" gradientUnits="userSpaceOnUse" x1="1054" y1="0" x2="1492" y2="0"><stop offset="0" stop-color="#007aff"/><stop offset="0.2" stop-color="#0062ff"/><stop offset="0.23" stop-color="#005dff"/><stop offset="0.29" stop-color="#3f52ff"/><stop offset="0.35" stop-color="#7e47ff"/><stop offset="0.41" stop-color="#c03cff"/><stop offset="0.45" stop-color="#fe31ff"/><stop offset="0.49" stop-color="#ff23d8"/><stop offset="0.52" stop-color="#ff18b9"/><stop offset="0.56" stop-color="#ff0d9b"/><stop offset="0.61" stop-color="#ff027e"/><stop offset="0.63" stop-color="#ff0073"/><stop offset="0.69" stop-color="#ff0059"/><stop offset="0.78" stop-color="#ff0042"/><stop offset="0.88" stop-color="#ff002c"/><stop offset="1" stop-color="#ff001b"/></linearGradient>
<linearGradient id="c239" gradientUnits="userSpaceOnUse" x1="1055" y1="0" x2="1486" y2="0"><stop offset="0" stop-color="#0077ff"/><stop offset="0.2" stop-color="#005fff"/><stop offset="0.23" stop-color="#005aff"/><stop offset="0.29" stop-color="#3950ff"/><stop offset="0.35" stop-color="#7746ff"/><stop offset="0.41" stop-color="#b83aff"/><stop offset="0.46" stop-color="#fa2fff"/><stop offset="0.46" stop-color="#ff2dfd"/><stop offset="0.49" stop-color="#ff21db"/><stop offset="0.52" stop-color="#ff16bb"/><stop offset="0.56" stop-color="#ff0b9d"/><stop offset="0.61" stop-color="#ff0180"/><stop offset="0.67" stop-color="#ff0066"/><stop offset="0.75" stop-color="#ff004d"/><stop offset="0.84" stop-color="#ff0036"/><stop offset="0.97" stop-color="#ff0021"/><stop offset="1" stop-color="#ff001d"/></linearGradient>
<linearGradient id="c240" gradientUnits="userSpaceOnUse" x1="1055" y1="0" x2="1481" y2="0"><stop offset="0" stop-color="#0074ff"/><stop offset="0.2" stop-color="#005cff"/><stop offset="0.23" stop-color="#0058ff"/><stop offset="0.28" stop-color="#2b50ff"/><stop offset="0.34" stop-color="#6945ff"/><stop offset="0.4" stop-color="#aa39ff"/><stop offset="0.45" stop-color="#ee2dff"/><stop offset="0.46" stop-color="#fd2aff"/><stop offset="0.47" stop-color="#ff29fa"/><stop offset="0.5" stop-color="#ff1dd9"/><stop offset="0.53" stop-color="#ff12ba"/><stop offset="0.57" stop-color="#ff089c"/><stop offset="0.62" stop-color="#ff0082"/><stop offset="0.68" stop-color="#ff0067"/><stop offset="0.75" stop-color="#ff004f"/><stop offset="0.85" stop-color="#ff0038"/><stop offset="0.97" stop-color="#ff0023"/><stop offset="1" stop-color="#ff001f"/></linearGradient>
<linearGradient id="c241" gradientUnits="userSpaceOnUse" x1="1056" y1="0" x2="1476" y2="0"><stop offset="0" stop-color="#0071ff"/><stop offset="0.2" stop-color="#0059ff"/><stop offset="0.23" stop-color="#0155ff"/><stop offset="0.3" stop-color="#3e4aff"/><stop offset="0.36" stop-color="#7e3eff"/><stop offset="0.42" stop-color="#be32ff"/><stop offset="0.47" stop-color="#fd27ff"/><stop offset="0.47" stop-color="#ff26fe"/><stop offset="0.5" stop-color="#ff1bdc"/><stop offset="0.53" stop-color="#ff11bd"/><stop offset="0.57" stop-color="#ff079f"/><stop offset="0.61" stop-color="#ff0088"/><stop offset="0.67" stop-color="#ff006d"/><stop offset="0.75" stop-color="#ff0053"/><stop offset="0.84" stop-color="#ff003c"/><stop offset="0.96" stop-color="#ff0026"/><stop offset="1" stop-color="#ff0021"/></linearGradient>
<linearGradient id="c242" gradientUnits="userSpaceOnUse" x1="1057" y1="0" x2="1470" y2="0"><stop offset="0" stop-color="#006fff"/><stop offset="0.21" stop-color="#0055ff"/><stop offset="0.23" stop-color="#0052ff"/><stop offset="0.3" stop-color="#3c47ff"/><stop offset="0.36" stop-color="#7c3bff"/><stop offset="0.42" stop-color="#be2fff"/><stop offset="0.48" stop-color="#ff23fe"/><stop offset="0.51" stop-color="#ff18dd"/><stop offset="0.54" stop-color="#ff0ebd"/><stop offset="0.58" stop-color="#ff049f"/><stop offset="0.61" stop-color="#ff008e"/><stop offset="0.67" stop-color="#ff0072"/><stop offset="0.74" stop-color="#ff0058"/><stop offset="0.83" stop-color="#ff0041"/><stop offset="0.95" stop-color="#ff002b"/><stop offset="1" stop-color="#ff0024"/></linearGradient>
<linearGradient id="c243" gradientUnits="userSpaceOnUse" x1="1057" y1="0" x2="1465" y2="0"><stop offset="0" stop-color="#006cff"/><stop offset="0.21" stop-color="#0053ff"/><stop offset="0.23" stop-color="#0050ff"/><stop offset="0.29" stop-color="#3047ff"/><stop offset="0.36" stop-color="#703bff"/><stop offset="0.42" stop-color="#b12fff"/><stop offset="0.47" stop-color="#f322ff"/><stop offset="0.48" stop-color="#ff20ff"/><stop offset="0.51" stop-color="#ff15dd"/><stop offset="0.55" stop-color="#ff0cbe"/><stop offset="0.59" stop-color="#ff02a0"/><stop offset="0.61" stop-color="#ff0094"/><stop offset="0.66" stop-color="#ff0078"/><stop offset="0.74" stop-color="#ff005e"/><stop offset="0.82" stop-color="#ff0046"/><stop offset="0.94" stop-color="#ff002f"/><stop offset="1" stop-color="#ff0026"/></linearGradient>
<linearGradient id="c244" gradientUnits="userSpaceOnUse" x1="1058" y1="0" x2="1460" y2="0"><stop offset="0" stop-color="#0069ff"/><stop offset="0.21" stop-color="#0050ff"/><stop offset="0.23" stop-color="#014dff"/><stop offset="0.3" stop-color="#3e41ff"/><stop offset="0.37" stop-color="#7d35ff"/><stop offset="0.43" stop-color="#bf29ff"/><stop offset="0.49" stop-color="#ff1dff"/><stop offset="0.52" stop-color="#ff13de"/><stop offset="0.55" stop-color="#ff09be"/><stop offset="0.59" stop-color="#ff00a1"/><stop offset="0.65" stop-color="#ff0084"/><stop offset="0.71" stop-color="#ff0069"/><stop offset="0.79" stop-color="#ff0050"/><stop offset="0.9" stop-color="#ff0039"/><stop offset="1" stop-color="#ff0028"/></linearGradient>
<linearGradient id="c245" gradientUnits="userSpaceOnUse" x1="1059" y1="0" x2="1454" y2="0"><stop offset="0" stop-color="#0066ff"/><stop offset="0.21" stop-color="#004dff"/><stop offset="0.23" stop-color="#004aff"/><stop offset="0.3" stop-color="#3d3fff"/><stop offset="0.37" stop-color="#7e32ff"/><stop offset="0.44" stop-color="#bf26ff"/><stop offset="0.49" stop-color="#ff19ff"/><stop offset="0.53" stop-color="#ff0fdc"/><stop offset="0.56" stop-color="#ff06bb"/><stop offset="0.6" stop-color="#ff00a4"/><stop offset="0.65" stop-color="#ff0087"/><stop offset="0.72" stop-color="#ff006c"/><stop offset="0.8" stop-color="#ff0053"/><stop offset="0.9" stop-color="#ff003b"/><stop offset="1" stop-color="#ff002b"/></linearGradient>
<linearGradient id="c246" gradientUnits="userSpaceOnUse" x1="1060" y1="0" x2="1449" y2="0"><stop offset="0" stop-color="#0064ff"/><stop offset="0.21" stop-color="#004aff"/><stop offset="0.23" stop-color="#0048ff"/><stop offset="0.29" stop-color="#333eff"/><stop offset="0.37" stop-color="#7232ff"/><stop offset="0.43" stop-color="#b425ff"/><stop offset="0.49" stop-color="#f817ff"/><stop offset="0.5" stop-color="#fe16ff"/><stop offset="0.53" stop-color="#ff0cda"/><stop offset="0.57" stop-color="#ff03ba"/><stop offset="0.59" stop-color="#ff00ac"/><stop offset="0.65" stop-color="#ff008e"/><stop offset="0.71" stop-color="#ff0073"/><stop offset="0.78" stop-color="#ff005a"/><stop offset="0.88" stop-color="#ff0042"/><stop offset="1" stop-color="#ff002e"/></linearGradient>
<linearGradient id="c247" gradientUnits="userSpaceOnUse" x1="1060" y1="0" x2="1444" y2="0"><stop offset="0" stop-color="#0061ff"/><stop offset="0.22" stop-color="#0047ff"/><stop offset="0.23" stop-color="#0145ff"/><stop offset="0.31" stop-color="#3f39ff"/><stop offset="0.38" stop-color="#7f2cff"/><stop offset="0.45" stop-color="#bf20ff"/><stop offset="0.51" stop-color="#fe13ff"/><stop offset="0.55" stop-color="#ff08d6"/><stop offset="0.59" stop-color="#ff00b7"/><stop offset="0.64" stop-color="#ff0098"/><stop offset="0.7" stop-color="#ff007c"/><stop offset="0.77" stop-color="#ff0062"/><stop offset="0.86" stop-color="#ff0049"/><stop offset="0.98" stop-color="#ff0033"/><stop offset="1" stop-color="#ff0030"/></linearGradient>
<linearGradient id="c248" gradientUnits="userSpaceOnUse" x1="1061" y1="0" x2="1438" y2="0"><stop offset="0" stop-color="#005eff"/><stop offset="0.22" stop-color="#0044ff"/><stop offset="0.23" stop-color="#0043ff"/><stop offset="0.31" stop-color="#3e37ff"/><stop offset="0.38" stop-color="#7d2aff"/><stop offset="0.45" stop-color="#bf1dff"/><stop offset="0.51" stop-color="#fe10ff"/><stop offset="0.52" stop-color="#ff0ef8"/><stop offset="0.55" stop-color="#ff05d6"/><stop offset="0.58" stop-color="#ff00bf"/><stop offset="0.63" stop-color="#ff00a0"/><stop offset="0.69" stop-color="#ff0083"/><stop offset="0.76" stop-color="#ff0069"/><stop offset="0.85" stop-color="#ff0050"/><stop offset="0.97" stop-color="#ff0038"/><stop offset="1" stop-color="#ff0033"/></linearGradient>
<linearGradient id="c249" gradientUnits="userSpaceOnUse" x1="1062" y1="0" x2="1433" y2="0"><stop offset="0" stop-color="#005cff"/><stop offset="0.22" stop-color="#0041ff"/><stop offset="0.23" stop-color="#0240ff"/><stop offset="0.31" stop-color="#3f34ff"/><stop offset="0.39" stop-color="#7e27ff"/><stop offset="0.46" stop-color="#bf1aff"/><stop offset="0.52" stop-color="#fd0dff"/><stop offset="0.52" stop-color="#ff0cfb"/><stop offset="0.56" stop-color="#ff03d9"/><stop offset="0.58" stop-color="#ff00c8"/><stop offset="0.63" stop-color="#ff00a9"/><stop offset="0.68" stop-color="#ff008b"/><stop offset="0.75" stop-color="#ff0070"/><stop offset="0.84" stop-color="#ff0056"/><stop offset="0.95" stop-color="#ff003f"/><stop offset="1" stop-color="#ff0036"/></linearGradient>
<linearGradient id="c250" gradientUnits="userSpaceOnUse" x1="1063" y1="0" x2="1428" y2="0"><stop offset="0" stop-color="#0059ff"/><stop offset="0.22" stop-color="#003eff"/><stop offset="0.28" stop-color="#2736ff"/><stop offset="0.36" stop-color="#6729ff"/><stop offset="0.44" stop-color="#a81cff"/><stop offset="0.51" stop-color="#ec0eff"/><stop offset="0.53" stop-color="#ff0afe"/><stop offset="0.56" stop-color="#ff01dc"/><stop offset="0.6" stop-color="#ff00be"/><stop offset="0.65" stop-color="#ff00a0"/><stop offset="0.71" stop-color="#ff0084"/><stop offset="0.78" stop-color="#ff0069"/><stop offset="0.88" stop-color="#ff0050"/><stop offset="1" stop-color="#ff0039"/><stop offset="1" stop-color="#ff0039"/></linearGradient>
<linearGradient id="c251" gradientUnits="userSpaceOnUse" x1="1064" y1="0" x2="1422" y2="0"><stop offset="0" stop-color="#0056ff"/><stop offset="0.23" stop-color="#003cff"/><stop offset="0.32" stop-color="#3f2fff"/><stop offset="0.4" stop-color="#7f21ff"/><stop offset="0.47" stop-color="#bf14ff"/><stop offset="0.53" stop-color="#ff07fe"/><stop offset="0.57" stop-color="#ff00df"/><stop offset="0.61" stop-color="#ff00bf"/><stop offset="0.66" stop-color="#ff00a1"/><stop offset="0.72" stop-color="#ff0084"/><stop offset="0.8" stop-color="#ff006a"/><stop offset="0.89" stop-color="#ff0051"/><stop offset="1" stop-color="#ff003c"/></linearGradient>
<linearGradient id="c252" gradientUnits="userSpaceOnUse" x1="1064" y1="0" x2="1417" y2="0"><stop offset="0" stop-color="#0054ff"/><stop offset="0.23" stop-color="#003aff"/><stop offset="0.31" stop-color="#3a2dff"/><stop offset="0.39" stop-color="#7820ff"/><stop offset="0.47" stop-color="#ba12ff"/><stop offset="0.54" stop-color="#ff04ff"/><stop offset="0.56" stop-color="#ff00e9"/><stop offset="0.6" stop-color="#ff00c9"/><stop offset="0.65" stop-color="#ff00ab"/><stop offset="0.71" stop-color="#ff008d"/><stop offset="0.78" stop-color="#ff0072"/><stop offset="0.88" stop-color="#ff0058"/><stop offset="0.99" stop-color="#ff0040"/><stop offset="1" stop-color="#ff003f"/></linearGradient>
<linearGradient id="c253" gradientUnits="userSpaceOnUse" x1="1065" y1="0" x2="1411" y2="0"><stop offset="0" stop-color="#0051ff"/><stop offset="0.23" stop-color="#0037ff"/><stop offset="0.29" stop-color="#2c2eff"/><stop offset="0.38" stop-color="#6b20ff"/><stop offset="0.46" stop-color="#ab13ff"/><stop offset="0.53" stop-color="#ee05ff"/><stop offset="0.55" stop-color="#ff01ff"/><stop offset="0.59" stop-color="#ff00dd"/><stop offset="0.63" stop-color="#ff00bc"/><stop offset="0.69" stop-color="#ff009e"/><stop offset="0.75" stop-color="#ff0081"/><stop offset="0.84" stop-color="#ff0066"/><stop offset="0.94" stop-color="#ff004d"/><stop offset="1" stop-color="#ff0043"/></linearGradient>
<linearGradient id="c254" gradientUnits="userSpaceOnUse" x1="1066" y1="0" x2="1406" y2="0"><stop offset="0" stop-color="#004fff"/><stop offset="0.23" stop-color="#0035ff"/><stop offset="0.32" stop-color="#3d28ff"/><stop offset="0.41" stop-color="#7c1aff"/><stop offset="0.49" stop-color="#bd0cff"/><stop offset="0.55" stop-color="#fc00ff"/><stop offset="0.56" stop-color="#ff00ff"/><stop offset="0.6" stop-color="#ff00d9"/><stop offset="0.65" stop-color="#ff00b9"/><stop offset="0.7" stop-color="#ff009c"/><stop offset="0.77" stop-color="#ff007f"/><stop offset="0.86" stop-color="#ff0065"/><stop offset="0.97" stop-color="#ff004c"/><stop offset="1" stop-color="#ff0046"/></linearGradient>
<linearGradient id="c255" gradientUnits="userSpaceOnUse" x1="1067" y1="0" x2="1401" y2="0"><stop offset="0" stop-color="#004cff"/><stop offset="0.22" stop-color="#0033ff"/><stop offset="0.32" stop-color="#3c26ff"/><stop offset="0.41" stop-color="#7c18ff"/><stop offset="0.49" stop-color="#bd0aff"/><stop offset="0.54" stop-color="#ed00ff"/><stop offset="0.56" stop-color="#fe00ff"/><stop offset="0.61" stop-color="#ff00d8"/><stop offset="0.66" stop-color="#ff00b8"/><stop offset="0.72" stop-color="#ff009a"/><stop offset="0.79" stop-color="#ff007d"/><stop offset="0.88" stop-color="#ff0063"/><stop offset="0.99" stop-color="#ff004a"/><stop offset="1" stop-color="#ff0049"/></linearGradient>
<linearGradient id="c256" gradientUnits="userSpaceOnUse" x1="1068" y1="0" x2="1395" y2="0"><stop offset="0" stop-color="#004aff"/><stop offset="0.22" stop-color="#0031ff"/><stop offset="0.31" stop-color="#3126ff"/><stop offset="0.4" stop-color="#7018ff"/><stop offset="0.48" stop-color="#b10aff"/><stop offset="0.54" stop-color="#e200ff"/><stop offset="0.57" stop-color="#fe00ff"/><stop offset="0.6" stop-color="#ff00e8"/><stop offset="0.65" stop-color="#ff00c8"/><stop offset="0.7" stop-color="#ff00a9"/><stop offset="0.77" stop-color="#ff008b"/><stop offset="0.85" stop-color="#ff0070"/><stop offset="0.95" stop-color="#ff0056"/><stop offset="1" stop-color="#ff004d"/></linearGradient>
<linearGradient id="c257" gradientUnits="userSpaceOnUse" x1="1069" y1="0" x2="1390" y2="0"><stop offset="0" stop-color="#0047ff"/><stop offset="0.22" stop-color="#012eff"/><stop offset="0.33" stop-color="#3e21ff"/><stop offset="0.42" stop-color="#7e13ff"/><stop offset="0.5" stop-color="#be04ff"/><stop offset="0.54" stop-color="#d700ff"/><stop offset="0.58" stop-color="#fe00ff"/><stop offset="0.59" stop-color="#ff00f8"/><stop offset="0.63" stop-color="#ff00d6"/><stop offset="0.69" stop-color="#ff00b6"/><stop offset="0.75" stop-color="#ff0098"/><stop offset="0.83" stop-color="#ff007c"/><stop offset="0.92" stop-color="#ff0061"/><stop offset="1" stop-color="#ff0051"/></linearGradient>
<linearGradient id="c258" gradientUnits="userSpaceOnUse" x1="1070" y1="0" x2="1385" y2="0"><stop offset="0" stop-color="#0044ff"/><stop offset="0.22" stop-color="#002cff"/><stop offset="0.33" stop-color="#3d1fff"/><stop offset="0.42" stop-color="#7c11ff"/><stop offset="0.51" stop-color="#be02ff"/><stop offset="0.53" stop-color="#d000ff"/><stop offset="0.59" stop-color="#ff00fe"/><stop offset="0.63" stop-color="#ff00db"/><stop offset="0.69" stop-color="#ff00bc"/><stop offset="0.75" stop-color="#ff009d"/><stop offset="0.83" stop-color="#ff0080"/><stop offset="0.92" stop-color="#ff0066"/><stop offset="1" stop-color="#ff0054"/></linearGradient>
<linearGradient id="c259" gradientUnits="userSpaceOnUse" x1="1070" y1="0" x2="1379" y2="0"><stop offset="0" stop-color="#0042ff"/><stop offset="0.22" stop-color="#002aff"/><stop offset="0.32" stop-color="#341eff"/><stop offset="0.42" stop-color="#7410ff"/><stop offset="0.51" stop-color="#b401ff"/><stop offset="0.54" stop-color="#cb00ff"/><stop offset="0.6" stop-color="#ff00fe"/><stop offset="0.65" stop-color="#ff00dc"/><stop offset="0.7" stop-color="#ff00bc"/><stop offset="0.76" stop-color="#ff009e"/><stop offset="0.84" stop-color="#ff0081"/><stop offset="0.94" stop-color="#ff0066"/><stop offset="1" stop-color="#ff0059"/></linearGradient>
<linearGradient id="c260" gradientUnits="userSpaceOnUse" x1="1071" y1="0" x2="1374" y2="0"><stop offset="0" stop-color="#0040ff"/><stop offset="0.22" stop-color="#0128ff"/><stop offset="0.34" stop-color="#3f1aff"/><stop offset="0.44" stop-color="#7f0bff"/><stop offset="0.51" stop-color="#b400ff"/><stop offset="0.6" stop-color="#f700ff"/><stop offset="0.61" stop-color="#ff00ff"/><stop offset="0.66" stop-color="#ff00dc"/><stop offset="0.71" stop-color="#ff00bd"/><stop offset="0.78" stop-color="#ff009e"/><stop offset="0.85" stop-color="#ff0082"/><stop offset="0.95" stop-color="#ff0067"/><stop offset="1" stop-color="#ff005d"/></linearGradient>
<linearGradient id="c261" gradientUnits="userSpaceOnUse" x1="1072" y1="0" x2="1369" y2="0"><stop offset="0" stop-color="#003dff"/><stop offset="0.22" stop-color="#0026ff"/><stop offset="0.34" stop-color="#3e18ff"/><stop offset="0.44" stop-color="#7e09ff"/><stop offset="0.51" stop-color="#a900ff"/><stop offset="0.6" stop-color="#ec00ff"/><stop offset="0.62" stop-color="#ff00ff"/><stop offset="0.67" stop-color="#ff00dd"/><stop offset="0.72" stop-color="#ff00bc"/><stop offset="0.79" stop-color="#ff009d"/><stop offset="0.87" stop-color="#ff0081"/><stop offset="0.97" stop-color="#ff0067"/><stop offset="1" stop-color="#ff0061"/></linearGradient>
<linearGradient id="c262" gradientUnits="userSpaceOnUse" x1="1073" y1="0" x2="1363" y2="0"><stop offset="0" stop-color="#003bff"/><stop offset="0.22" stop-color="#0024ff"/><stop offset="0.33" stop-color="#3717ff"/><stop offset="0.44" stop-color="#7808ff"/><stop offset="0.5" stop-color="#a000ff"/><stop offset="0.59" stop-color="#e200ff"/><stop offset="0.63" stop-color="#ff00ff"/><stop offset="0.68" stop-color="#ff00db"/><stop offset="0.74" stop-color="#ff00bb"/><stop offset="0.81" stop-color="#ff009d"/><stop offset="0.9" stop-color="#ff0080"/><stop offset="1" stop-color="#ff0066"/></linearGradient>
<linearGradient id="c263" gradientUnits="userSpaceOnUse" x1="1074" y1="0" x2="1358" y2="0"><stop offset="0" stop-color="#0038ff"/><stop offset="0.22" stop-color="#0122ff"/><stop offset="0.34" stop-color="#3e14ff"/><stop offset="0.45" stop-color="#7c05ff"/><stop offset="0.49" stop-color="#9700ff"/><stop offset="0.59" stop-color="#da00ff"/><stop offset="0.64" stop-color="#fe00ff"/><stop offset="0.7" stop-color="#ff00d9"/><stop offset="0.76" stop-color="#ff00b9"/><stop offset="0.83" stop-color="#ff009b"/><stop offset="0.92" stop-color="#ff007f"/><stop offset="1" stop-color="#ff006a"/></linearGradient>
<linearGradient id="c264" gradientUnits="userSpaceOnUse" x1="1075" y1="0" x2="1353" y2="0"><stop offset="0" stop-color="#0036ff"/><stop offset="0.22" stop-color="#0020ff"/><stop offset="0.35" stop-color="#3f11ff"/><stop offset="0.46" stop-color="#7f02ff"/><stop offset="0.49" stop-color="#8e00ff"/><stop offset="0.59" stop-color="#d000ff"/><stop offset="0.65" stop-color="#fe00ff"/><stop offset="0.71" stop-color="#ff00d8"/><stop offset="0.77" stop-color="#ff00b8"/><stop offset="0.85" stop-color="#ff009a"/><stop offset="0.94" stop-color="#ff007d"/><stop offset="1" stop-color="#ff006f"/></linearGradient>
<linearGradient id="c265" gradientUnits="userSpaceOnUse" x1="1076" y1="0" x2="1347" y2="0"><stop offset="0" stop-color="#0033ff"/><stop offset="0.22" stop-color="#001eff"/><stop offset="0.34" stop-color="#3a10ff"/><stop offset="0.46" stop-color="#7901ff"/><stop offset="0.51" stop-color="#9800ff"/><stop offset="0.61" stop-color="#da00ff"/><stop offset="0.66" stop-color="#fe00ff"/><stop offset="0.69" stop-color="#ff00f1"/><stop offset="0.74" stop-color="#ff00d0"/><stop offset="0.81" stop-color="#ff00b1"/><stop offset="0.89" stop-color="#ff0093"/><stop offset="0.99" stop-color="#ff0077"/><stop offset="1" stop-color="#ff0075"/></linearGradient>
<linearGradient id="c266" gradientUnits="userSpaceOnUse" x1="1077" y1="0" x2="1342" y2="0"><stop offset="0" stop-color="#0031ff"/><stop offset="0.22" stop-color="#011cff"/><stop offset="0.35" stop-color="#3e0dff"/><stop offset="0.46" stop-color="#7a00ff"/><stop offset="0.57" stop-color="#ba00ff"/><stop offset="0.68" stop-color="#fe00ff"/><stop offset="0.69" stop-color="#ff00f9"/><stop offset="0.74" stop-color="#ff00d7"/><stop offset="0.81" stop-color="#ff00b6"/><stop offset="0.89" stop-color="#ff0099"/><stop offset="0.99" stop-color="#ff007d"/><stop offset="1" stop-color="#ff007a"/></linearGradient>
<linearGradient id="c267" gradientUnits="userSpaceOnUse" x1="1078" y1="0" x2="1336" y2="0"><stop offset="0" stop-color="#002fff"/><stop offset="0.22" stop-color="#001aff"/><stop offset="0.35" stop-color="#3d0cff"/><stop offset="0.45" stop-color="#7000ff"/><stop offset="0.57" stop-color="#b100ff"/><stop offset="0.67" stop-color="#f300ff"/><stop offset="0.69" stop-color="#ff00fe"/><stop offset="0.75" stop-color="#ff00dd"/><stop offset="0.81" stop-color="#ff00bd"/><stop offset="0.9" stop-color="#ff009e"/><stop offset="0.99" stop-color="#ff0082"/><stop offset="1" stop-color="#ff0080"/></linearGradient>
<linearGradient id="c268" gradientUnits="userSpaceOnUse" x1="1079" y1="0" x2="1331" y2="0"><stop offset="0" stop-color="#002cff"/><stop offset="0.21" stop-color="#0019ff"/><stop offset="0.35" stop-color="#3c0aff"/><stop offset="0.44" stop-color="#6900ff"/><stop offset="0.57" stop-color="#aa00ff"/><stop offset="0.68" stop-color="#ee00ff"/><stop offset="0.71" stop-color="#ff00fe"/><stop offset="0.77" stop-color="#ff00dc"/><stop offset="0.83" stop-color="#ff00bc"/><stop offset="0.92" stop-color="#ff009e"/><stop offset="1" stop-color="#ff0086"/></linearGradient>
<linearGradient id="c269" gradientUnits="userSpaceOnUse" x1="1080" y1="0" x2="1326" y2="0"><stop offset="0" stop-color="#002aff"/><stop offset="0.21" stop-color="#0017ff"/><stop offset="0.33" stop-color="#320aff"/><stop offset="0.43" stop-color="#5f00ff"/><stop offset="0.56" stop-color="#a000ff"/><stop offset="0.67" stop-color="#e100ff"/><stop offset="0.72" stop-color="#ff00ff"/><stop offset="0.78" stop-color="#ff00dc"/><stop offset="0.85" stop-color="#ff00bb"/><stop offset="0.94" stop-color="#ff009d"/><stop offset="1" stop-color="#ff008c"/></linearGradient>
<linearGradient id="c270" gradientUnits="userSpaceOnUse" x1="1081" y1="0" x2="1320" y2="0"><stop offset="0" stop-color="#0028ff"/><stop offset="0.21" stop-color="#0115ff"/><stop offset="0.36" stop-color="#3e06ff"/><stop offset="0.42" stop-color="#5800ff"/><stop offset="0.56" stop-color="#9900ff"/><stop offset="0.68" stop-color="#dc00ff"/><stop offset="0.74" stop-color="#ff00ff"/><stop offset="0.8" stop-color="#ff00dd"/><stop offset="0.87" stop-color="#ff00bc"/><stop offset="0.96" stop-color="#ff009e"/><stop offset="1" stop-color="#ff0093"/></linearGradient>
<linearGradient id="c271" gradientUnits="userSpaceOnUse" x1="1082" y1="0" x2="1315" y2="0"><stop offset="0" stop-color="#0025ff"/><stop offset="0.21" stop-color="#0013ff"/><stop offset="0.36" stop-color="#3d04ff"/><stop offset="0.41" stop-color="#5100ff"/><stop offset="0.55" stop-color="#9100ff"/><stop offset="0.67" stop-color="#d200ff"/><stop offset="0.75" stop-color="#ff00ff"/><stop offset="0.82" stop-color="#ff00db"/><stop offset="0.9" stop-color="#ff00bb"/><stop offset="0.99" stop-color="#ff009c"/><stop offset="1" stop-color="#ff0099"/></linearGradient>
<linearGradient id="c272" gradientUnits="userSpaceOnUse" x1="1083" y1="0" x2="1310" y2="0"><stop offset="0" stop-color="#0023ff"/><stop offset="0.21" stop-color="#0012ff"/><stop offset="0.35" stop-color="#3504ff"/><stop offset="0.4" stop-color="#4900ff"/><stop offset="0.54" stop-color="#8900ff"/><stop offset="0.67" stop-color="#cb00ff"/><stop offset="0.77" stop-color="#fe00ff"/><stop offset="0.84" stop-color="#ff00d9"/><stop offset="0.92" stop-color="#ff00ba"/><stop offset="1" stop-color="#ff00a0"/></linearGradient>
<linearGradient id="c273" gradientUnits="userSpaceOnUse" x1="1084" y1="0" x2="1304" y2="0"><stop offset="0" stop-color="#0021ff"/><stop offset="0.21" stop-color="#010fff"/><stop offset="0.38" stop-color="#3f00ff"/><stop offset="0.53" stop-color="#7f00ff"/><stop offset="0.67" stop-color="#c200ff"/><stop offset="0.79" stop-color="#fe00ff"/><stop offset="0.87" stop-color="#ff00d8"/><stop offset="0.95" stop-color="#ff00b9"/><stop offset="1" stop-color="#ff00a9"/></linearGradient>
<linearGradient id="c274" gradientUnits="userSpaceOnUse" x1="1085" y1="0" x2="1299" y2="0"><stop offset="0" stop-color="#001eff"/><stop offset="0.21" stop-color="#000eff"/><stop offset="0.37" stop-color="#3a00ff"/><stop offset="0.53" stop-color="#7a00ff"/><stop offset="0.67" stop-color="#bb00ff"/><stop offset="0.8" stop-color="#fe00ff"/><stop offset="0.83" stop-color="#ff00f4"/><stop offset="0.9" stop-color="#ff00d3"/><stop offset="0.99" stop-color="#ff00b3"/><stop offset="1" stop-color="#ff00b0"/></linearGradient>
<linearGradient id="c275" gradientUnits="userSpaceOnUse" x1="1086" y1="0" x2="1294" y2="0"><stop offset="0" stop-color="#001cff"/><stop offset="0.2" stop-color="#000cff"/><stop offset="0.35" stop-color="#3200ff"/><stop offset="0.52" stop-color="#7300ff"/><stop offset="0.67" stop-color="#b500ff"/><stop offset="0.81" stop-color="#f900ff"/><stop offset="0.83" stop-color="#ff00fe"/><stop offset="0.9" stop-color="#ff00dd"/><stop offset="0.99" stop-color="#ff00bd"/><stop offset="1" stop-color="#ff00b8"/></linearGradient>
<linearGradient id="c276" gradientUnits="userSpaceOnUse" x1="1087" y1="0" x2="1288" y2="0"><stop offset="0" stop-color="#001aff"/><stop offset="0.2" stop-color="#010aff"/><stop offset="0.34" stop-color="#2c00ff"/><stop offset="0.51" stop-color="#6b00ff"/><stop offset="0.67" stop-color="#ac00ff"/><stop offset="0.82" stop-color="#ef00ff"/><stop offset="0.85" stop-color="#ff00fe"/><stop offset="0.93" stop-color="#ff00dd"/><stop offset="1" stop-color="#ff00c2"/></linearGradient>
<linearGradient id="c277" gradientUnits="userSpaceOnUse" x1="1088" y1="0" x2="1283" y2="0"><stop offset="0" stop-color="#0018ff"/><stop offset="0.2" stop-color="#0009ff"/><stop offset="0.32" stop-color="#2700ff"/><stop offset="0.51" stop-color="#6600ff"/><stop offset="0.67" stop-color="#a600ff"/><stop offset="0.83" stop-color="#ea00ff"/><stop offset="0.87" stop-color="#ff00ff"/><stop offset="0.95" stop-color="#ff00dd"/><stop offset="1" stop-color="#ff00cb"/></linearGradient>
<linearGradient id="c278" gradientUnits="userSpaceOnUse" x1="1089" y1="0" x2="1277" y2="0"><stop offset="0" stop-color="#0015ff"/><stop offset="0.2" stop-color="#0007ff"/><stop offset="0.3" stop-color="#1f00ff"/><stop offset="0.49" stop-color="#5e00ff"/><stop offset="0.67" stop-color="#9e00ff"/><stop offset="0.83" stop-color="#e000ff"/><stop offset="0.9" stop-color="#ff00ff"/><stop offset="0.98" stop-color="#ff00de"/><stop offset="1" stop-color="#ff00d6"/></linearGradient>
<linearGradient id="c279" gradientUnits="userSpaceOnUse" x1="1090" y1="0" x2="1272" y2="0"><stop offset="0" stop-color="#0013ff"/><stop offset="0.2" stop-color="#0105ff"/><stop offset="0.29" stop-color="#1a00ff"/><stop offset="0.49" stop-color="#5900ff"/><stop offset="0.68" stop-color="#9a00ff"/><stop offset="0.85" stop-color="#de00ff"/><stop offset="0.92" stop-color="#ff00ff"/><stop offset="1" stop-color="#ff00e0"/></linearGradient>
<linearGradient id="c280" gradientUnits="userSpaceOnUse" x1="1091" y1="0" x2="1267" y2="0"><stop offset="0" stop-color="#0011ff"/><stop offset="0.19" stop-color="#0004ff"/><stop offset="0.27" stop-color="#1400ff"/><stop offset="0.48" stop-color="#5200ff"/><stop offset="0.67" stop-color="#9300ff"/><stop offset="0.85" stop-color="#d400ff"/><stop offset="0.95" stop-color="#ff00ff"/><stop offset="1" stop-color="#ff00eb"/></linearGradient>
<linearGradient id="c281" gradientUnits="userSpaceOnUse" x1="1093" y1="0" x2="1261" y2="0"><stop offset="0" stop-color="#000eff"/><stop offset="0.18" stop-color="#0003ff"/><stop offset="0.24" stop-color="#0f00ff"/><stop offset="0.47" stop-color="#4e00ff"/><stop offset="0.67" stop-color="#8d00ff"/><stop offset="0.86" stop-color="#d000ff"/><stop offset="0.98" stop-color="#fe00ff"/><stop offset="1" stop-color="#ff00f9"/></linearGradient>
<linearGradient id="c282" gradientUnits="userSpaceOnUse" x1="1094" y1="0" x2="1256" y2="0"><stop offset="0" stop-color="#000cff"/><stop offset="0.19" stop-color="#0101ff"/><stop offset="0.43" stop-color="#3f00ff"/><stop offset="0.64" stop-color="#7e00ff"/><stop offset="0.84" stop-color="#bf00ff"/><stop offset="1" stop-color="#f900ff"/></linearGradient>
<linearGradient id="c283" gradientUnits="userSpaceOnUse" x1="1095" y1="0" x2="1251" y2="0"><stop offset="0" stop-color="#000aff"/><stop offset="0.18" stop-color="#0000ff"/><stop offset="0.43" stop-color="#3e00ff"/><stop offset="0.66" stop-color="#7e00ff"/><stop offset="0.87" stop-color="#c100ff"/><stop offset="1" stop-color="#ed00ff"/></linearGradient>
<linearGradient id="c284" gradientUnits="userSpaceOnUse" x1="1096" y1="0" x2="1245" y2="0"><stop offset="0" stop-color="#0008ff"/><stop offset="0.15" stop-color="#0000ff"/><stop offset="0.17" stop-color="#0000ff"/><stop offset="0.44" stop-color="#3d00ff"/><stop offset="0.68" stop-color="#7d00ff"/><stop offset="0.9" stop-color="#bf00ff"/><stop offset="1" stop-color="#e000ff"/></linearGradient>
<linearGradient id="c285" gradientUnits="userSpaceOnUse" x1="1098" y1="0" x2="1240" y2="0"><stop offset="0" stop-color="#0005ff"/><stop offset="0.12" stop-color="#0000ff"/><stop offset="0.17" stop-color="#0100ff"/><stop offset="0.45" stop-color="#4000ff"/><stop offset="0.7" stop-color="#7f00ff"/><stop offset="0.94" stop-color="#c100ff"/><stop offset="1" stop-color="#d400ff"/></linearGradient>
<linearGradient id="c286" gradientUnits="userSpaceOnUse" x1="1099" y1="0" x2="1235" y2="0"><stop offset="0" stop-color="#0003ff"/><stop offset="0.09" stop-color="#0000ff"/><stop offset="0.16" stop-color="#0100ff"/><stop offset="0.46" stop-color="#3f00ff"/><stop offset="0.72" stop-color="#7e00ff"/><stop offset="0.96" stop-color="#bf00ff"/><stop offset="1" stop-color="#ca00ff"/></linearGradient>
<linearGradient id="c287" gradientUnits="userSpaceOnUse" x1="1100" y1="0" x2="1229" y2="0"><stop offset="0" stop-color="#0001ff"/><stop offset="0.16" stop-color="#0000ff"/><stop offset="0.47" stop-color="#3e00ff"/><stop offset="0.75" stop-color="#7e00ff"/><stop offset="1" stop-color="#bd00ff"/></linearGradient>
<linearGradient id="c288" gradientUnits="userSpaceOnUse" x1="1102" y1="0" x2="1224" y2="0"><stop offset="0" stop-color="#0000ff"/><stop offset="0.14" stop-color="#0000ff"/><stop offset="0.44" stop-color="#3800ff"/><stop offset="0.75" stop-color="#7700ff"/><stop offset="1" stop-color="#b300ff"/></linearGradient>
<linearGradient id="c289" gradientUnits="userSpaceOnUse" x1="1103" y1="0" x2="1219" y2="0"><stop offset="0" stop-color="#0000ff"/><stop offset="0.14" stop-color="#0100ff"/><stop offset="0.49" stop-color="#3f00ff"/><stop offset="0.81" stop-color="#7f00ff"/><stop offset="1" stop-color="#a900ff"/></linearGradient>
<linearGradient id="c290" gradientUnits="userSpaceOnUse" x1="1105" y1="0" x2="1213" y2="0"><stop offset="0" stop-color="#0000ff"/><stop offset="0.12" stop-color="#0000ff"/><stop offset="0.5" stop-color="#3e00ff"/><stop offset="0.84" stop-color="#7e00ff"/><stop offset="1" stop-color="#9e00ff"/></linearGradient>
<linearGradient id="c291" gradientUnits="userSpaceOnUse" x1="1107" y1="0" x2="1208" y2="0"><stop offset="0" stop-color="#0000ff"/><stop offset="0.1" stop-color="#0000ff"/><stop offset="0.49" stop-color="#3a00ff"/><stop offset="0.86" stop-color="#7b00ff"/><stop offset="1" stop-color="#9400ff"/></linearGradient>
<linearGradient id="c292" gradientUnits="userSpaceOnUse" x1="1108" y1="0" x2="1202" y2="0"><stop offset="0" stop-color="#0000ff"/><stop offset="0.1" stop-color="#0100ff"/><stop offset="0.53" stop-color="#3e00ff"/><stop offset="0.94" stop-color="#7f00ff"/><stop offset="1" stop-color="#8a00ff"/></linearGradient>
<linearGradient id="c293" gradientUnits="userSpaceOnUse" x1="1110" y1="0" x2="1197" y2="0"><stop offset="0" stop-color="#0000ff"/><stop offset="0.07" stop-color="#0000ff"/><stop offset="0.55" stop-color="#3f00ff"/><stop offset="0.99" stop-color="#7f00ff"/><stop offset="1" stop-color="#8100ff"/></linearGradient>
<linearGradient id="c294" gradientUnits="userSpaceOnUse" x1="1112" y1="0" x2="1192" y2="0"><stop offset="0" stop-color="#0000ff"/><stop offset="0.05" stop-color="#0100ff"/><stop offset="0.57" stop-color="#4000ff"/><stop offset="1" stop-color="#7800ff"/></linearGradient>
<linearGradient id="c295" gradientUnits="userSpaceOnUse" x1="1115" y1="0" x2="1186" y2="0"><stop offset="0" stop-color="#0100ff"/><stop offset="0.59" stop-color="#3f00ff"/><stop offset="1" stop-color="#6e00ff"/></linearGradient>
<linearGradient id="c296" gradientUnits="userSpaceOnUse" x1="1117" y1="0" x2="1181" y2="0"><stop offset="0" stop-color="#0500ff"/><stop offset="0.66" stop-color="#4300ff"/><stop offset="1" stop-color="#6600ff"/></linearGradient>
<linearGradient id="c297" gradientUnits="userSpaceOnUse" x1="1120" y1="0" x2="1176" y2="0"><stop offset="0" stop-color="#0a00ff"/><stop offset="0.75" stop-color="#4800ff"/><stop offset="1" stop-color="#5f00ff"/></linearGradient>
<linearGradient id="c298" gradientUnits="userSpaceOnUse" x1="1122" y1="0" x2="1170" y2="0"><stop offset="0" stop-color="#0d00ff"/><stop offset="0.88" stop-color="#4c00ff"/><stop offset="1" stop-color="#5500ff"/></linearGradient>
<linearGradient id="c299" gradientUnits="userSpaceOnUse" x1="1125" y1="0" x2="1165" y2="0"><stop offset="0" stop-color="#1200ff"/><stop offset="1" stop-color="#4e00ff"/></linearGradient>
<linearGradient id="c300" gradientUnits="userSpaceOnUse" x1="1128" y1="0" x2="1160" y2="0"><stop offset="0" stop-color="#1800ff"/><stop offset="1" stop-color="#4700ff"/></linearGradient>
<linearGradient id="c301" gradientUnits="userSpaceOnUse" x1="1131" y1="0" x2="1154" y2="0"><stop offset="0" stop-color="#1d00ff"/><stop offset="1" stop-color="#3e00ff"/></linearGradient>
<linearGradient id="c302" gradientUnits="userSpaceOnUse" x1="1134" y1="0" x2="1149" y2="0"><stop offset="0" stop-color="#2100ff"/><stop offset="1" stop-color="#3700ff"/></linearGradient>
<clipPath id="insc"><rect x="1472.7" y="46.5" width="181.4" height="187.8"/></clipPath>
<linearGradient id="c303" gradientUnits="userSpaceOnUse" x1="1471.2" y1="0" x2="1655.6" y2="0"><stop offset="0" stop-color="#b2ff00"/><stop offset="0.7" stop-color="#f6ff00"/><stop offset="0.81" stop-color="#fffe00"/><stop offset="1" stop-color="#ffeb00"/></linearGradient>
<linearGradient id="c304" gradientUnits="userSpaceOnUse" x1="1471.2" y1="0" x2="1655.6" y2="0"><stop offset="0" stop-color="#b2ff00"/><stop offset="0.7" stop-color="#f6ff00"/><stop offset="0.8" stop-color="#fffe00"/><stop offset="1" stop-color="#ffeb00"/></linearGradient>
<linearGradient id="c305" gradientUnits="userSpaceOnUse" x1="1471.2" y1="0" x2="1655.6" y2="0"><stop offset="0" stop-color="#b3ff00"/><stop offset="0.7" stop-color="#f7ff00"/><stop offset="0.79" stop-color="#fffe00"/><stop offset="1" stop-color="#ffea00"/></linearGradient>
<linearGradient id="c306" gradientUnits="userSpaceOnUse" x1="1471.2" y1="0" x2="1655.6" y2="0"><stop offset="0" stop-color="#b4ff00"/><stop offset="0.7" stop-color="#f8ff00"/><stop offset="0.78" stop-color="#fffe00"/><stop offset="1" stop-color="#ffe900"/></linearGradient>
<linearGradient id="c307" gradientUnits="userSpaceOnUse" x1="1471.2" y1="0" x2="1655.6" y2="0"><stop offset="0" stop-color="#b5ff00"/><stop offset="0.69" stop-color="#f8ff00"/><stop offset="0.77" stop-color="#fffe00"/><stop offset="1" stop-color="#ffe800"/></linearGradient>
<linearGradient id="c308" gradientUnits="userSpaceOnUse" x1="1471.2" y1="0" x2="1655.6" y2="0"><stop offset="0" stop-color="#b6ff00"/><stop offset="0.69" stop-color="#f9ff00"/><stop offset="0.76" stop-color="#fffe00"/><stop offset="1" stop-color="#ffe700"/></linearGradient>
<linearGradient id="c309" gradientUnits="userSpaceOnUse" x1="1471.2" y1="0" x2="1655.6" y2="0"><stop offset="0" stop-color="#b6ff00"/><stop offset="0.69" stop-color="#faff00"/><stop offset="0.75" stop-color="#fffe00"/><stop offset="1" stop-color="#ffe600"/></linearGradient>
<linearGradient id="c310" gradientUnits="userSpaceOnUse" x1="1471.2" y1="0" x2="1655.6" y2="0"><stop offset="0" stop-color="#b7ff00"/><stop offset="0.69" stop-color="#fbff00"/><stop offset="0.74" stop-color="#fffe00"/><stop offset="1" stop-color="#ffe500"/></linearGradient>
<linearGradient id="c311" gradientUnits="userSpaceOnUse" x1="1471.2" y1="0" x2="1655.6" y2="0"><stop offset="0" stop-color="#b8ff01"/><stop offset="0.69" stop-color="#fcff00"/><stop offset="0.73" stop-color="#fffe00"/><stop offset="1" stop-color="#ffe400"/></linearGradient>
<linearGradient id="c312" gradientUnits="userSpaceOnUse" x1="1471.2" y1="0" x2="1655.6" y2="0"><stop offset="0" stop-color="#b9ff01"/><stop offset="0.69" stop-color="#fdff00"/><stop offset="0.73" stop-color="#fffd00"/><stop offset="1" stop-color="#ffe300"/></linearGradient>
<linearGradient id="c313" gradientUnits="userSpaceOnUse" x1="1471.2" y1="0" x2="1655.6" y2="0"><stop offset="0" stop-color="#b9ff01"/><stop offset="0.22" stop-color="#cfff00"/><stop offset="0.7" stop-color="#fffe00"/><stop offset="1" stop-color="#ffe200"/></linearGradient>
<linearGradient id="c314" gradientUnits="userSpaceOnUse" x1="1471.2" y1="0" x2="1655.6" y2="0"><stop offset="0" stop-color="#baff02"/><stop offset="0.2" stop-color="#cdff00"/><stop offset="0.7" stop-color="#fffe00"/><stop offset="1" stop-color="#ffe100"/></linearGradient>
<linearGradient id="c315" gradientUnits="userSpaceOnUse" x1="1471.2" y1="0" x2="1655.6" y2="0"><stop offset="0" stop-color="#bbff02"/><stop offset="0.2" stop-color="#ceff00"/><stop offset="0.69" stop-color="#fffe00"/><stop offset="1" stop-color="#ffe100"/></linearGradient>
<linearGradient id="c316" gradientUnits="userSpaceOnUse" x1="1471.2" y1="0" x2="1655.6" y2="0"><stop offset="0" stop-color="#bcff03"/><stop offset="0.2" stop-color="#cfff00"/><stop offset="0.68" stop-color="#fffe00"/><stop offset="1" stop-color="#ffe000"/></linearGradient>
<linearGradient id="c317" gradientUnits="userSpaceOnUse" x1="1471.2" y1="0" x2="1655.6" y2="0"><stop offset="0" stop-color="#bdff03"/><stop offset="0.22" stop-color="#d2ff00"/><stop offset="0.67" stop-color="#fffe00"/><stop offset="1" stop-color="#ffdf00"/></linearGradient>
<linearGradient id="c318" gradientUnits="userSpaceOnUse" x1="1471.2" y1="0" x2="1655.6" y2="0"><stop offset="0" stop-color="#bdff04"/><stop offset="0.23" stop-color="#d4ff00"/><stop offset="0.66" stop-color="#ffff00"/><stop offset="1" stop-color="#ffde00"/></linearGradient>
<linearGradient id="c319" gradientUnits="userSpaceOnUse" x1="1471.2" y1="0" x2="1655.6" y2="0"><stop offset="0" stop-color="#beff04"/><stop offset="0.25" stop-color="#d7ff00"/><stop offset="0.65" stop-color="#fffe00"/><stop offset="1" stop-color="#ffdd00"/></linearGradient>
<linearGradient id="c320" gradientUnits="userSpaceOnUse" x1="1471.2" y1="0" x2="1655.6" y2="0"><stop offset="0" stop-color="#bfff04"/><stop offset="0.27" stop-color="#daff00"/><stop offset="0.64" stop-color="#fffe00"/><stop offset="1" stop-color="#ffdc00"/></linearGradient>
<linearGradient id="c321" gradientUnits="userSpaceOnUse" x1="1471.2" y1="0" x2="1655.6" y2="0"><stop offset="0" stop-color="#c0ff05"/><stop offset="0.29" stop-color="#dcff00"/><stop offset="0.63" stop-color="#fffe00"/><stop offset="0.99" stop-color="#ffdc00"/><stop offset="1" stop-color="#ffdb00"/></linearGradient>
<linearGradient id="c322" gradientUnits="userSpaceOnUse" x1="1471.2" y1="0" x2="1655.6" y2="0"><stop offset="0" stop-color="#c1ff05"/><stop offset="0.3" stop-color="#dfff00"/><stop offset="0.62" stop-color="#fffe00"/><stop offset="0.98" stop-color="#ffdc00"/><stop offset="1" stop-color="#ffda00"/></linearGradient>
<linearGradient id="c323" gradientUnits="userSpaceOnUse" x1="1471.2" y1="0" x2="1655.6" y2="0"><stop offset="0" stop-color="#c2ff06"/><stop offset="0.33" stop-color="#e2ff00"/><stop offset="0.61" stop-color="#fffe00"/><stop offset="0.98" stop-color="#ffdb00"/><stop offset="1" stop-color="#ffda00"/></linearGradient>
<linearGradient id="c324" gradientUnits="userSpaceOnUse" x1="1471.2" y1="0" x2="1655.6" y2="0"><stop offset="0" stop-color="#c2ff06"/><stop offset="0.35" stop-color="#e5ff00"/><stop offset="0.6" stop-color="#fffe00"/><stop offset="0.97" stop-color="#ffdb00"/><stop offset="1" stop-color="#ffd900"/></linearGradient>
<linearGradient id="c325" gradientUnits="userSpaceOnUse" x1="1471.2" y1="0" x2="1655.6" y2="0"><stop offset="0" stop-color="#c3ff07"/><stop offset="0.36" stop-color="#e8ff00"/><stop offset="0.59" stop-color="#fffe00"/><stop offset="0.95" stop-color="#ffdb00"/><stop offset="1" stop-color="#ffd800"/></linearGradient>
<linearGradient id="c326" gradientUnits="userSpaceOnUse" x1="1471.2" y1="0" x2="1655.6" y2="0"><stop offset="0" stop-color="#c4ff07"/><stop offset="0.39" stop-color="#ebff00"/><stop offset="0.58" stop-color="#fffe00"/><stop offset="0.94" stop-color="#ffdc00"/><stop offset="1" stop-color="#ffd700"/></linearGradient>
<linearGradient id="c327" gradientUnits="userSpaceOnUse" x1="1471.2" y1="0" x2="1655.6" y2="0"><stop offset="0" stop-color="#c5ff08"/><stop offset="0.4" stop-color="#eeff00"/><stop offset="0.57" stop-color="#fffe00"/><stop offset="0.93" stop-color="#ffdc00"/><stop offset="1" stop-color="#ffd600"/></linearGradient>
<linearGradient id="c328" gradientUnits="userSpaceOnUse" x1="1471.2" y1="0" x2="1655.6" y2="0"><stop offset="0" stop-color="#c6ff08"/><stop offset="0.42" stop-color="#f1ff00"/><stop offset="0.56" stop-color="#fffe00"/><stop offset="0.93" stop-color="#ffdb00"/><stop offset="1" stop-color="#ffd500"/></linearGradient>
<linearGradient id="c329" gradientUnits="userSpaceOnUse" x1="1471.2" y1="0" x2="1655.6" y2="0"><stop offset="0" stop-color="#c7ff09"/><stop offset="0.44" stop-color="#f4ff00"/><stop offset="0.55" stop-color="#fffe00"/><stop offset="0.92" stop-color="#ffdb00"/><stop offset="1" stop-color="#ffd400"/></linearGradient>
<linearGradient id="c330" gradientUnits="userSpaceOnUse" x1="1471.2" y1="0" x2="1655.6" y2="0"><stop offset="0" stop-color="#c8ff09"/><stop offset="0.46" stop-color="#f7ff00"/><stop offset="0.54" stop-color="#fffe00"/><stop offset="0.9" stop-color="#ffdc00"/><stop offset="1" stop-color="#ffd400"/></linearGradient>
<linearGradient id="c331" gradientUnits="userSpaceOnUse" x1="1471.2" y1="0" x2="1655.6" y2="0"><stop offset="0" stop-color="#c8ff09"/><stop offset="0.48" stop-color="#faff00"/><stop offset="0.54" stop-color="#fffe00"/><stop offset="0.89" stop-color="#ffdb00"/><stop offset="1" stop-color="#ffd300"/></linearGradient>
<linearGradient id="c332" gradientUnits="userSpaceOnUse" x1="1471.2" y1="0" x2="1655.6" y2="0"><stop offset="0" stop-color="#c9ff0a"/><stop offset="0.5" stop-color="#fdff00"/><stop offset="0.54" stop-color="#fffd00"/><stop offset="0.9" stop-color="#ffda00"/><stop offset="1" stop-color="#ffd200"/></linearGradient>
<linearGradient id="c333" gradientUnits="userSpaceOnUse" x1="1471.2" y1="0" x2="1655.6" y2="0"><stop offset="0" stop-color="#caff0a"/><stop offset="0.52" stop-color="#fffe00"/><stop offset="0.87" stop-color="#ffdb00"/><stop offset="1" stop-color="#ffd100"/></linearGradient>
<linearGradient id="c334" gradientUnits="userSpaceOnUse" x1="1471.2" y1="0" x2="1655.6" y2="0"><stop offset="0" stop-color="#cbff0b"/><stop offset="0.5" stop-color="#fffe00"/><stop offset="0.86" stop-color="#ffdb00"/><stop offset="1" stop-color="#ffd000"/></linearGradient>
<linearGradient id="c335" gradientUnits="userSpaceOnUse" x1="1471.2" y1="0" x2="1655.6" y2="0"><stop offset="0" stop-color="#ccff0b"/><stop offset="0.49" stop-color="#fffe00"/><stop offset="0.85" stop-color="#ffdb00"/><stop offset="1" stop-color="#ffcf00"/></linearGradient>
<linearGradient id="c336" gradientUnits="userSpaceOnUse" x1="1471.2" y1="0" x2="1655.6" y2="0"><stop offset="0" stop-color="#cdff0c"/><stop offset="0.48" stop-color="#fffe01"/><stop offset="0.84" stop-color="#ffdc00"/><stop offset="1" stop-color="#ffce00"/></linearGradient>
<linearGradient id="c337" gradientUnits="userSpaceOnUse" x1="1471.2" y1="0" x2="1655.6" y2="0"><stop offset="0" stop-color="#ceff0c"/><stop offset="0.47" stop-color="#ffff02"/><stop offset="0.65" stop-color="#ffed00"/><stop offset="1" stop-color="#ffce00"/></linearGradient>
<linearGradient id="c338" gradientUnits="userSpaceOnUse" x1="1471.2" y1="0" x2="1655.6" y2="0"><stop offset="0" stop-color="#cfff0d"/><stop offset="0.47" stop-color="#fffe02"/><stop offset="0.65" stop-color="#ffec00"/><stop offset="1" stop-color="#ffcd00"/></linearGradient>
<linearGradient id="c339" gradientUnits="userSpaceOnUse" x1="1471.2" y1="0" x2="1655.6" y2="0"><stop offset="0" stop-color="#d0ff0d"/><stop offset="0.46" stop-color="#fffe03"/><stop offset="0.66" stop-color="#ffea00"/><stop offset="1" stop-color="#ffcc00"/></linearGradient>
<linearGradient id="c340" gradientUnits="userSpaceOnUse" x1="1471.2" y1="0" x2="1655.6" y2="0"><stop offset="0" stop-color="#d0ff0e"/><stop offset="0.44" stop-color="#fffe04"/><stop offset="0.67" stop-color="#ffe800"/><stop offset="1" stop-color="#ffcb00"/></linearGradient>
<linearGradient id="c341" gradientUnits="userSpaceOnUse" x1="1471.2" y1="0" x2="1655.6" y2="0"><stop offset="0" stop-color="#d1ff0e"/><stop offset="0.43" stop-color="#fffe05"/><stop offset="0.69" stop-color="#ffe500"/><stop offset="1" stop-color="#ffca00"/></linearGradient>
<linearGradient id="c342" gradientUnits="userSpaceOnUse" x1="1471.2" y1="0" x2="1655.6" y2="0"><stop offset="0" stop-color="#d2ff0f"/><stop offset="0.43" stop-color="#fffe05"/><stop offset="0.7" stop-color="#ffe200"/><stop offset="1" stop-color="#ffc900"/></linearGradient>
<linearGradient id="c343" gradientUnits="userSpaceOnUse" x1="1471.2" y1="0" x2="1655.6" y2="0"><stop offset="0" stop-color="#d3ff0f"/><stop offset="0.42" stop-color="#fffe06"/><stop offset="0.72" stop-color="#ffe000"/><stop offset="1" stop-color="#ffc900"/></linearGradient>
<linearGradient id="c344" gradientUnits="userSpaceOnUse" x1="1471.2" y1="0" x2="1655.6" y2="0"><stop offset="0" stop-color="#d4ff10"/><stop offset="0.41" stop-color="#fffe07"/><stop offset="0.74" stop-color="#ffdd00"/><stop offset="1" stop-color="#ffc800"/></linearGradient>
<linearGradient id="c345" gradientUnits="userSpaceOnUse" x1="1471.2" y1="0" x2="1655.6" y2="0"><stop offset="0" stop-color="#d5ff10"/><stop offset="0.4" stop-color="#fffe07"/><stop offset="0.75" stop-color="#ffdb00"/><stop offset="1" stop-color="#ffc700"/></linearGradient>
<linearGradient id="c346" gradientUnits="userSpaceOnUse" x1="1471.2" y1="0" x2="1655.6" y2="0"><stop offset="0" stop-color="#d6ff11"/><stop offset="0.39" stop-color="#fffe08"/><stop offset="0.73" stop-color="#ffdc00"/><stop offset="1" stop-color="#ffc600"/></linearGradient>
<linearGradient id="c347" gradientUnits="userSpaceOnUse" x1="1471.2" y1="0" x2="1655.6" y2="0"><stop offset="0" stop-color="#d7ff11"/><stop offset="0.38" stop-color="#fffe09"/><stop offset="0.73" stop-color="#ffdc01"/><stop offset="1" stop-color="#ffc500"/></linearGradient>
<linearGradient id="c348" gradientUnits="userSpaceOnUse" x1="1471.2" y1="0" x2="1655.6" y2="0"><stop offset="0" stop-color="#d8ff12"/><stop offset="0.37" stop-color="#fffe0a"/><stop offset="0.72" stop-color="#ffdc01"/><stop offset="1" stop-color="#ffc400"/></linearGradient>
<linearGradient id="c349" gradientUnits="userSpaceOnUse" x1="1471.2" y1="0" x2="1655.6" y2="0"><stop offset="0" stop-color="#d9ff12"/><stop offset="0.36" stop-color="#fffe0a"/><stop offset="0.7" stop-color="#ffdc02"/><stop offset="0.89" stop-color="#ffcc00"/><stop offset="1" stop-color="#ffc400"/></linearGradient>
<linearGradient id="c350" gradientUnits="userSpaceOnUse" x1="1471.2" y1="0" x2="1655.6" y2="0"><stop offset="0" stop-color="#daff13"/><stop offset="0.35" stop-color="#fffe0b"/><stop offset="0.69" stop-color="#ffdc03"/><stop offset="0.89" stop-color="#ffcb00"/><stop offset="1" stop-color="#ffc300"/></linearGradient>
<linearGradient id="c351" gradientUnits="userSpaceOnUse" x1="1471.2" y1="0" x2="1655.6" y2="0"><stop offset="0" stop-color="#dbff13"/><stop offset="0.34" stop-color="#ffff0c"/><stop offset="0.68" stop-color="#ffdc03"/><stop offset="0.9" stop-color="#ffca00"/><stop offset="1" stop-color="#ffc200"/></linearGradient>
<linearGradient id="c352" gradientUnits="userSpaceOnUse" x1="1471.2" y1="0" x2="1655.6" y2="0"><stop offset="0" stop-color="#dcff14"/><stop offset="0.33" stop-color="#fffe0c"/><stop offset="0.68" stop-color="#ffdb04"/><stop offset="0.92" stop-color="#ffc700"/><stop offset="1" stop-color="#ffc100"/></linearGradient>
<linearGradient id="c353" gradientUnits="userSpaceOnUse" x1="1471.2" y1="0" x2="1655.6" y2="0"><stop offset="0" stop-color="#ddff14"/><stop offset="0.32" stop-color="#fffe0d"/><stop offset="0.67" stop-color="#ffdb04"/><stop offset="0.93" stop-color="#ffc500"/><stop offset="1" stop-color="#ffc000"/></linearGradient>
<linearGradient id="c354" gradientUnits="userSpaceOnUse" x1="1471.2" y1="0" x2="1655.6" y2="0"><stop offset="0" stop-color="#deff15"/><stop offset="0.31" stop-color="#fffe0e"/><stop offset="0.66" stop-color="#ffdb05"/><stop offset="0.95" stop-color="#ffc300"/><stop offset="1" stop-color="#ffc000"/></linearGradient>
<linearGradient id="c355" gradientUnits="userSpaceOnUse" x1="1471.2" y1="0" x2="1655.6" y2="0"><stop offset="0" stop-color="#dfff15"/><stop offset="0.3" stop-color="#fffe0f"/><stop offset="0.64" stop-color="#ffdc06"/><stop offset="0.97" stop-color="#ffc100"/><stop offset="1" stop-color="#ffbf00"/></linearGradient>
<linearGradient id="c356" gradientUnits="userSpaceOnUse" x1="1471.2" y1="0" x2="1655.6" y2="0"><stop offset="0" stop-color="#e0ff16"/><stop offset="0.29" stop-color="#ffff10"/><stop offset="0.63" stop-color="#ffdc07"/><stop offset="0.99" stop-color="#ffbf00"/><stop offset="1" stop-color="#ffbe00"/></linearGradient>
<linearGradient id="c357" gradientUnits="userSpaceOnUse" x1="1471.2" y1="0" x2="1655.6" y2="0"><stop offset="0" stop-color="#e1ff16"/><stop offset="0.28" stop-color="#fffe10"/><stop offset="0.62" stop-color="#ffdc07"/><stop offset="1" stop-color="#ffbd00"/></linearGradient>
<linearGradient id="c358" gradientUnits="userSpaceOnUse" x1="1471.2" y1="0" x2="1655.6" y2="0"><stop offset="0" stop-color="#e2ff17"/><stop offset="0.27" stop-color="#fffe11"/><stop offset="0.61" stop-color="#ffdc08"/><stop offset="1" stop-color="#ffbc00"/></linearGradient>
<linearGradient id="c359" gradientUnits="userSpaceOnUse" x1="1471.2" y1="0" x2="1655.6" y2="0"><stop offset="0" stop-color="#e3ff17"/><stop offset="0.26" stop-color="#fffe12"/><stop offset="0.6" stop-color="#ffdc08"/><stop offset="1" stop-color="#ffbc00"/></linearGradient>
<linearGradient id="c360" gradientUnits="userSpaceOnUse" x1="1471.2" y1="0" x2="1655.6" y2="0"><stop offset="0" stop-color="#e4ff18"/><stop offset="0.25" stop-color="#fffe13"/><stop offset="0.59" stop-color="#ffdc09"/><stop offset="1" stop-color="#ffbb00"/></linearGradient>
<linearGradient id="c361" gradientUnits="userSpaceOnUse" x1="1471.2" y1="0" x2="1655.6" y2="0"><stop offset="0" stop-color="#e5ff19"/><stop offset="0.24" stop-color="#fffe13"/><stop offset="0.59" stop-color="#ffdb0a"/><stop offset="0.99" stop-color="#ffba01"/><stop offset="1" stop-color="#ffba01"/></linearGradient>
<linearGradient id="c362" gradientUnits="userSpaceOnUse" x1="1471.2" y1="0" x2="1655.6" y2="0"><stop offset="0" stop-color="#e6ff19"/><stop offset="0.23" stop-color="#fffe14"/><stop offset="0.57" stop-color="#ffdb0a"/><stop offset="0.98" stop-color="#ffba01"/><stop offset="1" stop-color="#ffb901"/></linearGradient>
<linearGradient id="c363" gradientUnits="userSpaceOnUse" x1="1471.2" y1="0" x2="1655.6" y2="0"><stop offset="0" stop-color="#e7ff1a"/><stop offset="0.22" stop-color="#fffe15"/><stop offset="0.56" stop-color="#ffdb0b"/><stop offset="0.97" stop-color="#ffba02"/><stop offset="1" stop-color="#ffb802"/></linearGradient>
<linearGradient id="c364" gradientUnits="userSpaceOnUse" x1="1471.2" y1="0" x2="1655.6" y2="0"><stop offset="0" stop-color="#e8ff1a"/><stop offset="0.21" stop-color="#fffe16"/><stop offset="0.55" stop-color="#ffdc0c"/><stop offset="0.95" stop-color="#ffbb03"/><stop offset="1" stop-color="#ffb802"/></linearGradient>
<linearGradient id="c365" gradientUnits="userSpaceOnUse" x1="1471.2" y1="0" x2="1655.6" y2="0"><stop offset="0" stop-color="#e9ff1b"/><stop offset="0.2" stop-color="#ffff16"/><stop offset="0.54" stop-color="#ffdc0d"/><stop offset="0.94" stop-color="#ffbb03"/><stop offset="1" stop-color="#ffb702"/></linearGradient>
<linearGradient id="c366" gradientUnits="userSpaceOnUse" x1="1471.2" y1="0" x2="1655.6" y2="0"><stop offset="0" stop-color="#eaff1b"/><stop offset="0.2" stop-color="#fffe17"/><stop offset="0.53" stop-color="#ffdc0d"/><stop offset="0.93" stop-color="#ffbb04"/><stop offset="1" stop-color="#ffb603"/></linearGradient>
</defs>
<rect width="1667" height="841" fill="#333333"/>
<rect width="1667" height="1.2" fill="#2c2c2c"/>
<text x="21" y="60.2" font-size="40.8" textLength="181.5" lengthAdjust="spacingAndGlyphs" fill="#f0f0f0">Saturation</text>
<text x="213.5" y="60.2" font-size="40.8" textLength="134" lengthAdjust="spacingAndGlyphs" fill="#f0f0f0">Sweeps</text>
<rect x="44.5" y="130" width="254" height="461" fill="#242424"/>
<rect x="44.5" y="131.3" width="254" height="1.4" fill="#8a8a8a"/>
<rect x="39.5" y="131.3" width="5" height="1.4" fill="#e0e0e0"/>
<text x="38.8" y="137.5" font-size="15.5" text-anchor="end" textLength="16.03" lengthAdjust="spacingAndGlyphs" fill="#e2e2e2">50</text>
<rect x="44.5" y="177.3" width="254" height="1.4" fill="#8a8a8a"/>
<rect x="39.5" y="177.3" width="5" height="1.4" fill="#e0e0e0"/>
<text x="38.8" y="183.5" font-size="15.5" text-anchor="end" textLength="16.03" lengthAdjust="spacingAndGlyphs" fill="#e2e2e2">40</text>
<rect x="44.5" y="223.1" width="254" height="1.4" fill="#8a8a8a"/>
<rect x="39.5" y="223.1" width="5" height="1.4" fill="#e0e0e0"/>
<text x="38.8" y="229.3" font-size="15.5" text-anchor="end" textLength="16.03" lengthAdjust="spacingAndGlyphs" fill="#e2e2e2">30</text>
<rect x="44.5" y="269.5" width="254" height="1.4" fill="#8a8a8a"/>
<rect x="39.5" y="269.5" width="5" height="1.4" fill="#e0e0e0"/>
<text x="38.8" y="275.7" font-size="15.5" text-anchor="end" textLength="16.03" lengthAdjust="spacingAndGlyphs" fill="#e2e2e2">20</text>
<rect x="44.5" y="315.1" width="254" height="1.4" fill="#8a8a8a"/>
<rect x="39.5" y="315.1" width="5" height="1.4" fill="#e0e0e0"/>
<text x="38.8" y="321.3" font-size="15.5" text-anchor="end" textLength="16.03" lengthAdjust="spacingAndGlyphs" fill="#e2e2e2">10</text>
<rect x="44.5" y="361.3" width="254" height="1.4" fill="#8a8a8a"/>
<rect x="39.5" y="361.3" width="5" height="1.4" fill="#e0e0e0"/>
<text x="38.8" y="367.5" font-size="15.5" text-anchor="end" textLength="8.02" lengthAdjust="spacingAndGlyphs" fill="#e2e2e2">0</text>
<rect x="44.5" y="406.7" width="254" height="1.4" fill="#8a8a8a"/>
<rect x="39.5" y="406.7" width="5" height="1.4" fill="#e0e0e0"/>
<text x="38.8" y="412.9" font-size="15.5" text-anchor="end" textLength="20.83" lengthAdjust="spacingAndGlyphs" fill="#e2e2e2">-10</text>
<rect x="44.5" y="452.8" width="254" height="1.4" fill="#8a8a8a"/>
<rect x="39.5" y="452.8" width="5" height="1.4" fill="#e0e0e0"/>
<text x="38.8" y="459" font-size="15.5" text-anchor="end" textLength="20.83" lengthAdjust="spacingAndGlyphs" fill="#e2e2e2">-20</text>
<rect x="44.5" y="499" width="254" height="1.4" fill="#8a8a8a"/>
<rect x="39.5" y="499" width="5" height="1.4" fill="#e0e0e0"/>
<text x="38.8" y="505.2" font-size="15.5" text-anchor="end" textLength="20.83" lengthAdjust="spacingAndGlyphs" fill="#e2e2e2">-30</text>
<rect x="44.5" y="545.5" width="254" height="1.4" fill="#8a8a8a"/>
<rect x="39.5" y="545.5" width="5" height="1.4" fill="#e0e0e0"/>
<text x="38.8" y="551.7" font-size="15.5" text-anchor="end" textLength="20.83" lengthAdjust="spacingAndGlyphs" fill="#e2e2e2">-40</text>
<rect x="44.5" y="589.7" width="254" height="1.4" fill="#8a8a8a"/>
<rect x="39.5" y="589.7" width="5" height="1.4" fill="#e0e0e0"/>
<text x="38.8" y="595.9" font-size="15.5" text-anchor="end" textLength="20.83" lengthAdjust="spacingAndGlyphs" fill="#e2e2e2">-50</text>
<rect x="43.5" y="129.7" width="255.5" height="1.2" fill="#a0a0a0"/>
<rect x="43.7" y="130" width="1.6" height="466.5" fill="#a0a0a0"/>
<rect x="297.7" y="130" width="1.6" height="466.5" fill="#a0a0a0"/>
<text x="158.3" y="125.7" font-size="15.4" text-anchor="middle" textLength="84" lengthAdjust="spacingAndGlyphs" fill="#e2e2e2">RGB Balance</text>
<text x="171.5" y="606.7" font-size="15.5" text-anchor="middle" textLength="36.87" lengthAdjust="spacingAndGlyphs" fill="#e2e2e2">100%</text>
<rect x="70.5" y="360.8" width="67.5" height="38" fill="#000"/>
<rect x="72.1" y="362.4" width="64.3" height="34.8" fill="url(#l1)"/>
<rect x="138" y="360.8" width="68" height="61" fill="#000"/>
<rect x="139.6" y="362.4" width="64.8" height="57.8" fill="url(#l2)"/>
<rect x="206" y="170.3" width="68.3" height="191.7" fill="#000"/>
<rect x="207.6" y="171.9" width="65.1" height="188.5" fill="url(#l3)"/>
<text x="11.2" y="649.9" font-size="29.8" textLength="104" lengthAdjust="spacingAndGlyphs" fill="#f0f0f0">Current</text>
<text x="123.5" y="649.9" font-size="29.8" textLength="108.5" lengthAdjust="spacingAndGlyphs" fill="#f0f0f0">Reading</text>
<text x="11.8" y="692.9" font-size="23.6" textLength="18.5" lengthAdjust="spacingAndGlyphs" fill="#f0f0f0">x:</text>
<text x="37.3" y="692.9" font-size="23.6" textLength="77.5" lengthAdjust="spacingAndGlyphs" fill="#f0f0f0">0,4173</text>
<text x="11.8" y="734.6" font-size="23.6" textLength="18.5" lengthAdjust="spacingAndGlyphs" fill="#f0f0f0">y:</text>
<text x="37.3" y="734.6" font-size="23.6" textLength="77.5" lengthAdjust="spacingAndGlyphs" fill="#f0f0f0">0,4913</text>
<text x="11.8" y="776.6" font-size="23.6" textLength="27" lengthAdjust="spacingAndGlyphs" fill="#f0f0f0">fL:</text>
<text x="45.4" y="776.6" font-size="23.6" textLength="77.2" lengthAdjust="spacingAndGlyphs" fill="#f0f0f0">36,453</text>
<text x="11.8" y="818.5" font-size="23.6" textLength="76" lengthAdjust="spacingAndGlyphs" fill="#f0f0f0">cd/m²:</text>
<text x="94.6" y="818.5" font-size="23.6" textLength="91.6" lengthAdjust="spacingAndGlyphs" fill="#f0f0f0">124,898</text>
<rect x="398.5" y="46.5" width="138.2" height="278" fill="#242424"/>
<rect x="398.5" y="47.5" width="138.2" height="1.4" fill="#8a8a8a"/>
<rect x="393.5" y="47.5" width="5" height="1.4" fill="#e0e0e0"/>
<text x="392.8" y="53.7" font-size="15.5" text-anchor="end" textLength="16.03" lengthAdjust="spacingAndGlyphs" fill="#e2e2e2">15</text>
<rect x="398.5" y="93.7" width="138.2" height="1.4" fill="#8a8a8a"/>
<rect x="393.5" y="93.7" width="5" height="1.4" fill="#e0e0e0"/>
<text x="392.8" y="99.9" font-size="15.5" text-anchor="end" textLength="16.03" lengthAdjust="spacingAndGlyphs" fill="#e2e2e2">10</text>
<rect x="398.5" y="140.5" width="138.2" height="1.4" fill="#8a8a8a"/>
<rect x="393.5" y="140.5" width="5" height="1.4" fill="#e0e0e0"/>
<text x="392.8" y="146.7" font-size="15.5" text-anchor="end" textLength="8.02" lengthAdjust="spacingAndGlyphs" fill="#e2e2e2">5</text>
<rect x="398.5" y="186.4" width="138.2" height="1.4" fill="#8a8a8a"/>
<rect x="393.5" y="186.4" width="5" height="1.4" fill="#e0e0e0"/>
<text x="392.8" y="192.6" font-size="15.5" text-anchor="end" textLength="8.02" lengthAdjust="spacingAndGlyphs" fill="#e2e2e2">0</text>
<rect x="398.5" y="232.7" width="138.2" height="1.4" fill="#8a8a8a"/>
<rect x="393.5" y="232.7" width="5" height="1.4" fill="#e0e0e0"/>
<text x="392.8" y="238.9" font-size="15.5" text-anchor="end" textLength="12.82" lengthAdjust="spacingAndGlyphs" fill="#e2e2e2">-5</text>
<rect x="398.5" y="278.5" width="138.2" height="1.4" fill="#8a8a8a"/>
<rect x="393.5" y="278.5" width="5" height="1.4" fill="#e0e0e0"/>
<text x="392.8" y="284.7" font-size="15.5" text-anchor="end" textLength="20.83" lengthAdjust="spacingAndGlyphs" fill="#e2e2e2">-10</text>
<rect x="398.5" y="323.6" width="138.2" height="1.4" fill="#8a8a8a"/>
<rect x="393.5" y="323.6" width="5" height="1.4" fill="#e0e0e0"/>
<text x="392.8" y="329.8" font-size="15.5" text-anchor="end" textLength="20.83" lengthAdjust="spacingAndGlyphs" fill="#e2e2e2">-15</text>
<rect x="397.5" y="46" width="139.7" height="1.2" fill="#a0a0a0"/>
<rect x="397.7" y="46.5" width="1.6" height="284" fill="#a0a0a0"/>
<rect x="535.9" y="46.5" width="1.6" height="284" fill="#a0a0a0"/>
<rect x="412.2" y="185" width="109.7" height="35.7" fill="#000"/>
<rect x="413.5" y="186.3" width="107.1" height="33.1" fill="url(#l4)"/>
<rect x="398.5" y="91.45" width="138.2" height="1.8" fill="#e81c1c"/>
<rect x="398.5" y="277.75" width="138.2" height="1.8" fill="#e81c1c"/>
<rect x="398.5" y="156.86" width="138.2" height="1.4" fill="#f0f000"/>
<rect x="398.5" y="212.75" width="138.2" height="1.4" fill="#f0f000"/>
<rect x="398.5" y="175.28" width="138.2" height="1.8" fill="#0f7a0f"/>
<rect x="398.5" y="193.91" width="138.2" height="1.8" fill="#0f7a0f"/>
<text x="454.3" y="41.7" font-size="15.4" text-anchor="middle" textLength="42" lengthAdjust="spacingAndGlyphs" fill="#e2e2e2">DeltaL</text>
<text x="468.3" y="341.2" font-size="15.5" text-anchor="middle" textLength="36.87" lengthAdjust="spacingAndGlyphs" fill="#e2e2e2">100%</text>
<rect x="589" y="46.5" width="138.2" height="278" fill="#242424"/>
<rect x="589" y="47.5" width="138.2" height="1.4" fill="#8a8a8a"/>
<rect x="584" y="47.5" width="5" height="1.4" fill="#e0e0e0"/>
<text x="583.3" y="53.7" font-size="15.5" text-anchor="end" textLength="16.03" lengthAdjust="spacingAndGlyphs" fill="#e2e2e2">15</text>
<rect x="589" y="93.7" width="138.2" height="1.4" fill="#8a8a8a"/>
<rect x="584" y="93.7" width="5" height="1.4" fill="#e0e0e0"/>
<text x="583.3" y="99.9" font-size="15.5" text-anchor="end" textLength="16.03" lengthAdjust="spacingAndGlyphs" fill="#e2e2e2">10</text>
<rect x="589" y="140.5" width="138.2" height="1.4" fill="#8a8a8a"/>
<rect x="584" y="140.5" width="5" height="1.4" fill="#e0e0e0"/>
<text x="583.3" y="146.7" font-size="15.5" text-anchor="end" textLength="8.02" lengthAdjust="spacingAndGlyphs" fill="#e2e2e2">5</text>
<rect x="589" y="186.4" width="138.2" height="1.4" fill="#8a8a8a"/>
<rect x="584" y="186.4" width="5" height="1.4" fill="#e0e0e0"/>
<text x="583.3" y="192.6" font-size="15.5" text-anchor="end" textLength="8.02" lengthAdjust="spacingAndGlyphs" fill="#e2e2e2">0</text>
<rect x="589" y="232.7" width="138.2" height="1.4" fill="#8a8a8a"/>
<rect x="584" y="232.7" width="5" height="1.4" fill="#e0e0e0"/>
<text x="583.3" y="238.9" font-size="15.5" text-anchor="end" textLength="12.82" lengthAdjust="spacingAndGlyphs" fill="#e2e2e2">-5</text>
<rect x="589" y="278.5" width="138.2" height="1.4" fill="#8a8a8a"/>
<rect x="584" y="278.5" width="5" height="1.4" fill="#e0e0e0"/>
<text x="583.3" y="284.7" font-size="15.5" text-anchor="end" textLength="20.83" lengthAdjust="spacingAndGlyphs" fill="#e2e2e2">-10</text>
<rect x="589" y="323.6" width="138.2" height="1.4" fill="#8a8a8a"/>
<rect x="584" y="323.6" width="5" height="1.4" fill="#e0e0e0"/>
<text x="583.3" y="329.8" font-size="15.5" text-anchor="end" textLength="20.83" lengthAdjust="spacingAndGlyphs" fill="#e2e2e2">-15</text>
<rect x="588" y="46" width="139.7" height="1.2" fill="#a0a0a0"/>
<rect x="588.2" y="46.5" width="1.6" height="284" fill="#a0a0a0"/>
<rect x="726.4" y="46.5" width="1.6" height="284" fill="#a0a0a0"/>
<rect x="602.7" y="185" width="109.7" height="59.7" fill="#000"/>
<rect x="604" y="186.3" width="107.1" height="57.1" fill="url(#l5)"/>
<rect x="589" y="91.45" width="138.2" height="1.8" fill="#e81c1c"/>
<rect x="589" y="277.75" width="138.2" height="1.8" fill="#e81c1c"/>
<rect x="589" y="156.86" width="138.2" height="1.4" fill="#f0f000"/>
<rect x="589" y="212.75" width="138.2" height="1.4" fill="#f0f000"/>
<rect x="589" y="175.28" width="138.2" height="1.8" fill="#0f7a0f"/>
<rect x="589" y="193.91" width="138.2" height="1.8" fill="#0f7a0f"/>
<text x="644.8" y="41.7" font-size="15.4" text-anchor="middle" textLength="45" lengthAdjust="spacingAndGlyphs" fill="#e2e2e2">DeltaC</text>
<text x="658.8" y="341.2" font-size="15.5" text-anchor="middle" textLength="36.87" lengthAdjust="spacingAndGlyphs" fill="#e2e2e2">100%</text>
<rect x="779.5" y="46.5" width="138.2" height="278" fill="#242424"/>
<rect x="779.5" y="47.5" width="138.2" height="1.4" fill="#8a8a8a"/>
<rect x="774.5" y="47.5" width="5" height="1.4" fill="#e0e0e0"/>
<text x="773.8" y="53.7" font-size="15.5" text-anchor="end" textLength="16.03" lengthAdjust="spacingAndGlyphs" fill="#e2e2e2">15</text>
<rect x="779.5" y="93.7" width="138.2" height="1.4" fill="#8a8a8a"/>
<rect x="774.5" y="93.7" width="5" height="1.4" fill="#e0e0e0"/>
<text x="773.8" y="99.9" font-size="15.5" text-anchor="end" textLength="16.03" lengthAdjust="spacingAndGlyphs" fill="#e2e2e2">10</text>
<rect x="779.5" y="140.5" width="138.2" height="1.4" fill="#8a8a8a"/>
<rect x="774.5" y="140.5" width="5" height="1.4" fill="#e0e0e0"/>
<text x="773.8" y="146.7" font-size="15.5" text-anchor="end" textLength="8.02" lengthAdjust="spacingAndGlyphs" fill="#e2e2e2">5</text>
<rect x="779.5" y="186.4" width="138.2" height="1.4" fill="#8a8a8a"/>
<rect x="774.5" y="186.4" width="5" height="1.4" fill="#e0e0e0"/>
<text x="773.8" y="192.6" font-size="15.5" text-anchor="end" textLength="8.02" lengthAdjust="spacingAndGlyphs" fill="#e2e2e2">0</text>
<rect x="779.5" y="232.7" width="138.2" height="1.4" fill="#8a8a8a"/>
<rect x="774.5" y="232.7" width="5" height="1.4" fill="#e0e0e0"/>
<text x="773.8" y="238.9" font-size="15.5" text-anchor="end" textLength="12.82" lengthAdjust="spacingAndGlyphs" fill="#e2e2e2">-5</text>
<rect x="779.5" y="278.5" width="138.2" height="1.4" fill="#8a8a8a"/>
<rect x="774.5" y="278.5" width="5" height="1.4" fill="#e0e0e0"/>
<text x="773.8" y="284.7" font-size="15.5" text-anchor="end" textLength="20.83" lengthAdjust="spacingAndGlyphs" fill="#e2e2e2">-10</text>
<rect x="779.5" y="323.6" width="138.2" height="1.4" fill="#8a8a8a"/>
<rect x="774.5" y="323.6" width="5" height="1.4" fill="#e0e0e0"/>
<text x="773.8" y="329.8" font-size="15.5" text-anchor="end" textLength="20.83" lengthAdjust="spacingAndGlyphs" fill="#e2e2e2">-15</text>
<rect x="778.5" y="46" width="139.7" height="1.2" fill="#a0a0a0"/>
<rect x="778.7" y="46.5" width="1.6" height="284" fill="#a0a0a0"/>
<rect x="916.9" y="46.5" width="1.6" height="284" fill="#a0a0a0"/>
<rect x="793.2" y="185" width="109.7" height="14.8" fill="#000"/>
<rect x="794.5" y="186.3" width="107.1" height="12.2" fill="url(#l6)"/>
<rect x="779.5" y="91.45" width="138.2" height="1.8" fill="#e81c1c"/>
<rect x="779.5" y="277.75" width="138.2" height="1.8" fill="#e81c1c"/>
<rect x="779.5" y="156.86" width="138.2" height="1.4" fill="#f0f000"/>
<rect x="779.5" y="212.75" width="138.2" height="1.4" fill="#f0f000"/>
<rect x="779.5" y="175.28" width="138.2" height="1.8" fill="#0f7a0f"/>
<rect x="779.5" y="193.91" width="138.2" height="1.8" fill="#0f7a0f"/>
<text x="835.3" y="41.7" font-size="15.4" text-anchor="middle" textLength="45" lengthAdjust="spacingAndGlyphs" fill="#e2e2e2">DeltaH</text>
<text x="849.3" y="341.2" font-size="15.5" text-anchor="middle" textLength="36.87" lengthAdjust="spacingAndGlyphs" fill="#e2e2e2">100%</text>
<rect x="332" y="358" width="619" height="168" fill="#000000"/>
<rect x="353" y="365" width="104.3" height="61" fill="#f4f4f4"/>
<rect x="354.2" y="366.2" width="101.9" height="58.6" fill="#8c8c78"/>
<rect x="355.2" y="367.2" width="99.9" height="56.6" fill="#b4bea0"/>
<rect x="353" y="442" width="104.3" height="60" fill="#f4f4f4"/>
<rect x="354.2" y="443.2" width="101.9" height="57.6" fill="#8c8c78"/>
<rect x="355.2" y="444.2" width="99.9" height="55.6" fill="#c0c0a3"/>
<text x="405.15" y="516.9" font-size="13.2" text-anchor="middle" textLength="24" lengthAdjust="spacingAndGlyphs" fill="#ffffff">20%</text>
<rect x="474" y="365" width="104.3" height="61" fill="#f4f4f4"/>
<rect x="475.2" y="366.2" width="101.9" height="58.6" fill="#8c8c78"/>
<rect x="476.2" y="367.2" width="99.9" height="56.6" fill="#b6ba82"/>
<rect x="474" y="442" width="104.3" height="60" fill="#f4f4f4"/>
<rect x="475.2" y="443.2" width="101.9" height="57.6" fill="#8c8c78"/>
<rect x="476.2" y="444.2" width="99.9" height="55.6" fill="#c1c087"/>
<text x="526.15" y="516.9" font-size="13.2" text-anchor="middle" textLength="24" lengthAdjust="spacingAndGlyphs" fill="#ffffff">40%</text>
<rect x="595" y="365" width="104.3" height="61" fill="#f4f4f4"/>
<rect x="596.2" y="366.2" width="101.9" height="58.6" fill="#8c8c78"/>
<rect x="597.2" y="367.2" width="99.9" height="56.6" fill="#b6b76b"/>
<rect x="595" y="442" width="104.3" height="60" fill="#f4f4f4"/>
<rect x="596.2" y="443.2" width="101.9" height="57.6" fill="#8c8c78"/>
<rect x="597.2" y="444.2" width="99.9" height="55.6" fill="#c0bf6b"/>
<text x="647.15" y="516.9" font-size="13.2" text-anchor="middle" textLength="24" lengthAdjust="spacingAndGlyphs" fill="#ffffff">60%</text>
<rect x="716" y="365" width="104.3" height="61" fill="#f4f4f4"/>
<rect x="717.2" y="366.2" width="101.9" height="58.6" fill="#8c8c78"/>
<rect x="718.2" y="367.2" width="99.9" height="56.6" fill="#b8b253"/>
<rect x="716" y="442" width="104.3" height="60" fill="#f4f4f4"/>
<rect x="717.2" y="443.2" width="101.9" height="57.6" fill="#8c8c78"/>
<rect x="718.2" y="444.2" width="99.9" height="55.6" fill="#c0bf49"/>
<text x="768.15" y="516.9" font-size="13.2" text-anchor="middle" textLength="24" lengthAdjust="spacingAndGlyphs" fill="#ffffff">80%</text>
<rect x="836.8" y="365" width="105.5" height="61" fill="#f4f4f4"/>
<rect x="838" y="366.2" width="103.1" height="58.6" fill="#8c8c78"/>
<rect x="839" y="367.2" width="101.1" height="56.6" fill="#b8ae23"/>
<rect x="836.8" y="442" width="105.5" height="60" fill="#f4f4f4"/>
<rect x="838" y="443.2" width="103.1" height="57.6" fill="#8c8c78"/>
<rect x="839" y="444.2" width="101.1" height="55.6" fill="#c1bf00"/>
<text x="889.55" y="516.9" font-size="13.2" text-anchor="middle" textLength="31.5" lengthAdjust="spacingAndGlyphs" fill="#ffffff">100%</text>
<text transform="translate(345.3,395.5) rotate(-90)" font-size="13.5" font-weight="bold" text-anchor="middle" textLength="36" lengthAdjust="spacingAndGlyphs" fill="#ffffff">Actual</text>
<text transform="translate(345.3,471.5) rotate(-90)" font-size="13.5" font-weight="bold" text-anchor="middle" textLength="36.5" lengthAdjust="spacingAndGlyphs" fill="#ffffff">Target</text>
<rect x="346.5" y="557.8" width="605" height="257.7" fill="#242424"/>
<rect x="346.5" y="814.8" width="605" height="1.4" fill="#8a8a8a"/>
<rect x="341.5" y="814.8" width="5" height="1.4" fill="#e0e0e0"/>
<text x="340.8" y="821" font-size="15.5" text-anchor="end" textLength="8.02" lengthAdjust="spacingAndGlyphs" fill="#e2e2e2">0</text>
<rect x="346.5" y="763.6" width="605" height="1.4" fill="#8a8a8a"/>
<rect x="341.5" y="763.6" width="5" height="1.4" fill="#e0e0e0"/>
<text x="340.8" y="769.8" font-size="15.5" text-anchor="end" textLength="8.02" lengthAdjust="spacingAndGlyphs" fill="#e2e2e2">5</text>
<rect x="341.5" y="712.4" width="5" height="1.4" fill="#e0e0e0"/>
<text x="340.8" y="718.6" font-size="15.5" text-anchor="end" textLength="16.03" lengthAdjust="spacingAndGlyphs" fill="#e2e2e2">10</text>
<rect x="346.5" y="661.2" width="605" height="1.4" fill="#8a8a8a"/>
<rect x="341.5" y="661.2" width="5" height="1.4" fill="#e0e0e0"/>
<text x="340.8" y="667.4" font-size="15.5" text-anchor="end" textLength="16.03" lengthAdjust="spacingAndGlyphs" fill="#e2e2e2">15</text>
<rect x="346.5" y="610" width="605" height="1.4" fill="#8a8a8a"/>
<rect x="341.5" y="610" width="5" height="1.4" fill="#e0e0e0"/>
<text x="340.8" y="616.2" font-size="15.5" text-anchor="end" textLength="16.03" lengthAdjust="spacingAndGlyphs" fill="#e2e2e2">20</text>
<rect x="346.5" y="558.8" width="605" height="1.4" fill="#8a8a8a"/>
<rect x="341.5" y="558.8" width="5" height="1.4" fill="#e0e0e0"/>
<text x="340.8" y="565" font-size="15.5" text-anchor="end" textLength="16.03" lengthAdjust="spacingAndGlyphs" fill="#e2e2e2">25</text>
<rect x="345.5" y="557.3" width="606.5" height="1.2" fill="#a0a0a0"/>
<rect x="345.7" y="557.8" width="1.6" height="263.7" fill="#a0a0a0"/>
<rect x="950.7" y="557.8" width="1.6" height="263.7" fill="#a0a0a0"/>
<rect x="446.55" y="815.5" width="1.6" height="6" fill="#a0a0a0"/>
<rect x="547.4" y="815.5" width="1.6" height="6" fill="#a0a0a0"/>
<rect x="648.25" y="815.5" width="1.6" height="6" fill="#a0a0a0"/>
<rect x="749.1" y="815.5" width="1.6" height="6" fill="#a0a0a0"/>
<rect x="849.95" y="815.5" width="1.6" height="6" fill="#a0a0a0"/>
<text x="396.9" y="831" font-size="15.5" text-anchor="middle" textLength="24.05" lengthAdjust="spacingAndGlyphs" fill="#e2e2e2">100</text>
<text x="497.85" y="831" font-size="15.5" text-anchor="middle" textLength="28.85" lengthAdjust="spacingAndGlyphs" fill="#e2e2e2">20%</text>
<text x="598.8" y="831" font-size="15.5" text-anchor="middle" textLength="28.85" lengthAdjust="spacingAndGlyphs" fill="#e2e2e2">40%</text>
<text x="699.75" y="831" font-size="15.5" text-anchor="middle" textLength="28.85" lengthAdjust="spacingAndGlyphs" fill="#e2e2e2">60%</text>
<text x="800.7" y="831" font-size="15.5" text-anchor="middle" textLength="28.85" lengthAdjust="spacingAndGlyphs" fill="#e2e2e2">80%</text>
<text x="901.65" y="831" font-size="15.5" text-anchor="middle" textLength="36.87" lengthAdjust="spacingAndGlyphs" fill="#e2e2e2">100%</text>
<text x="638" y="552.9" font-size="15.4" text-anchor="middle" textLength="80" lengthAdjust="spacingAndGlyphs" fill="#e2e2e2">DeltaE 2000</text>
<rect x="420" y="723.47" width="11" height="91.03" fill="#000"/>
<rect x="421.5" y="725.07" width="8" height="89.43" fill="url(#l7)"/>
<rect x="457.6" y="730.72" width="10.75" height="83.78" fill="#000"/>
<rect x="459.1" y="732.32" width="7.75" height="82.18" fill="url(#l8)"/>
<rect x="468.35" y="799.91" width="10.75" height="14.59" fill="#000"/>
<rect x="469.85" y="801.51" width="7.75" height="12.99" fill="url(#l9)"/>
<rect x="479.1" y="682.69" width="10.75" height="131.81" fill="#000"/>
<rect x="480.6" y="684.29" width="7.75" height="130.21" fill="url(#l10)"/>
<rect x="489.85" y="761.79" width="10.75" height="52.71" fill="#000"/>
<rect x="491.35" y="763.39" width="7.75" height="51.11" fill="url(#l11)"/>
<rect x="500.6" y="698.53" width="10.75" height="115.97" fill="#000"/>
<rect x="502.1" y="700.13" width="7.75" height="114.37" fill="url(#l12)"/>
<rect x="511.35" y="775.69" width="10.75" height="38.81" fill="#000"/>
<rect x="512.85" y="777.29" width="7.75" height="37.21" fill="url(#l13)"/>
<rect x="558.3" y="745.34" width="10.75" height="69.16" fill="#000"/>
<rect x="559.8" y="746.94" width="7.75" height="67.56" fill="url(#l14)"/>
<rect x="569.05" y="779.47" width="10.75" height="35.03" fill="#000"/>
<rect x="570.55" y="781.07" width="7.75" height="33.43" fill="url(#l15)"/>
<rect x="579.8" y="689.54" width="10.75" height="124.96" fill="#000"/>
<rect x="581.3" y="691.14" width="7.75" height="123.36" fill="url(#l16)"/>
<rect x="590.55" y="776.92" width="10.75" height="37.58" fill="#000"/>
<rect x="592.05" y="778.52" width="7.75" height="35.98" fill="url(#l17)"/>
<rect x="601.3" y="721.22" width="10.75" height="93.28" fill="#000"/>
<rect x="602.8" y="722.82" width="7.75" height="91.68" fill="url(#l18)"/>
<rect x="612.05" y="794.5" width="10.75" height="20" fill="#000"/>
<rect x="613.55" y="796.1" width="7.75" height="18.4" fill="url(#l19)"/>
<rect x="659" y="750.86" width="10.75" height="63.64" fill="#000"/>
<rect x="660.5" y="752.46" width="7.75" height="62.04" fill="url(#l20)"/>
<rect x="669.75" y="765.17" width="10.75" height="49.33" fill="#000"/>
<rect x="671.25" y="766.77" width="7.75" height="47.73" fill="url(#l21)"/>
<rect x="680.5" y="658.16" width="10.75" height="156.34" fill="#000"/>
<rect x="682" y="659.76" width="7.75" height="154.74" fill="url(#l22)"/>
<rect x="691.25" y="779.47" width="10.75" height="35.03" fill="#000"/>
<rect x="692.75" y="781.07" width="7.75" height="33.43" fill="url(#l23)"/>
<rect x="702" y="714.07" width="10.75" height="100.43" fill="#000"/>
<rect x="703.5" y="715.67" width="7.75" height="98.83" fill="url(#l24)"/>
<rect x="712.75" y="790.21" width="10.75" height="24.3" fill="#000"/>
<rect x="714.25" y="791.8" width="7.75" height="22.7" fill="url(#l25)"/>
<rect x="759.7" y="761.08" width="10.75" height="53.42" fill="#000"/>
<rect x="761.2" y="762.68" width="7.75" height="51.82" fill="url(#l26)"/>
<rect x="770.45" y="756.27" width="10.75" height="58.23" fill="#000"/>
<rect x="771.95" y="757.87" width="7.75" height="56.63" fill="url(#l27)"/>
<rect x="781.2" y="624.64" width="10.75" height="189.86" fill="#000"/>
<rect x="782.7" y="626.24" width="7.75" height="188.26" fill="url(#l28)"/>
<rect x="791.95" y="777.74" width="10.75" height="36.76" fill="#000"/>
<rect x="793.45" y="779.34" width="7.75" height="35.16" fill="url(#l29)"/>
<rect x="802.7" y="705.89" width="10.75" height="108.61" fill="#000"/>
<rect x="804.2" y="707.49" width="7.75" height="107.01" fill="url(#l30)"/>
<rect x="813.45" y="783.15" width="10.75" height="31.35" fill="#000"/>
<rect x="814.95" y="784.75" width="7.75" height="29.75" fill="url(#l31)"/>
<rect x="860.4" y="755.46" width="10.75" height="59.04" fill="#000"/>
<rect x="861.9" y="757.06" width="7.75" height="57.44" fill="url(#l32)"/>
<rect x="871.15" y="748.1" width="10.75" height="66.4" fill="#000"/>
<rect x="872.65" y="749.7" width="7.75" height="64.8" fill="url(#l33)"/>
<rect x="881.9" y="569.96" width="10.75" height="244.54" fill="#000"/>
<rect x="883.4" y="571.56" width="7.75" height="242.94" fill="url(#l34)"/>
<rect x="892.65" y="776.51" width="10.75" height="37.99" fill="#000"/>
<rect x="894.15" y="778.11" width="7.75" height="36.39" fill="url(#l35)"/>
<rect x="903.4" y="704.87" width="10.75" height="109.63" fill="#000"/>
<rect x="904.9" y="706.47" width="7.75" height="108.03" fill="url(#l36)"/>
<rect x="914.15" y="776.51" width="10.75" height="37.99" fill="#000"/>
<rect x="915.65" y="778.11" width="7.75" height="36.39" fill="url(#l37)"/>
<rect x="346.5" y="711.1" width="605" height="2" fill="#e81c1c"/>
<rect x="346.5" y="782.98" width="605" height="1.6" fill="#f0f000"/>
<rect x="346.5" y="803.36" width="605" height="1.8" fill="#0f7a0f"/>
<rect x="346.5" y="814" width="605" height="2" fill="#a4a4a4"/>
<rect x="990" y="612.2" width="495" height="31.4" fill="url(#l38)"/>
<rect x="973" y="612.2" width="17" height="31.4" fill="#000000"/>
<text x="1133.5" y="634.5" font-size="18.2" textLength="35" lengthAdjust="spacingAndGlyphs" fill="#ffffff">20%</text>
<text x="1204.8" y="634.5" font-size="18.2" textLength="35" lengthAdjust="spacingAndGlyphs" fill="#ffffff">40%</text>
<text x="1276.2" y="634.5" font-size="18.2" textLength="35" lengthAdjust="spacingAndGlyphs" fill="#ffffff">60%</text>
<text x="1347.6" y="634.5" font-size="18.2" textLength="35" lengthAdjust="spacingAndGlyphs" fill="#ffffff">80%</text>
<text x="1419" y="634.5" font-size="18.2" textLength="45" lengthAdjust="spacingAndGlyphs" fill="#ffffff">100%</text>
<rect x="990" y="643.6" width="495" height="29.2" fill="#404040"/>
<rect x="973" y="643.6" width="17" height="29.2" fill="url(#l39)"/>
<rect x="973" y="672" width="17" height="0.8" fill="#2c2c2c"/>
<text x="995.5" y="665.2" font-size="18.2" textLength="68" lengthAdjust="spacingAndGlyphs" fill="#ffffff">x: CIE31</text>
<text x="1133.5" y="665.2" font-size="18.2" textLength="36.5" lengthAdjust="spacingAndGlyphs" fill="#ffffff">0,33</text>
<text x="1204.8" y="665.2" font-size="18.2" textLength="36.5" lengthAdjust="spacingAndGlyphs" fill="#ffffff">0,35</text>
<text x="1276.2" y="665.2" font-size="18.2" textLength="36.5" lengthAdjust="spacingAndGlyphs" fill="#ffffff">0,37</text>
<text x="1347.6" y="665.2" font-size="18.2" textLength="36.5" lengthAdjust="spacingAndGlyphs" fill="#ffffff">0,39</text>
<text x="1419" y="665.2" font-size="18.2" textLength="36.5" lengthAdjust="spacingAndGlyphs" fill="#ffffff">0,42</text>
<rect x="990" y="672.8" width="495" height="29.2" fill="#808080"/>
<rect x="973" y="672.8" width="17" height="29.2" fill="url(#l39)"/>
<rect x="973" y="701.2" width="17" height="0.8" fill="#2c2c2c"/>
<text x="995.5" y="694.4" font-size="18.2" textLength="68.5" lengthAdjust="spacingAndGlyphs" fill="#ffffff">y: CIE31</text>
<text x="1133.5" y="694.4" font-size="18.2" textLength="36.5" lengthAdjust="spacingAndGlyphs" fill="#ffffff">0,37</text>
<text x="1204.8" y="694.4" font-size="18.2" textLength="36.5" lengthAdjust="spacingAndGlyphs" fill="#ffffff">0,40</text>
<text x="1276.2" y="694.4" font-size="18.2" textLength="36.5" lengthAdjust="spacingAndGlyphs" fill="#ffffff">0,43</text>
<text x="1347.6" y="694.4" font-size="18.2" textLength="36.5" lengthAdjust="spacingAndGlyphs" fill="#ffffff">0,46</text>
<text x="1419" y="694.4" font-size="18.2" textLength="36.5" lengthAdjust="spacingAndGlyphs" fill="#ffffff">0,49</text>
<rect x="990" y="702" width="495" height="29.2" fill="#404040"/>
<rect x="973" y="702" width="17" height="29.2" fill="url(#l39)"/>
<rect x="973" y="730.4" width="17" height="0.8" fill="#2c2c2c"/>
<text x="995.5" y="723.6" font-size="18.2" textLength="11" lengthAdjust="spacingAndGlyphs" fill="#ffffff">Y</text>
<text x="1133.5" y="723.6" font-size="18.2" textLength="58" lengthAdjust="spacingAndGlyphs" fill="#ffffff">144,07</text>
<text x="1204.8" y="723.6" font-size="18.2" textLength="58" lengthAdjust="spacingAndGlyphs" fill="#ffffff">137,67</text>
<text x="1276.2" y="723.6" font-size="18.2" textLength="58" lengthAdjust="spacingAndGlyphs" fill="#ffffff">133,55</text>
<text x="1347.6" y="723.6" font-size="18.2" textLength="58" lengthAdjust="spacingAndGlyphs" fill="#ffffff">129,88</text>
<text x="1419" y="723.6" font-size="18.2" textLength="58" lengthAdjust="spacingAndGlyphs" fill="#ffffff">124,90</text>
<rect x="990" y="731.2" width="495" height="29.2" fill="#808080"/>
<rect x="973" y="731.2" width="17" height="29.2" fill="url(#l39)"/>
<rect x="973" y="759.6" width="17" height="0.8" fill="#2c2c2c"/>
<text x="995.5" y="752.8" font-size="18.2" textLength="124" lengthAdjust="spacingAndGlyphs" fill="#ffffff">Target x:CIE31</text>
<text x="1133.5" y="752.8" font-size="18.2" textLength="36.5" lengthAdjust="spacingAndGlyphs" fill="#ffffff">0,33</text>
<text x="1204.8" y="752.8" font-size="18.2" textLength="36.5" lengthAdjust="spacingAndGlyphs" fill="#ffffff">0,36</text>
<text x="1276.2" y="752.8" font-size="18.2" textLength="36.5" lengthAdjust="spacingAndGlyphs" fill="#ffffff">0,38</text>
<text x="1347.6" y="752.8" font-size="18.2" textLength="36.5" lengthAdjust="spacingAndGlyphs" fill="#ffffff">0,40</text>
<text x="1419" y="752.8" font-size="18.2" textLength="36.5" lengthAdjust="spacingAndGlyphs" fill="#ffffff">0,42</text>
<rect x="990" y="760.4" width="495" height="29.2" fill="#404040"/>
<rect x="973" y="760.4" width="17" height="29.2" fill="url(#l39)"/>
<rect x="973" y="788.8" width="17" height="0.8" fill="#2c2c2c"/>
<text x="995.5" y="782" font-size="18.2" textLength="124.5" lengthAdjust="spacingAndGlyphs" fill="#ffffff">Target y:CIE31</text>
<text x="1133.5" y="782" font-size="18.2" textLength="36.5" lengthAdjust="spacingAndGlyphs" fill="#ffffff">0,36</text>
<text x="1204.8" y="782" font-size="18.2" textLength="36.5" lengthAdjust="spacingAndGlyphs" fill="#ffffff">0,40</text>
<text x="1276.2" y="782" font-size="18.2" textLength="36.5" lengthAdjust="spacingAndGlyphs" fill="#ffffff">0,44</text>
<text x="1347.6" y="782" font-size="18.2" textLength="36.5" lengthAdjust="spacingAndGlyphs" fill="#ffffff">0,47</text>
<text x="1419" y="782" font-size="18.2" textLength="36.5" lengthAdjust="spacingAndGlyphs" fill="#ffffff">0,51</text>
<rect x="990" y="789.6" width="495" height="29.2" fill="#808080"/>
<rect x="973" y="789.6" width="17" height="29.2" fill="url(#l39)"/>
<rect x="973" y="818" width="17" height="0.8" fill="#2c2c2c"/>
<text x="995.5" y="811.2" font-size="18.2" textLength="71" lengthAdjust="spacingAndGlyphs" fill="#ffffff">Target Y</text>
<text x="1133.5" y="811.2" font-size="18.2" textLength="58" lengthAdjust="spacingAndGlyphs" fill="#ffffff">149,67</text>
<text x="1204.8" y="811.2" font-size="18.2" textLength="58" lengthAdjust="spacingAndGlyphs" fill="#ffffff">147,04</text>
<text x="1276.2" y="811.2" font-size="18.2" textLength="58" lengthAdjust="spacingAndGlyphs" fill="#ffffff">145,02</text>
<text x="1347.6" y="811.2" font-size="18.2" textLength="58" lengthAdjust="spacingAndGlyphs" fill="#ffffff">143,44</text>
<text x="1419" y="811.2" font-size="18.2" textLength="58" lengthAdjust="spacingAndGlyphs" fill="#ffffff">141,91</text>
<rect x="971.5" y="14.3" width="691.5" height="589.4" fill="#1e1e1e"/>
<rect x="978.6" y="21.4" width="680.3" height="574.7" fill="#333333"/>
<rect x="1007.7" y="45.3" width="647.9" height="520.9" fill="#242424"/>
<g clip-path="url(#locus)"><g filter="url(#vb)">
<rect x="1053" y="43" width="34" height="2.6" fill="url(#c40)"/>
<rect x="1048" y="45" width="46" height="2.6" fill="url(#c41)"/>
<rect x="1044" y="47" width="57" height="2.6" fill="url(#c42)"/>
<rect x="1041" y="49" width="66" height="2.6" fill="url(#c43)"/>
<rect x="1038" y="51" width="74" height="2.6" fill="url(#c44)"/>
<rect x="1036" y="53" width="81" height="2.6" fill="url(#c45)"/>
<rect x="1034" y="55" width="87" height="2.6" fill="url(#c46)"/>
<rect x="1032" y="57" width="94" height="2.6" fill="url(#c47)"/>
<rect x="1030" y="59" width="100" height="2.6" fill="url(#c48)"/>
<rect x="1029" y="61" width="106" height="2.6" fill="url(#c49)"/>
<rect x="1027" y="63" width="112" height="2.6" fill="url(#c50)"/>
<rect x="1026" y="65" width="117" height="2.6" fill="url(#c51)"/>
<rect x="1025" y="67" width="122" height="2.6" fill="url(#c52)"/>
<rect x="1024" y="69" width="126" height="2.6" fill="url(#c53)"/>
<rect x="1023" y="71" width="131" height="2.6" fill="url(#c54)"/>
<rect x="1022" y="73" width="136" height="2.6" fill="url(#c55)"/>
<rect x="1021" y="75" width="140" height="2.6" fill="url(#c56)"/>
<rect x="1020" y="77" width="145" height="2.6" fill="url(#c57)"/>
<rect x="1019" y="79" width="149" height="2.6" fill="url(#c58)"/>
<rect x="1018" y="81" width="154" height="2.6" fill="url(#c59)"/>
<rect x="1018" y="83" width="157" height="2.6" fill="url(#c60)"/>
<rect x="1017" y="85" width="161" height="2.6" fill="url(#c61)"/>
<rect x="1016" y="87" width="166" height="2.6" fill="url(#c62)"/>
<rect x="1016" y="89" width="169" height="2.6" fill="url(#c63)"/>
<rect x="1015" y="91" width="173" height="2.6" fill="url(#c64)"/>
<rect x="1014" y="93" width="177" height="2.6" fill="url(#c65)"/>
<rect x="1014" y="95" width="180" height="2.6" fill="url(#c66)"/>
<rect x="1013" y="97" width="184" height="2.6" fill="url(#c67)"/>
<rect x="1013" y="99" width="187" height="2.6" fill="url(#c68)"/>
<rect x="1012" y="101" width="191" height="2.6" fill="url(#c69)"/>
<rect x="1012" y="103" width="194" height="2.6" fill="url(#c70)"/>
<rect x="1011" y="105" width="198" height="2.6" fill="url(#c71)"/>
<rect x="1011" y="107" width="201" height="2.6" fill="url(#c72)"/>
<rect x="1011" y="109" width="204" height="2.6" fill="url(#c73)"/>
<rect x="1010" y="111" width="208" height="2.6" fill="url(#c74)"/>
<rect x="1010" y="113" width="211" height="2.6" fill="url(#c75)"/>
<rect x="1010" y="115" width="214" height="2.6" fill="url(#c76)"/>
<rect x="1009" y="117" width="218" height="2.6" fill="url(#c77)"/>
<rect x="1009" y="119" width="220" height="2.6" fill="url(#c78)"/>
<rect x="1009" y="121" width="223" height="2.6" fill="url(#c79)"/>
<rect x="1009" y="123" width="226" height="2.6" fill="url(#c80)"/>
<rect x="1008" y="125" width="230" height="2.6" fill="url(#c81)"/>
<rect x="1008" y="127" width="232" height="2.6" fill="url(#c82)"/>
<rect x="1008" y="129" width="235" height="2.6" fill="url(#c83)"/>
<rect x="1008" y="131" width="238" height="2.6" fill="url(#c84)"/>
<rect x="1008" y="133" width="240" height="2.6" fill="url(#c85)"/>
<rect x="1007.7" y="135" width="243.3" height="2.6" fill="url(#c86)"/>
<rect x="1007.7" y="137" width="246.3" height="2.6" fill="url(#c87)"/>
<rect x="1007.7" y="139" width="248.3" height="2.6" fill="url(#c88)"/>
<rect x="1007.7" y="141" width="251.3" height="2.6" fill="url(#c89)"/>
<rect x="1007.7" y="143" width="254.3" height="2.6" fill="url(#c90)"/>
<rect x="1007.7" y="145" width="256.3" height="2.6" fill="url(#c91)"/>
<rect x="1007.7" y="147" width="259.3" height="2.6" fill="url(#c92)"/>
<rect x="1007.7" y="149" width="262.3" height="2.6" fill="url(#c93)"/>
<rect x="1007.7" y="151" width="264.3" height="2.6" fill="url(#c94)"/>
<rect x="1007.7" y="153" width="267.3" height="2.6" fill="url(#c95)"/>
<rect x="1007.7" y="155" width="270.3" height="2.6" fill="url(#c96)"/>
<rect x="1007.7" y="157" width="272.3" height="2.6" fill="url(#c97)"/>
<rect x="1007.7" y="159" width="275.3" height="2.6" fill="url(#c98)"/>
<rect x="1007.7" y="161" width="277.3" height="2.6" fill="url(#c99)"/>
<rect x="1007.7" y="163" width="280.3" height="2.6" fill="url(#c100)"/>
<rect x="1007.7" y="165" width="282.3" height="2.6" fill="url(#c101)"/>
<rect x="1007.7" y="167" width="285.3" height="2.6" fill="url(#c102)"/>
<rect x="1007.7" y="169" width="288.3" height="2.6" fill="url(#c103)"/>
<rect x="1007.7" y="171" width="290.3" height="2.6" fill="url(#c104)"/>
<rect x="1007.7" y="173" width="293.3" height="2.6" fill="url(#c105)"/>
<rect x="1007.7" y="175" width="295.3" height="2.6" fill="url(#c106)"/>
<rect x="1007.7" y="177" width="298.3" height="2.6" fill="url(#c107)"/>
<rect x="1007.7" y="179" width="300.3" height="2.6" fill="url(#c108)"/>
<rect x="1007.7" y="181" width="303.3" height="2.6" fill="url(#c109)"/>
<rect x="1007.7" y="183" width="305.3" height="2.6" fill="url(#c110)"/>
<rect x="1007.7" y="185" width="308.3" height="2.6" fill="url(#c111)"/>
<rect x="1007.7" y="187" width="311.3" height="2.6" fill="url(#c112)"/>
<rect x="1007.7" y="189" width="313.3" height="2.6" fill="url(#c113)"/>
<rect x="1007.7" y="191" width="316.3" height="2.6" fill="url(#c114)"/>
<rect x="1007.7" y="193" width="318.3" height="2.6" fill="url(#c115)"/>
<rect x="1007.7" y="195" width="321.3" height="2.6" fill="url(#c116)"/>
<rect x="1007.7" y="197" width="323.3" height="2.6" fill="url(#c117)"/>
<rect x="1007.7" y="199" width="326.3" height="2.6" fill="url(#c118)"/>
<rect x="1007.7" y="201" width="328.3" height="2.6" fill="url(#c119)"/>
<rect x="1007.7" y="203" width="331.3" height="2.6" fill="url(#c120)"/>
<rect x="1007.7" y="205" width="333.3" height="2.6" fill="url(#c121)"/>
<rect x="1007.7" y="207" width="336.3" height="2.6" fill="url(#c122)"/>
<rect x="1007.7" y="209" width="338.3" height="2.6" fill="url(#c123)"/>
<rect x="1008" y="211" width="341" height="2.6" fill="url(#c124)"/>
<rect x="1008" y="213" width="343" height="2.6" fill="url(#c125)"/>
<rect x="1008" y="215" width="346" height="2.6" fill="url(#c126)"/>
<rect x="1008" y="217" width="348" height="2.6" fill="url(#c127)"/>
<rect x="1008" y="219" width="351" height="2.6" fill="url(#c128)"/>
<rect x="1008" y="221" width="353" height="2.6" fill="url(#c129)"/>
<rect x="1008" y="223" width="356" height="2.6" fill="url(#c130)"/>
<rect x="1009" y="225" width="357" height="2.6" fill="url(#c131)"/>
<rect x="1009" y="227" width="360" height="2.6" fill="url(#c132)"/>
<rect x="1009" y="229" width="362" height="2.6" fill="url(#c133)"/>
<rect x="1009" y="231" width="365" height="2.6" fill="url(#c134)"/>
<rect x="1009" y="233" width="367" height="2.6" fill="url(#c135)"/>
<rect x="1010" y="235" width="369" height="2.6" fill="url(#c136)"/>
<rect x="1010" y="237" width="371" height="2.6" fill="url(#c137)"/>
<rect x="1010" y="239" width="374" height="2.6" fill="url(#c138)"/>
<rect x="1010" y="241" width="376" height="2.6" fill="url(#c139)"/>
<rect x="1010" y="243" width="379" height="2.6" fill="url(#c140)"/>
<rect x="1011" y="245" width="380" height="2.6" fill="url(#c141)"/>
<rect x="1011" y="247" width="383" height="2.6" fill="url(#c142)"/>
<rect x="1011" y="249" width="385" height="2.6" fill="url(#c143)"/>
<rect x="1011" y="251" width="388" height="2.6" fill="url(#c144)"/>
<rect x="1012" y="253" width="389" height="2.6" fill="url(#c145)"/>
<rect x="1012" y="255" width="392" height="2.6" fill="url(#c146)"/>
<rect x="1012" y="257" width="394" height="2.6" fill="url(#c147)"/>
<rect x="1012" y="259" width="397" height="2.6" fill="url(#c148)"/>
<rect x="1013" y="261" width="398" height="2.6" fill="url(#c149)"/>
<rect x="1013" y="263" width="401" height="2.6" fill="url(#c150)"/>
<rect x="1013" y="265" width="403" height="2.6" fill="url(#c151)"/>
<rect x="1014" y="267" width="405" height="2.6" fill="url(#c152)"/>
<rect x="1014" y="269" width="407" height="2.6" fill="url(#c153)"/>
<rect x="1014" y="271" width="410" height="2.6" fill="url(#c154)"/>
<rect x="1014" y="273" width="412" height="2.6" fill="url(#c155)"/>
<rect x="1015" y="275" width="414" height="2.6" fill="url(#c156)"/>
<rect x="1015" y="277" width="416" height="2.6" fill="url(#c157)"/>
<rect x="1015" y="279" width="419" height="2.6" fill="url(#c158)"/>
<rect x="1016" y="281" width="420" height="2.6" fill="url(#c159)"/>
<rect x="1016" y="283" width="423" height="2.6" fill="url(#c160)"/>
<rect x="1016" y="285" width="425" height="2.6" fill="url(#c161)"/>
<rect x="1017" y="287" width="427" height="2.6" fill="url(#c162)"/>
<rect x="1017" y="289" width="429" height="2.6" fill="url(#c163)"/>
<rect x="1017" y="291" width="432" height="2.6" fill="url(#c164)"/>
<rect x="1018" y="293" width="433" height="2.6" fill="url(#c165)"/>
<rect x="1018" y="295" width="436" height="2.6" fill="url(#c166)"/>
<rect x="1018" y="297" width="438" height="2.6" fill="url(#c167)"/>
<rect x="1019" y="299" width="440" height="2.6" fill="url(#c168)"/>
<rect x="1019" y="301" width="442" height="2.6" fill="url(#c169)"/>
<rect x="1019" y="303" width="445" height="2.6" fill="url(#c170)"/>
<rect x="1020" y="305" width="446" height="2.6" fill="url(#c171)"/>
<rect x="1020" y="307" width="449" height="2.6" fill="url(#c172)"/>
<rect x="1020" y="309" width="451" height="2.6" fill="url(#c173)"/>
<rect x="1021" y="311" width="453" height="2.6" fill="url(#c174)"/>
<rect x="1021" y="313" width="455" height="2.6" fill="url(#c175)"/>
<rect x="1022" y="315" width="457" height="2.6" fill="url(#c176)"/>
<rect x="1022" y="317" width="459" height="2.6" fill="url(#c177)"/>
<rect x="1022" y="319" width="462" height="2.6" fill="url(#c178)"/>
<rect x="1023" y="321" width="463" height="2.6" fill="url(#c179)"/>
<rect x="1023" y="323" width="466" height="2.6" fill="url(#c180)"/>
<rect x="1024" y="325" width="467" height="2.6" fill="url(#c181)"/>
<rect x="1024" y="327" width="470" height="2.6" fill="url(#c182)"/>
<rect x="1024" y="329" width="472" height="2.6" fill="url(#c183)"/>
<rect x="1025" y="331" width="474" height="2.6" fill="url(#c184)"/>
<rect x="1025" y="333" width="476" height="2.6" fill="url(#c185)"/>
<rect x="1026" y="335" width="478" height="2.6" fill="url(#c186)"/>
<rect x="1026" y="337" width="480" height="2.6" fill="url(#c187)"/>
<rect x="1027" y="339" width="482" height="2.6" fill="url(#c188)"/>
<rect x="1027" y="341" width="484" height="2.6" fill="url(#c189)"/>
<rect x="1027" y="343" width="487" height="2.6" fill="url(#c190)"/>
<rect x="1028" y="345" width="488" height="2.6" fill="url(#c191)"/>
<rect x="1028" y="347" width="491" height="2.6" fill="url(#c192)"/>
<rect x="1029" y="349" width="492" height="2.6" fill="url(#c193)"/>
<rect x="1029" y="351" width="495" height="2.6" fill="url(#c194)"/>
<rect x="1030" y="353" width="496" height="2.6" fill="url(#c195)"/>
<rect x="1030" y="355" width="499" height="2.6" fill="url(#c196)"/>
<rect x="1031" y="357" width="500" height="2.6" fill="url(#c197)"/>
<rect x="1031" y="359" width="503" height="2.6" fill="url(#c198)"/>
<rect x="1032" y="361" width="504" height="2.6" fill="url(#c199)"/>
<rect x="1032" y="363" width="507" height="2.6" fill="url(#c200)"/>
<rect x="1033" y="365" width="508" height="2.6" fill="url(#c201)"/>
<rect x="1033" y="367" width="511" height="2.6" fill="url(#c202)"/>
<rect x="1034" y="369" width="512" height="2.6" fill="url(#c203)"/>
<rect x="1034" y="371" width="515" height="2.6" fill="url(#c204)"/>
<rect x="1035" y="373" width="516" height="2.6" fill="url(#c205)"/>
<rect x="1035" y="375" width="519" height="2.6" fill="url(#c206)"/>
<rect x="1036" y="377" width="520" height="2.6" fill="url(#c207)"/>
<rect x="1036" y="379" width="523" height="2.6" fill="url(#c208)"/>
<rect x="1037" y="381" width="524" height="2.6" fill="url(#c209)"/>
<rect x="1037" y="383" width="527" height="2.6" fill="url(#c210)"/>
<rect x="1038" y="385" width="528" height="2.6" fill="url(#c211)"/>
<rect x="1038" y="387" width="531" height="2.6" fill="url(#c212)"/>
<rect x="1039" y="389" width="532" height="2.6" fill="url(#c213)"/>
<rect x="1039" y="391" width="535" height="2.6" fill="url(#c214)"/>
<rect x="1040" y="393" width="536" height="2.6" fill="url(#c215)"/>
<rect x="1040" y="395" width="538" height="2.6" fill="url(#c216)"/>
<rect x="1041" y="397" width="537" height="2.6" fill="url(#c217)"/>
<rect x="1042" y="399" width="536" height="2.6" fill="url(#c218)"/>
<rect x="1042" y="401" width="536" height="2.6" fill="url(#c219)"/>
<rect x="1043" y="403" width="535" height="2.6" fill="url(#c220)"/>
<rect x="1043" y="405" width="535" height="2.6" fill="url(#c221)"/>
<rect x="1044" y="407" width="534" height="2.6" fill="url(#c222)"/>
<rect x="1044" y="409" width="528" height="2.6" fill="url(#c223)"/>
<rect x="1045" y="411" width="522" height="2.6" fill="url(#c224)"/>
<rect x="1046" y="413" width="516" height="2.6" fill="url(#c225)"/>
<rect x="1046" y="415" width="510" height="2.6" fill="url(#c226)"/>
<rect x="1047" y="417" width="504" height="2.6" fill="url(#c227)"/>
<rect x="1047" y="419" width="498" height="2.6" fill="url(#c228)"/>
<rect x="1048" y="421" width="492" height="2.6" fill="url(#c229)"/>
<rect x="1049" y="423" width="486" height="2.6" fill="url(#c230)"/>
<rect x="1049" y="425" width="480" height="2.6" fill="url(#c231)"/>
<rect x="1050" y="427" width="474" height="2.6" fill="url(#c232)"/>
<rect x="1051" y="429" width="468" height="2.6" fill="url(#c233)"/>
<rect x="1051" y="431" width="462" height="2.6" fill="url(#c234)"/>
<rect x="1052" y="433" width="456" height="2.6" fill="url(#c235)"/>
<rect x="1053" y="435" width="450" height="2.6" fill="url(#c236)"/>
<rect x="1053" y="437" width="444" height="2.6" fill="url(#c237)"/>
<rect x="1054" y="439" width="438" height="2.6" fill="url(#c238)"/>
<rect x="1055" y="441" width="431" height="2.6" fill="url(#c239)"/>
<rect x="1055" y="443" width="426" height="2.6" fill="url(#c240)"/>
<rect x="1056" y="445" width="420" height="2.6" fill="url(#c241)"/>
<rect x="1057" y="447" width="413" height="2.6" fill="url(#c242)"/>
<rect x="1057" y="449" width="408" height="2.6" fill="url(#c243)"/>
<rect x="1058" y="451" width="402" height="2.6" fill="url(#c244)"/>
<rect x="1059" y="453" width="395" height="2.6" fill="url(#c245)"/>
<rect x="1060" y="455" width="389" height="2.6" fill="url(#c246)"/>
<rect x="1060" y="457" width="384" height="2.6" fill="url(#c247)"/>
<rect x="1061" y="459" width="377" height="2.6" fill="url(#c248)"/>
<rect x="1062" y="461" width="371" height="2.6" fill="url(#c249)"/>
<rect x="1063" y="463" width="365" height="2.6" fill="url(#c250)"/>
<rect x="1064" y="465" width="358" height="2.6" fill="url(#c251)"/>
<rect x="1064" y="467" width="353" height="2.6" fill="url(#c252)"/>
<rect x="1065" y="469" width="346" height="2.6" fill="url(#c253)"/>
<rect x="1066" y="471" width="340" height="2.6" fill="url(#c254)"/>
<rect x="1067" y="473" width="334" height="2.6" fill="url(#c255)"/>
<rect x="1068" y="475" width="327" height="2.6" fill="url(#c256)"/>
<rect x="1069" y="477" width="321" height="2.6" fill="url(#c257)"/>
<rect x="1070" y="479" width="315" height="2.6" fill="url(#c258)"/>
<rect x="1070" y="481" width="309" height="2.6" fill="url(#c259)"/>
<rect x="1071" y="483" width="303" height="2.6" fill="url(#c260)"/>
<rect x="1072" y="485" width="297" height="2.6" fill="url(#c261)"/>
<rect x="1073" y="487" width="290" height="2.6" fill="url(#c262)"/>
<rect x="1074" y="489" width="284" height="2.6" fill="url(#c263)"/>
<rect x="1075" y="491" width="278" height="2.6" fill="url(#c264)"/>
<rect x="1076" y="493" width="271" height="2.6" fill="url(#c265)"/>
<rect x="1077" y="495" width="265" height="2.6" fill="url(#c266)"/>
<rect x="1078" y="497" width="258" height="2.6" fill="url(#c267)"/>
<rect x="1079" y="499" width="252" height="2.6" fill="url(#c268)"/>
<rect x="1080" y="501" width="246" height="2.6" fill="url(#c269)"/>
<rect x="1081" y="503" width="239" height="2.6" fill="url(#c270)"/>
<rect x="1082" y="505" width="233" height="2.6" fill="url(#c271)"/>
<rect x="1083" y="507" width="227" height="2.6" fill="url(#c272)"/>
<rect x="1084" y="509" width="220" height="2.6" fill="url(#c273)"/>
<rect x="1085" y="511" width="214" height="2.6" fill="url(#c274)"/>
<rect x="1086" y="513" width="208" height="2.6" fill="url(#c275)"/>
<rect x="1087" y="515" width="201" height="2.6" fill="url(#c276)"/>
<rect x="1088" y="517" width="195" height="2.6" fill="url(#c277)"/>
<rect x="1089" y="519" width="188" height="2.6" fill="url(#c278)"/>
<rect x="1090" y="521" width="182" height="2.6" fill="url(#c279)"/>
<rect x="1091" y="523" width="176" height="2.6" fill="url(#c280)"/>
<rect x="1093" y="525" width="168" height="2.6" fill="url(#c281)"/>
<rect x="1094" y="527" width="162" height="2.6" fill="url(#c282)"/>
<rect x="1095" y="529" width="156" height="2.6" fill="url(#c283)"/>
<rect x="1096" y="531" width="149" height="2.6" fill="url(#c284)"/>
<rect x="1098" y="533" width="142" height="2.6" fill="url(#c285)"/>
<rect x="1099" y="535" width="136" height="2.6" fill="url(#c286)"/>
<rect x="1100" y="537" width="129" height="2.6" fill="url(#c287)"/>
<rect x="1102" y="539" width="122" height="2.6" fill="url(#c288)"/>
<rect x="1103" y="541" width="116" height="2.6" fill="url(#c289)"/>
<rect x="1105" y="543" width="108" height="2.6" fill="url(#c290)"/>
<rect x="1107" y="545" width="101" height="2.6" fill="url(#c291)"/>
<rect x="1108" y="547" width="94" height="2.6" fill="url(#c292)"/>
<rect x="1110" y="549" width="87" height="2.6" fill="url(#c293)"/>
<rect x="1112" y="551" width="80" height="2.6" fill="url(#c294)"/>
<rect x="1115" y="553" width="71" height="2.6" fill="url(#c295)"/>
<rect x="1117" y="555" width="64" height="2.6" fill="url(#c296)"/>
<rect x="1120" y="557" width="56" height="2.6" fill="url(#c297)"/>
<rect x="1122" y="559" width="48" height="2.6" fill="url(#c298)"/>
<rect x="1125" y="561" width="40" height="2.6" fill="url(#c299)"/>
<rect x="1128" y="563" width="32" height="2.6" fill="url(#c300)"/>
<rect x="1131" y="565" width="23" height="2.6" fill="url(#c301)"/>
<rect x="1134" y="567" width="15" height="2.6" fill="url(#c302)"/>
</g>
<path d="M1007.7,45.3 H1655.6 V566.2 H1007.7Z M1501.72,361.5 L1238.9,193.78 L1122.95,529.23Z" fill="#000" fill-opacity="0.41" fill-rule="evenodd"/>
</g>
<rect x="1006.7" y="45" width="649.7" height="1.4" fill="#a0a0a0"/>
<rect x="1006.7" y="565.5" width="649.7" height="1.4" fill="#a0a0a0"/>
<rect x="1006.9" y="45.3" width="1.6" height="520.9" fill="#a0a0a0"/>
<rect x="1654.8" y="45.3" width="1.6" height="520.9" fill="#a0a0a0"/>
<rect x="1007.05" y="566.2" width="1.3" height="6.6" fill="#e0e0e0"/>
<text x="1007.7" y="589.2" font-size="15.5" text-anchor="middle" textLength="8.02" lengthAdjust="spacingAndGlyphs" fill="#e2e2e2">0</text>
<rect x="1001.7" y="565.15" width="6" height="1.3" fill="#e0e0e0"/>
<text x="1001" y="571.6" font-size="15.5" text-anchor="end" textLength="8.02" lengthAdjust="spacingAndGlyphs" fill="#e2e2e2">0</text>
<rect x="1084.15" y="566.2" width="1.3" height="6.6" fill="#e0e0e0"/>
<text x="1084.8" y="589.2" font-size="15.5" text-anchor="middle" textLength="20.04" lengthAdjust="spacingAndGlyphs" fill="#e2e2e2">0,1</text>
<rect x="1001.7" y="503.3" width="6" height="1.3" fill="#e0e0e0"/>
<text x="1001" y="509.75" font-size="15.5" text-anchor="end" textLength="20.04" lengthAdjust="spacingAndGlyphs" fill="#e2e2e2">0,1</text>
<rect x="1161.25" y="566.2" width="1.3" height="6.6" fill="#e0e0e0"/>
<text x="1161.9" y="589.2" font-size="15.5" text-anchor="middle" textLength="20.04" lengthAdjust="spacingAndGlyphs" fill="#e2e2e2">0,2</text>
<rect x="1001.7" y="441.45" width="6" height="1.3" fill="#e0e0e0"/>
<text x="1001" y="447.9" font-size="15.5" text-anchor="end" textLength="20.04" lengthAdjust="spacingAndGlyphs" fill="#e2e2e2">0,2</text>
<rect x="1238.35" y="566.2" width="1.3" height="6.6" fill="#e0e0e0"/>
<text x="1239" y="589.2" font-size="15.5" text-anchor="middle" textLength="20.04" lengthAdjust="spacingAndGlyphs" fill="#e2e2e2">0,3</text>
<rect x="1001.7" y="379.6" width="6" height="1.3" fill="#e0e0e0"/>
<text x="1001" y="386.05" font-size="15.5" text-anchor="end" textLength="20.04" lengthAdjust="spacingAndGlyphs" fill="#e2e2e2">0,3</text>
<rect x="1315.45" y="566.2" width="1.3" height="6.6" fill="#e0e0e0"/>
<text x="1316.1" y="589.2" font-size="15.5" text-anchor="middle" textLength="20.04" lengthAdjust="spacingAndGlyphs" fill="#e2e2e2">0,4</text>
<rect x="1001.7" y="317.75" width="6" height="1.3" fill="#e0e0e0"/>
<text x="1001" y="324.2" font-size="15.5" text-anchor="end" textLength="20.04" lengthAdjust="spacingAndGlyphs" fill="#e2e2e2">0,4</text>
<rect x="1392.55" y="566.2" width="1.3" height="6.6" fill="#e0e0e0"/>
<text x="1393.2" y="589.2" font-size="15.5" text-anchor="middle" textLength="20.04" lengthAdjust="spacingAndGlyphs" fill="#e2e2e2">0,5</text>
<rect x="1001.7" y="255.9" width="6" height="1.3" fill="#e0e0e0"/>
<text x="1001" y="262.35" font-size="15.5" text-anchor="end" textLength="20.04" lengthAdjust="spacingAndGlyphs" fill="#e2e2e2">0,5</text>
<rect x="1469.65" y="566.2" width="1.3" height="6.6" fill="#e0e0e0"/>
<text x="1470.3" y="589.2" font-size="15.5" text-anchor="middle" textLength="20.04" lengthAdjust="spacingAndGlyphs" fill="#e2e2e2">0,6</text>
<rect x="1001.7" y="194.05" width="6" height="1.3" fill="#e0e0e0"/>
<text x="1001" y="200.5" font-size="15.5" text-anchor="end" textLength="20.04" lengthAdjust="spacingAndGlyphs" fill="#e2e2e2">0,6</text>
<rect x="1546.75" y="566.2" width="1.3" height="6.6" fill="#e0e0e0"/>
<text x="1547.4" y="589.2" font-size="15.5" text-anchor="middle" textLength="20.04" lengthAdjust="spacingAndGlyphs" fill="#e2e2e2">0,7</text>
<rect x="1001.7" y="132.2" width="6" height="1.3" fill="#e0e0e0"/>
<text x="1001" y="138.65" font-size="15.5" text-anchor="end" textLength="20.04" lengthAdjust="spacingAndGlyphs" fill="#e2e2e2">0,7</text>
<rect x="1623.85" y="566.2" width="1.3" height="6.6" fill="#e0e0e0"/>
<text x="1624.5" y="589.2" font-size="15.5" text-anchor="middle" textLength="20.04" lengthAdjust="spacingAndGlyphs" fill="#e2e2e2">0,8</text>
<rect x="1001.7" y="70.35" width="6" height="1.3" fill="#e0e0e0"/>
<text x="1001" y="76.8" font-size="15.5" text-anchor="end" textLength="20.04" lengthAdjust="spacingAndGlyphs" fill="#e2e2e2">0,8</text>
<text x="1318.5" y="39.7" font-size="15.4" text-anchor="middle" textLength="77" lengthAdjust="spacingAndGlyphs" fill="#e2e2e2">CIE 1931 xy</text>
<rect x="1290.9" y="355" width="13.2" height="13.2" fill="none" stroke="#ffffff" stroke-width="1.6"/>
<rect x="1342.8" y="354.5" width="13.2" height="13.2" fill="none" stroke="#ffffff" stroke-width="1.6"/>
<rect x="1388.8" y="354.5" width="13.2" height="13.2" fill="none" stroke="#ffffff" stroke-width="1.6"/>
<rect x="1437.8" y="354.5" width="13.2" height="13.2" fill="none" stroke="#ffffff" stroke-width="1.6"/>
<rect x="1493.8" y="354.5" width="13.2" height="13.2" fill="none" stroke="#ffffff" stroke-width="1.6"/>
<rect x="1240" y="321.7" width="13.2" height="13.2" fill="none" stroke="#ffffff" stroke-width="1.6"/>
<rect x="1237.9" y="288.4" width="13.2" height="13.2" fill="none" stroke="#ffffff" stroke-width="1.6"/>
<rect x="1234.9" y="256.4" width="13.2" height="13.2" fill="none" stroke="#ffffff" stroke-width="1.6"/>
<rect x="1233.9" y="223.9" width="13.2" height="13.2" fill="none" stroke="#ffffff" stroke-width="1.6"/>
<rect x="1230.9" y="187.3" width="13.2" height="13.2" fill="none" stroke="#ffffff" stroke-width="1.6"/>
<rect x="1215.9" y="389.3" width="13.2" height="13.2" fill="none" stroke="#ffffff" stroke-width="1.6"/>
<rect x="1191.9" y="421.9" width="13.2" height="13.2" fill="none" stroke="#ffffff" stroke-width="1.6"/>
<rect x="1166.9" y="454" width="13.2" height="13.2" fill="none" stroke="#ffffff" stroke-width="1.6"/>
<rect x="1142.8" y="485.8" width="13.2" height="13.2" fill="none" stroke="#ffffff" stroke-width="1.6"/>
<rect x="1115.9" y="522.4" width="13.2" height="13.2" fill="none" stroke="#ffffff" stroke-width="1.6"/>
<rect x="1227.2" y="356" width="13.2" height="13.2" fill="none" stroke="#ffffff" stroke-width="1.6"/>
<rect x="1214.1" y="356" width="13.2" height="13.2" fill="none" stroke="#ffffff" stroke-width="1.6"/>
<rect x="1201.3" y="356" width="13.2" height="13.2" fill="none" stroke="#ffffff" stroke-width="1.6"/>
<rect x="1187.4" y="356" width="13.2" height="13.2" fill="none" stroke="#ffffff" stroke-width="1.6"/>
<rect x="1173.6" y="356" width="13.2" height="13.2" fill="none" stroke="#ffffff" stroke-width="1.6"/>
<rect x="1243.8" y="377" width="13.2" height="13.2" fill="none" stroke="#ffffff" stroke-width="1.6"/>
<rect x="1245" y="399.3" width="13.2" height="13.2" fill="none" stroke="#ffffff" stroke-width="1.6"/>
<rect x="1244.8" y="419.1" width="13.2" height="13.2" fill="none" stroke="#ffffff" stroke-width="1.6"/>
<rect x="1245.8" y="441.5" width="13.2" height="13.2" fill="none" stroke="#ffffff" stroke-width="1.6"/>
<rect x="1247.8" y="464" width="13.2" height="13.2" fill="none" stroke="#ffffff" stroke-width="1.6"/>
<rect x="1259.4" y="331.4" width="13.2" height="13.2" fill="none" stroke="#ffffff" stroke-width="1.6"/>
<rect x="1274.7" y="310.8" width="13.2" height="13.2" fill="none" stroke="#ffffff" stroke-width="1.6"/>
<rect x="1290.9" y="288.4" width="13.2" height="13.2" fill="none" stroke="#ffffff" stroke-width="1.6"/>
<rect x="1305.9" y="268.8" width="13.2" height="13.2" fill="none" stroke="#ffffff" stroke-width="1.6"/>
<rect x="1323.9" y="246.3" width="13.2" height="13.2" fill="none" stroke="#ffffff" stroke-width="1.6"/>
<rect x="1241.9" y="356.1" width="13" height="13" fill="none" stroke="#000000" stroke-width="2"/>
<circle cx="1284" cy="352.7" r="4.6" fill="#be8384" stroke="#000000" stroke-width="1.2"/>
<circle cx="1321" cy="352.7" r="4.6" fill="#c0696b" stroke="#000000" stroke-width="1.2"/>
<circle cx="1355.1" cy="351.2" r="4.6" fill="#c25458" stroke="#000000" stroke-width="1.2"/>
<circle cx="1411" cy="351.2" r="4.6" fill="#c33a3f" stroke="#000000" stroke-width="1.2"/>
<circle cx="1453.1" cy="351.2" r="4.6" fill="#c80a0a" stroke="#000000" stroke-width="1.2"/>
<circle cx="1249.8" cy="326.9" r="4.6" fill="#9bb996" stroke="#000000" stroke-width="1.2"/>
<circle cx="1253.8" cy="299" r="4.6" fill="#82b27e" stroke="#000000" stroke-width="1.2"/>
<circle cx="1256.9" cy="277" r="4.6" fill="#6eb46c" stroke="#000000" stroke-width="1.2"/>
<circle cx="1262.5" cy="250.1" r="4.6" fill="#52b452" stroke="#000000" stroke-width="1.2"/>
<circle cx="1266.6" cy="217.9" r="4.6" fill="#16a01a" stroke="#000000" stroke-width="1.2"/>
<circle cx="1221.5" cy="380.6" r="4.6" fill="#9693b8" stroke="#000000" stroke-width="1.2"/>
<circle cx="1196.9" cy="407" r="4.6" fill="#7d79b9" stroke="#000000" stroke-width="1.2"/>
<circle cx="1177.9" cy="429.9" r="4.6" fill="#6464be" stroke="#000000" stroke-width="1.2"/>
<circle cx="1154.8" cy="453.6" r="4.6" fill="#4a48b8" stroke="#000000" stroke-width="1.2"/>
<circle cx="1129" cy="483.1" r="4.6" fill="#0404c6" stroke="#000000" stroke-width="1.2"/>
<circle cx="1235.2" cy="353.9" r="4.6" fill="#a0beb9" stroke="#000000" stroke-width="1.2"/>
<circle cx="1225.3" cy="353.9" r="4.6" fill="#87b9b9" stroke="#000000" stroke-width="1.2"/>
<circle cx="1214.6" cy="353.9" r="4.6" fill="#6eb9be" stroke="#000000" stroke-width="1.2"/>
<circle cx="1206.5" cy="353.9" r="4.6" fill="#50b9be" stroke="#000000" stroke-width="1.2"/>
<circle cx="1195.4" cy="354.9" r="4.6" fill="#14b4c3" stroke="#000000" stroke-width="1.2"/>
<circle cx="1243.5" cy="370.9" r="4.6" fill="#c3a0c3" stroke="#000000" stroke-width="1.2"/>
<circle cx="1238.9" cy="390.1" r="4.6" fill="#c382c3" stroke="#000000" stroke-width="1.2"/>
<circle cx="1237.9" cy="404" r="4.6" fill="#c364be" stroke="#000000" stroke-width="1.2"/>
<circle cx="1234.8" cy="421" r="4.6" fill="#c346b9" stroke="#000000" stroke-width="1.2"/>
<circle cx="1231" cy="441" r="4.6" fill="#c800b4" stroke="#000000" stroke-width="1.2"/>
<circle cx="1262.3" cy="335.8" r="4.6" fill="#b5bba0" stroke="#000000" stroke-width="1.2"/>
<circle cx="1279.7" cy="316" r="4.6" fill="#b7b782" stroke="#000000" stroke-width="1.2"/>
<circle cx="1293.3" cy="298.8" r="4.6" fill="#b7b46c" stroke="#000000" stroke-width="1.2"/>
<circle cx="1308.4" cy="284" r="4.6" fill="#b9b255" stroke="#000000" stroke-width="1.2"/>
<circle cx="1328.9" cy="261.6" r="4.6" fill="#b9af1e" stroke="#000000" stroke-width="1.2"/>
<circle cx="1243.5" cy="356.9" r="4.6" fill="#ffffff" stroke="#000000" stroke-width="1.2"/>
<rect x="1470.4" y="44.5" width="185.6" height="192.1" fill="#8e8e8e"/>
<g clip-path="url(#insc)">
<rect x="1471.2" y="45" width="184.4" height="3.6" fill="url(#c303)"/>
<rect x="1471.2" y="48" width="184.4" height="3.6" fill="url(#c304)"/>
<rect x="1471.2" y="51" width="184.4" height="3.6" fill="url(#c305)"/>
<rect x="1471.2" y="54" width="184.4" height="3.6" fill="url(#c306)"/>
<rect x="1471.2" y="57" width="184.4" height="3.6" fill="url(#c307)"/>
<rect x="1471.2" y="60" width="184.4" height="3.6" fill="url(#c308)"/>
<rect x="1471.2" y="63" width="184.4" height="3.6" fill="url(#c309)"/>
<rect x="1471.2" y="66" width="184.4" height="3.6" fill="url(#c310)"/>
<rect x="1471.2" y="69" width="184.4" height="3.6" fill="url(#c311)"/>
<rect x="1471.2" y="72" width="184.4" height="3.6" fill="url(#c312)"/>
<rect x="1471.2" y="75" width="184.4" height="3.6" fill="url(#c313)"/>
<rect x="1471.2" y="78" width="184.4" height="3.6" fill="url(#c314)"/>
<rect x="1471.2" y="81" width="184.4" height="3.6" fill="url(#c315)"/>
<rect x="1471.2" y="84" width="184.4" height="3.6" fill="url(#c316)"/>
<rect x="1471.2" y="87" width="184.4" height="3.6" fill="url(#c317)"/>
<rect x="1471.2" y="90" width="184.4" height="3.6" fill="url(#c318)"/>
<rect x="1471.2" y="93" width="184.4" height="3.6" fill="url(#c319)"/>
<rect x="1471.2" y="96" width="184.4" height="3.6" fill="url(#c320)"/>
<rect x="1471.2" y="99" width="184.4" height="3.6" fill="url(#c321)"/>
<rect x="1471.2" y="102" width="184.4" height="3.6" fill="url(#c322)"/>
<rect x="1471.2" y="105" width="184.4" height="3.6" fill="url(#c323)"/>
<rect x="1471.2" y="108" width="184.4" height="3.6" fill="url(#c324)"/>
<rect x="1471.2" y="111" width="184.4" height="3.6" fill="url(#c325)"/>
<rect x="1471.2" y="114" width="184.4" height="3.6" fill="url(#c326)"/>
<rect x="1471.2" y="117" width="184.4" height="3.6" fill="url(#c327)"/>
<rect x="1471.2" y="120" width="184.4" height="3.6" fill="url(#c328)"/>
<rect x="1471.2" y="123" width="184.4" height="3.6" fill="url(#c329)"/>
<rect x="1471.2" y="126" width="184.4" height="3.6" fill="url(#c330)"/>
<rect x="1471.2" y="129" width="184.4" height="3.6" fill="url(#c331)"/>
<rect x="1471.2" y="132" width="184.4" height="3.6" fill="url(#c332)"/>
<rect x="1471.2" y="135" width="184.4" height="3.6" fill="url(#c333)"/>
<rect x="1471.2" y="138" width="184.4" height="3.6" fill="url(#c334)"/>
<rect x="1471.2" y="141" width="184.4" height="3.6" fill="url(#c335)"/>
<rect x="1471.2" y="144" width="184.4" height="3.6" fill="url(#c336)"/>
<rect x="1471.2" y="147" width="184.4" height="3.6" fill="url(#c337)"/>
<rect x="1471.2" y="150" width="184.4" height="3.6" fill="url(#c338)"/>
<rect x="1471.2" y="153" width="184.4" height="3.6" fill="url(#c339)"/>
<rect x="1471.2" y="156" width="184.4" height="3.6" fill="url(#c340)"/>
<rect x="1471.2" y="159" width="184.4" height="3.6" fill="url(#c341)"/>
<rect x="1471.2" y="162" width="184.4" height="3.6" fill="url(#c342)"/>
<rect x="1471.2" y="165" width="184.4" height="3.6" fill="url(#c343)"/>
<rect x="1471.2" y="168" width="184.4" height="3.6" fill="url(#c344)"/>
<rect x="1471.2" y="171" width="184.4" height="3.6" fill="url(#c345)"/>
<rect x="1471.2" y="174" width="184.4" height="3.6" fill="url(#c346)"/>
<rect x="1471.2" y="177" width="184.4" height="3.6" fill="url(#c347)"/>
<rect x="1471.2" y="180" width="184.4" height="3.6" fill="url(#c348)"/>
<rect x="1471.2" y="183" width="184.4" height="3.6" fill="url(#c349)"/>
<rect x="1471.2" y="186" width="184.4" height="3.6" fill="url(#c350)"/>
<rect x="1471.2" y="189" width="184.4" height="3.6" fill="url(#c351)"/>
<rect x="1471.2" y="192" width="184.4" height="3.6" fill="url(#c352)"/>
<rect x="1471.2" y="195" width="184.4" height="3.6" fill="url(#c353)"/>
<rect x="1471.2" y="198" width="184.4" height="3.6" fill="url(#c354)"/>
<rect x="1471.2" y="201" width="184.4" height="3.6" fill="url(#c355)"/>
<rect x="1471.2" y="204" width="184.4" height="3.6" fill="url(#c356)"/>
<rect x="1471.2" y="207" width="184.4" height="3.6" fill="url(#c357)"/>
<rect x="1471.2" y="210" width="184.4" height="3.6" fill="url(#c358)"/>
<rect x="1471.2" y="213" width="184.4" height="3.6" fill="url(#c359)"/>
<rect x="1471.2" y="216" width="184.4" height="3.6" fill="url(#c360)"/>
<rect x="1471.2" y="219" width="184.4" height="3.6" fill="url(#c361)"/>
<rect x="1471.2" y="222" width="184.4" height="3.6" fill="url(#c362)"/>
<rect x="1471.2" y="225" width="184.4" height="3.6" fill="url(#c363)"/>
<rect x="1471.2" y="228" width="184.4" height="3.6" fill="url(#c364)"/>
<rect x="1471.2" y="231" width="184.4" height="3.6" fill="url(#c365)"/>
<rect x="1471.2" y="234" width="184.4" height="2.6" fill="url(#c366)"/>
<path d="M1469.2,64.52 L1657.6,216.52 L1657.6,43 L1469.2,43Z" fill="#000" fill-opacity="0.41"/>
</g>
<rect x="1555.9" y="133.2" width="13.2" height="13.2" fill="none" stroke="#ffffff" stroke-width="1.6"/>
<circle cx="1555" cy="193" r="4.6" fill="#b9af1e" stroke="#000000" stroke-width="1.2"/>
</svg>
</body></html>
